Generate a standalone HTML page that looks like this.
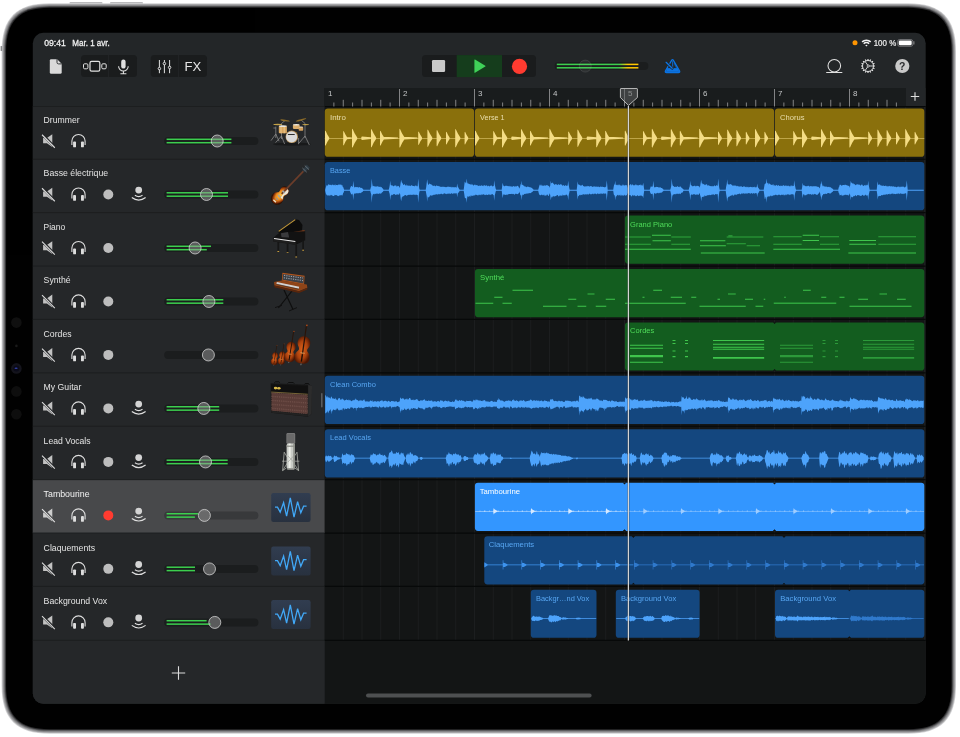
<!DOCTYPE html>
<html lang="fr"><head><meta charset="utf-8"><title>GarageBand</title>
<style>html,body{margin:0;padding:0;background:#fff}body{width:960px;height:737px;overflow:hidden}svg{display:block;will-change:transform;opacity:0.9999}</style></head>
<body>
<svg width="960" height="737" viewBox="0 0 960 737" font-family="'Liberation Sans', sans-serif">
<defs>
<linearGradient id="ring" x1="0" y1="0" x2="1" y2="1">
<stop offset="0" stop-color="#f2f2f2"/><stop offset="0.5" stop-color="#bdbdbf"/><stop offset="1" stop-color="#8a8a8c"/>
</linearGradient>
<linearGradient id="mvol" x1="0" y1="0" x2="1" y2="0">
<stop offset="0" stop-color="#3ccf4e"/><stop offset="0.76" stop-color="#3ccf4e"/><stop offset="0.87" stop-color="#ffc800"/><stop offset="1" stop-color="#ffc800"/>
</linearGradient>
<linearGradient id="wavebox" x1="0" y1="0" x2="0" y2="1">
<stop offset="0" stop-color="#313d50"/><stop offset="1" stop-color="#28313f"/>
</linearGradient>
<clipPath id="scr"><rect x="32.8" y="32.8" width="892.9" height="671" rx="10.5" ry="10.5"/></clipPath>
</defs>
<rect width="960" height="737" fill="#fff"/>
<rect x="69.5" y="2" width="33" height="3" rx="1" fill="#b9b9bb"/>
<rect x="110" y="2" width="33" height="3" rx="1" fill="#b9b9bb"/>
<path d="M49.6 3.2H908C941.31 3.2 956 17.89 956 51.2V685.7C956 719.01 941.31 733.7 908 733.7H49.6C16.29 733.7 1.6 719.01 1.6 685.7V51.2C1.6 17.89 16.29 3.2 49.6 3.2Z" fill="#d2d2d4"/>
<path d="M49.6 4H908C940.76 4 955.2 18.44 955.2 51.2V685.7C955.2 718.46 940.76 732.9 908 732.9H49.6C16.84 732.9 2.4 718.46 2.4 685.7V51.2C2.4 18.44 16.84 4 49.6 4Z" fill="#a6a6a8"/>
<path d="M49.6 4.9H908C940.13 4.9 954.3 19.07 954.3 51.2V685.7C954.3 717.83 940.13 732 908 732H49.6C17.47 732 3.3 717.83 3.3 685.7V51.2C3.3 19.07 17.47 4.9 49.6 4.9Z" fill="#868688"/>
<path d="M49.6 5.9H908C939.44 5.9 953.3 19.76 953.3 51.2V685.7C953.3 717.14 939.44 731 908 731H49.6C18.16 731 4.3 717.14 4.3 685.7V51.2C4.3 19.76 18.16 5.9 49.6 5.9Z" fill="#5c5c5e"/>
<path d="M49.6 6.8H908C938.81 6.8 952.4 20.39 952.4 51.2V685.7C952.4 716.51 938.81 730.1 908 730.1H49.6C18.79 730.1 5.2 716.51 5.2 685.7V51.2C5.2 20.39 18.79 6.8 49.6 6.8Z" fill="#2c2c2e"/>
<path d="M49.6 7.7H908C938.19 7.7 951.5 21.01 951.5 51.2V685.7C951.5 715.89 938.19 729.2 908 729.2H49.6C19.41 729.2 6.1 715.89 6.1 685.7V51.2C6.1 21.01 19.41 7.7 49.6 7.7Z" fill="#000"/>
<rect x="0.6" y="46" width="1.6" height="5" rx="0.6" fill="#8a8a8c"/>
<circle cx="16.4" cy="322.6" r="5.3" fill="#101010"/>
<circle cx="16.4" cy="391.4" r="5.3" fill="#0e0e0e"/>
<circle cx="16.4" cy="414.3" r="5.3" fill="#0e0e0e"/>
<circle cx="16.4" cy="345.9" r="1.3" fill="#1a1a1a"/>
<circle cx="16.4" cy="368.4" r="5.3" fill="#14141c"/><circle cx="16.4" cy="368.4" r="3" fill="#0a0a18"/><ellipse cx="16.1" cy="368.3" rx="1.6" ry="0.8" fill="#3240a8"/>
<g clip-path="url(#scr)">
<rect x="32" y="32" width="895" height="673" fill="#232628"/>
<rect x="324.5" y="88" width="602.5" height="617" fill="#131515"/>
<rect x="32" y="106.5" width="292.5" height="600" fill="#252729"/>
<rect x="324.5" y="88" width="581.5" height="18.5" fill="#191c1d"/>
<rect x="906" y="88" width="20" height="18.5" fill="#232628"/>
<path d="M324.5 106.5V640M343.25 106.5V640M362 106.5V640M380.75 106.5V640M399.5 106.5V640M418.25 106.5V640M437 106.5V640M455.75 106.5V640M474.5 106.5V640M493.25 106.5V640M512 106.5V640M530.75 106.5V640M549.5 106.5V640M568.25 106.5V640M587 106.5V640M605.75 106.5V640M624.5 106.5V640M643.25 106.5V640M662 106.5V640M680.75 106.5V640M699.5 106.5V640M718.25 106.5V640M737 106.5V640M755.75 106.5V640M774.5 106.5V640M793.25 106.5V640M812 106.5V640M830.75 106.5V640M849.5 106.5V640M868.25 106.5V640M887 106.5V640M905.75 106.5V640M924.5 106.5V640" stroke="#1c1e1f" stroke-width="1" fill="none"/>
<path d="M324.5 106.5H926M324.5 159.25H926M324.5 212.65H926M324.5 266.05H926M324.5 319.45H926M324.5 372.85H926M324.5 426.25H926M324.5 479.65H926M324.5 533.05H926M324.5 586.45H926M324.5 640.3H926" stroke="#070909" stroke-width="1.2" fill="none"/>
<path d="M333.88 102.5V106.5M343.25 99.8V106.5M352.62 102.5V106.5M362 99.8V106.5M371.38 102.5V106.5M380.75 99.8V106.5M390.12 102.5V106.5M399.5 89V106.5M408.88 102.5V106.5M418.25 99.8V106.5M427.62 102.5V106.5M437 99.8V106.5M446.38 102.5V106.5M455.75 99.8V106.5M465.12 102.5V106.5M474.5 89V106.5M483.88 102.5V106.5M493.25 99.8V106.5M502.62 102.5V106.5M512 99.8V106.5M521.38 102.5V106.5M530.75 99.8V106.5M540.12 102.5V106.5M549.5 89V106.5M558.88 102.5V106.5M568.25 99.8V106.5M577.62 102.5V106.5M587 99.8V106.5M596.38 102.5V106.5M605.75 99.8V106.5M615.12 102.5V106.5M624.5 89V106.5M633.88 102.5V106.5M643.25 99.8V106.5M652.62 102.5V106.5M662 99.8V106.5M671.38 102.5V106.5M680.75 99.8V106.5M690.12 102.5V106.5M699.5 89V106.5M708.88 102.5V106.5M718.25 99.8V106.5M727.62 102.5V106.5M737 99.8V106.5M746.38 102.5V106.5M755.75 99.8V106.5M765.12 102.5V106.5M774.5 89V106.5M783.88 102.5V106.5M793.25 99.8V106.5M802.62 102.5V106.5M812 99.8V106.5M821.38 102.5V106.5M830.75 99.8V106.5M840.12 102.5V106.5M849.5 89V106.5M858.88 102.5V106.5M868.25 99.8V106.5M877.62 102.5V106.5M887 99.8V106.5M896.38 102.5V106.5" stroke="#8e9091" stroke-width="0.9" fill="none"/>
<text x="328" y="96" font-size="8" fill="#c2c4c5" >1</text>
<text x="403" y="96" font-size="8" fill="#c2c4c5" >2</text>
<text x="478" y="96" font-size="8" fill="#c2c4c5" >3</text>
<text x="553" y="96" font-size="8" fill="#c2c4c5" >4</text>
<text x="628" y="96" font-size="8" fill="#c2c4c5" >5</text>
<text x="703" y="96" font-size="8" fill="#c2c4c5" >6</text>
<text x="778" y="96" font-size="8" fill="#c2c4c5" >7</text>
<text x="853" y="96" font-size="8" fill="#c2c4c5" >8</text>
<path d="M910.8 96.5H919.2M915 92.3V100.7" stroke="#e0e0e0" stroke-width="1.1" fill="none"/>
<rect x="324.8" y="108.6" width="149.3" height="48.2" rx="3.1" ry="3.1" fill="#8a700c"/>
<rect x="474.9" y="108.6" width="299.2" height="48.2" rx="3.1" ry="3.1" fill="#8a700c"/>
<rect x="774.9" y="108.6" width="149.4" height="48.2" rx="3.1" ry="3.1" fill="#8a700c"/>
<path d="M324.8 137.9H474.1V138.5H324.8ZM325 131.13L325.5 130.6L327.29 134.4L329.25 137.5V138.9L327.29 142L325.5 145.8L325 145.27ZM343.2 131.5L343.7 131L345.4 134.6L347.24 137.5V138.9L345.4 141.8L343.7 145.4L343.2 144.9ZM346.74 137.1L351.8 137.6V138.8L346.74 139.3ZM352 129.36L352.5 128.7L354.7 133.45L357.24 137.5V138.9L354.7 142.95L352.5 147.7L352 147.03ZM361.3 137.18L361.9 136.5L370.9 137.3V139.1L361.9 139.9L361.3 139.22ZM371 129.64L371.5 129L373.64 133.6L376.08 137.5V138.9L373.64 142.8L371.5 147.4L371 146.76ZM380 131.22L380.5 130.7L382.26 134.45L384.2 137.5V138.9L382.26 141.95L380.5 145.7L380 145.17ZM383.7 136.85L398 137.6V138.8L383.7 139.55ZM399.4 129.36L399.9 128.7L402.1 133.45L404.64 137.5V138.9L402.1 142.95L399.9 147.7L399.4 147.03ZM404.14 136.85L417.4 137.6V138.8L404.14 139.55ZM418.2 131.88L418.7 131.4L420.31 134.8L422.04 137.5V138.9L420.31 141.6L418.7 145L418.2 144.52ZM427.4 130.02L427.9 129.4L429.95 133.8L432.28 137.5V138.9L429.95 142.6L427.9 147L427.4 146.38ZM436.6 130.57L437.1 130L439.02 134.1L441.16 137.5V138.9L439.02 142.3L437.1 146.4L436.6 145.83ZM446 132.25L446.5 131.8L448.02 135L449.63 137.5V138.9L448.02 141.4L446.5 144.6L446 144.15ZM455.2 129.55L455.7 128.9L457.86 133.55L460.34 137.5V138.9L457.86 142.85L455.7 147.5L455.2 146.85ZM464.6 132.25L465.1 131.8L466.62 135L468.23 137.5V138.9L466.62 141.4L465.1 144.6L464.6 144.15Z" fill="#f4dc84"/>
<path d="M474.8 137.9H624.6V138.5H474.8ZM475 131.13L475.5 130.6L477.29 134.4L479.25 137.5V138.9L477.29 142L475.5 145.8L475 145.27ZM493.2 131.5L493.7 131L495.4 134.6L497.24 137.5V138.9L495.4 141.8L493.7 145.4L493.2 144.9ZM496.74 137.1L501.8 137.6V138.8L496.74 139.3ZM502 129.36L502.5 128.7L504.7 133.45L507.24 137.5V138.9L504.7 142.95L502.5 147.7L502 147.03ZM511.3 137.18L511.9 136.5L520.9 137.3V139.1L511.9 139.9L511.3 139.22ZM521 129.64L521.5 129L523.64 133.6L526.08 137.5V138.9L523.64 142.8L521.5 147.4L521 146.76ZM530 131.22L530.5 130.7L532.26 134.45L534.2 137.5V138.9L532.26 141.95L530.5 145.7L530 145.17ZM533.7 136.85L548 137.6V138.8L533.7 139.55ZM549.4 129.36L549.9 128.7L552.1 133.45L554.64 137.5V138.9L552.1 142.95L549.9 147.7L549.4 147.03ZM554.14 136.85L567.4 137.6V138.8L554.14 139.55ZM568.2 131.88L568.7 131.4L570.31 134.8L572.04 137.5V138.9L570.31 141.6L568.7 145L568.2 144.52ZM577.4 130.02L577.9 129.4L579.95 133.8L582.28 137.5V138.9L579.95 142.6L577.9 147L577.4 146.38ZM586.7 137.18L587.3 136.5L596.3 137.3V139.1L587.3 139.9L586.7 139.22ZM596.2 129.64L596.7 129L598.84 133.6L601.28 137.5V138.9L598.84 142.8L596.7 147.4L596.2 146.76ZM605.2 131.22L605.7 130.7L607.46 134.45L609.4 137.5V138.9L607.46 141.95L605.7 145.7L605.2 145.17ZM608.9 136.85L623.2 137.6V138.8L608.9 139.55Z" fill="#f4dc84"/>
<path d="M624.6 137.9H774.1V138.5H624.6ZM624.8 131.13L625.3 130.6L627.09 134.4L629.05 137.5V138.9L627.09 142L625.3 145.8L624.8 145.27ZM643 131.5L643.5 131L645.2 134.6L647.04 137.5V138.9L645.2 141.8L643.5 145.4L643 144.9ZM646.54 137.1L651.6 137.6V138.8L646.54 139.3ZM651.8 129.36L652.3 128.7L654.5 133.45L657.04 137.5V138.9L654.5 142.95L652.3 147.7L651.8 147.03ZM661.1 137.18L661.7 136.5L670.7 137.3V139.1L661.7 139.9L661.1 139.22ZM670.8 129.64L671.3 129L673.44 133.6L675.88 137.5V138.9L673.44 142.8L671.3 147.4L670.8 146.76ZM679.8 131.22L680.3 130.7L682.06 134.45L684 137.5V138.9L682.06 141.95L680.3 145.7L679.8 145.17ZM683.5 136.85L697.8 137.6V138.8L683.5 139.55ZM699.2 129.36L699.7 128.7L701.9 133.45L704.44 137.5V138.9L701.9 142.95L699.7 147.7L699.2 147.03ZM703.94 136.85L717.2 137.6V138.8L703.94 139.55ZM718 131.88L718.5 131.4L720.11 134.8L721.84 137.5V138.9L720.11 141.6L718.5 145L718 144.52ZM727.2 130.02L727.7 129.4L729.75 133.8L732.08 137.5V138.9L729.75 142.6L727.7 147L727.2 146.38ZM736.4 130.57L736.9 130L738.82 134.1L740.96 137.5V138.9L738.82 142.3L736.9 146.4L736.4 145.83ZM745.8 132.25L746.3 131.8L747.82 135L749.43 137.5V138.9L747.82 141.4L746.3 144.6L745.8 144.15ZM755 129.55L755.5 128.9L757.66 133.55L760.14 137.5V138.9L757.66 142.85L755.5 147.5L755 146.85ZM764.4 132.25L764.9 131.8L766.42 135L768.03 137.5V138.9L766.42 141.4L764.9 144.6L764.4 144.15Z" fill="#f4dc84"/>
<path d="M774.8 137.9H924.3V138.5H774.8ZM775 131.13L775.5 130.6L777.29 134.4L779.25 137.5V138.9L777.29 142L775.5 145.8L775 145.27ZM793.2 131.5L793.7 131L795.4 134.6L797.24 137.5V138.9L795.4 141.8L793.7 145.4L793.2 144.9ZM796.74 137.1L801.8 137.6V138.8L796.74 139.3ZM802 129.36L802.5 128.7L804.7 133.45L807.24 137.5V138.9L804.7 142.95L802.5 147.7L802 147.03ZM811.3 137.18L811.9 136.5L820.9 137.3V139.1L811.9 139.9L811.3 139.22ZM821 129.64L821.5 129L823.64 133.6L826.08 137.5V138.9L823.64 142.8L821.5 147.4L821 146.76ZM830 131.22L830.5 130.7L832.26 134.45L834.2 137.5V138.9L832.26 141.95L830.5 145.7L830 145.17ZM833.7 136.85L848 137.6V138.8L833.7 139.55ZM849.4 129.36L849.9 128.7L852.1 133.45L854.64 137.5V138.9L852.1 142.95L849.9 147.7L849.4 147.03ZM854.14 136.85L867.4 137.6V138.8L854.14 139.55ZM868.2 131.88L868.7 131.4L870.31 134.8L872.04 137.5V138.9L870.31 141.6L868.7 145L868.2 144.52ZM877.4 130.02L877.9 129.4L879.95 133.8L882.28 137.5V138.9L879.95 142.6L877.9 147L877.4 146.38ZM886.6 130.57L887.1 130L889.02 134.1L891.16 137.5V138.9L889.02 142.3L887.1 146.4L886.6 145.83ZM896 132.25L896.5 131.8L898.02 135L899.63 137.5V138.9L898.02 141.4L896.5 144.6L896 144.15ZM905.2 129.55L905.7 128.9L907.86 133.55L910.34 137.5V138.9L907.86 142.85L905.7 147.5L905.2 146.85ZM914.6 132.25L915.1 131.8L916.62 135L918.23 137.5V138.9L916.62 141.4L915.1 144.6L914.6 144.15Z" fill="#f4dc84"/>
<text x="330" y="119.6" font-size="7.5" fill="#eadfae" textLength="15.8" lengthAdjust="spacingAndGlyphs" >Intro</text>
<text x="480.1" y="119.6" font-size="7.5" fill="#eadfae" textLength="24.5" lengthAdjust="spacingAndGlyphs" >Verse 1</text>
<text x="780.1" y="119.6" font-size="7.5" fill="#eadfae" textLength="24.5" lengthAdjust="spacingAndGlyphs" >Chorus</text>
<rect x="324.8" y="162.05" width="599.5" height="48.2" rx="3.1" ry="3.1" fill="#14477f"/>
<path d="M325.2 189.85L325.7 187.71L326.2 186.28L326.7 184.9L327.2 185.78L327.7 185.38L328.2 184.16L328.7 184.45L329.2 184.79L329.7 184.81L330.2 185.01L330.7 184.78L331.2 184.64L331.7 185.41L332.2 184.48L332.7 184.73L333.2 184.75L333.7 185.28L334.2 185.2L334.7 184.49L335.2 185.72L335.7 184.36L336.2 184.92L336.7 185.11L337.2 185.37L337.7 184.99L338.2 184.84L338.7 184.55L339.2 184.86L339.7 184.55L340.2 184.48L340.7 184.79L341.2 184.6L341.7 185.49L342.2 184.86L342.7 186.68L343.2 187.11L343.7 188.4L344.2 189.85L344.7 189.85L345.2 189.85L345.7 189.85L346.2 189.85L346.7 189.85L347.2 189.85L347.7 189.85L348.2 189.85L348.7 189.85L349.2 189.85L349.7 189.85L350.2 188.1L350.7 186.71L351.2 186.08L351.7 186.05L352.2 186.64L352.7 186.97L353.2 180.75L353.7 184.75L354.2 186.9L354.7 187.54L355.2 187.32L355.7 186.79L356.2 187.26L356.7 187.11L357.2 187.22L357.7 186.89L358.2 187.39L358.7 187.59L359.2 186.92L359.7 187.33L360.2 187.46L360.7 187.91L361.2 187.65L361.7 187.96L362.2 188.28L362.7 188.69L363.2 189.49L363.7 189.85L364.2 189.85L364.7 189.85L365.2 189.85L365.7 189.85L366.2 189.85L366.7 189.85L367.2 189.85L367.7 189.85L368.2 189.85L368.7 189.85L369.2 189.85L369.7 189.85L370.2 189.85L370.7 187.85L371.2 186.53L371.7 178.38L372.2 183.38L372.7 186.15L373.2 186.36L373.7 185.86L374.2 186.22L374.7 186.62L375.2 186.09L375.7 186.89L376.2 186.33L376.7 186.81L377.2 186.26L377.7 186.27L378.2 186.89L378.7 186.29L379.2 187.05L379.7 186.72L380.2 186.43L380.7 187.24L381.2 186.93L381.7 187.32L382.2 188.25L382.7 188.31L383.2 189.22L383.7 189.85L384.2 189.85L384.7 189.85L385.2 189.85L385.7 189.85L386.2 189.85L386.7 189.85L387.2 189.85L387.7 189.85L388.2 189.85L388.7 189.85L389.2 188.02L389.7 185.54L390.2 180.75L390.7 184.75L391.2 185.72L391.7 185.07L392.2 185.4L392.7 185.57L393.2 186.15L393.7 186.26L394.2 185.79L394.7 185.51L395.2 185.4L395.7 185.39L396.2 185.44L396.7 186.66L397.2 186.45L397.7 185.79L398.2 186.14L398.7 185.87L399.2 186.77L399.7 187.96L400.2 185.83L400.7 182.53L401.2 179.8L401.7 182.34L402.2 182.87L402.7 183.55L403.2 184.94L403.7 184.69L404.2 184.57L404.7 184.1L405.2 185.53L405.7 185.52L406.2 184.2L406.7 185.79L407.2 185.5L407.7 185.52L408.2 185.23L408.7 185.91L409.2 186.07L409.7 185.23L410.2 186.23L410.7 185.84L411.2 185.28L411.7 185.29L412.2 185.86L412.7 185.8L413.2 185.93L413.7 185.9L414.2 185.81L414.7 186.48L415.2 186L415.7 185.31L416.2 185.38L416.7 186.27L417.2 186.47L417.7 185.74L418.2 178.38L418.7 183.38L419.2 188.21L419.7 189.85L420.2 189.85L420.7 189.85L421.2 189.85L421.7 189.85L422.2 189.85L422.7 189.85L423.2 189.85L423.7 189.85L424.2 189.85L424.7 189.85L425.2 189.85L425.7 189.85L426.2 187.1L426.7 182.91L427.2 179.33L427.7 182.72L428.2 184.75L428.7 184.73L429.2 183.83L429.7 183.5L430.2 183.99L430.7 184.22L431.2 184.48L431.7 184.58L432.2 185.85L432.7 185.16L433.2 185.79L433.7 185.88L434.2 185.23L434.7 185.9L435.2 186.01L435.7 186.47L436.2 185.32L436.7 185.71L437.2 185.87L437.7 185.96L438.2 186.27L438.7 185.81L439.2 186.87L439.7 185.91L440.2 186.54L440.7 186.9L441.2 186.92L441.7 186.82L442.2 186.43L442.7 186.92L443.2 186.82L443.7 186.66L444.2 187.09L444.7 186.83L445.2 187.19L445.7 187.05L446.2 187.27L446.7 186.93L447.2 186.96L447.7 186.61L448.2 186.99L448.7 186.61L449.2 186.76L449.7 187.05L450.2 187.3L450.7 186.86L451.2 186.69L451.7 187.38L452.2 187.4L452.7 186.73L453.2 187.35L453.7 187.29L454.2 186.89L454.7 187.53L455.2 187.34L455.7 187.06L456.2 187.64L456.7 187.22L457.2 183.6L457.7 186.4L458.2 187.34L458.7 188.17L459.2 189.05L459.7 189.85L460.2 189.85L460.7 189.85L461.2 189.85L461.7 189.85L462.2 189.85L462.7 189.85L463.2 189.85L463.7 189.85L464.2 185.67L464.7 181.87L465.2 181.97L465.7 183.34L466.2 182.7L466.7 178.38L467.2 182.42L467.7 183.52L468.2 183.77L468.7 183.46L469.2 183.91L469.7 183.88L470.2 184.9L470.7 184.11L471.2 183.71L471.7 184.91L472.2 184.52L472.7 184.52L473.2 185.19L473.7 185.67L474.2 184.58L474.7 184.68L475.2 185.52L475.7 184.59L476.2 185.24L476.7 184.88L477.2 185.61L477.7 185.33L478.2 185.66L478.7 186.07L479.2 186.12L479.7 185.13L480.2 186.05L480.7 185.73L481.2 185.17L481.7 185.53L482.2 185.84L482.7 185.67L483.2 186.16L483.7 185.35L484.2 185.34L484.7 185.15L485.2 185.73L485.7 185.63L486.2 185.57L486.7 185.34L487.2 185.72L487.7 186.57L488.2 185.66L488.7 185.86L489.2 186.33L489.7 186.56L490.2 185.72L490.7 185.84L491.2 185.4L491.7 185.54L492.2 186.57L492.7 186.33L493.2 185.91L493.7 186.21L494.2 180.28L494.7 184.48L495.2 186.5L495.7 188.8L496.2 189.85L496.7 189.85L497.2 189.85L497.7 189.85L498.2 189.85L498.7 189.85L499.2 189.85L499.7 189.85L500.2 189.85L500.7 189.85L501.2 189.85L501.7 189.85L502.2 185.85L502.7 182.65L503.2 185L503.7 186.09L504.2 186.21L504.7 186.15L505.2 185.42L505.7 185.88L506.2 186.1L506.7 185.51L507.2 186.35L507.7 185.64L508.2 186.16L508.7 185.88L509.2 186.71L509.7 185.68L510.2 186.13L510.7 186.48L511.2 186.24L511.7 186.75L512.2 186.58L512.7 186.73L513.2 186.23L513.7 185.91L514.2 186.31L514.7 186.8L515.2 186.56L515.7 186.23L516.2 186.05L516.7 186.7L517.2 185.92L517.7 185.85L518.2 185.9L518.7 187.27L519.2 187.45L519.7 188.77L520.2 186.01L520.7 183.72L521.2 185.3L521.7 180.75L522.2 184.75L522.7 184.95L523.2 185.15L523.7 185.65L524.2 185.7L524.7 186.67L525.2 186.05L525.7 186.94L526.2 187.23L526.7 187.08L527.2 186.53L527.7 186.8L528.2 186.77L528.7 186.74L529.2 187.28L529.7 186.97L530.2 187.49L530.7 187.19L531.2 187.51L531.7 188L532.2 188.21L532.7 188.78L533.2 189.29L533.7 189.85L534.2 189.85L534.7 189.85L535.2 189.85L535.7 189.85L536.2 189.85L536.7 189.85L537.2 189.85L537.7 189.85L538.2 189.85L538.7 187.89L539.2 186.2L539.7 184.84L540.2 184.61L540.7 185.52L541.2 185.93L541.7 184.52L542.2 185.14L542.7 185.92L543.2 185.66L543.7 185.81L544.2 185.11L544.7 185.68L545.2 185.7L545.7 185.38L546.2 185.08L546.7 185.19L547.2 185.77L547.7 184.73L548.2 186.01L548.7 185.73L549.2 186.37L549.7 187.75L550.2 185.43L550.7 180.75L551.2 183.19L551.7 183.22L552.2 182.59L552.7 182.87L553.2 183.66L553.7 183.46L554.2 184.38L554.7 185.04L555.2 183.9L555.7 184.18L556.2 185.08L556.7 183.76L557.2 184.85L557.7 185.29L558.2 184.13L558.7 184.29L559.2 184.79L559.7 184.97L560.2 184.33L560.7 184.37L561.2 184.7L561.7 184.37L562.2 185.54L562.7 185.74L563.2 184.9L563.7 185.24L564.2 186.02L564.7 185.66L565.2 185.57L565.7 184.95L566.2 185.97L566.7 185.5L567.2 185.91L567.7 185.06L568.2 180.75L568.7 184.75L569.2 187.75L569.7 189.85L570.2 189.85L570.7 189.85L571.2 189.85L571.7 189.85L572.2 189.85L572.7 189.85L573.2 189.85L573.7 189.85L574.2 189.85L574.7 189.85L575.2 189.85L575.7 189.85L576.2 189.85L576.7 189.85L577.2 185.46L577.7 181.23L578.2 184.98L578.7 184.06L579.2 185.24L579.7 184.51L580.2 185.75L580.7 185.21L581.2 186.08L581.7 185.07L582.2 184.86L582.7 184.97L583.2 186.21L583.7 185.93L584.2 186.53L584.7 186.53L585.2 186.38L585.7 186.21L586.2 186.75L586.7 186.04L587.2 185.73L587.7 186.62L588.2 186.02L588.7 186.37L589.2 186.36L589.7 186.86L590.2 186.32L590.7 186.04L591.2 186.35L591.7 186.21L592.2 186.7L592.7 187L593.2 186.43L593.7 186.61L594.2 186.85L594.7 186.36L595.2 186.2L595.7 186.94L596.2 186.85L596.7 186.39L597.2 186.65L597.7 186.7L598.2 186.81L598.7 186.57L599.2 187.25L599.7 186.97L600.2 186.4L600.7 186.68L601.2 186.39L601.7 186.98L602.2 187.06L602.7 186.38L603.2 187.07L603.7 187.11L604.2 187.15L604.7 187.34L605.2 187.21L605.7 186.87L606.2 186.54L606.7 180.28L607.2 184.48L607.7 189.85L608.2 189.85L608.7 189.85L609.2 189.85L609.7 189.85L610.2 189.85L610.7 189.85L611.2 189.85L611.7 189.85L612.2 189.85L612.7 189.85L613.2 189.85L613.7 186.66L614.2 184.51L614.7 184.5L615.2 180.75L615.7 184.75L616.2 185.37L616.7 184.57L617.2 185.53L617.7 184.53L618.2 185.52L618.7 184.41L619.2 184.3L619.7 185.28L620.2 185.29L620.7 185.49L621.2 185.72L621.7 185.4L622.2 185.86L622.7 184.47L623.2 184.41L623.7 185.43L624.2 185.23L624.7 185.51L625.2 185.47L625.7 184.77L626.2 185.28L626.7 185.32L627.2 185.28L627.7 187.42L628.2 187.48L628.7 184.93L629.2 185.34L629.7 185.31L630.2 184L630.7 184.21L631.2 185.71L631.7 184.4L632.2 184.6L632.7 184.48L633.2 184.88L633.7 185.56L634.2 185.27L634.7 185.19L635.2 185.23L635.7 184.19L636.2 184.4L636.7 185.37L637.2 185.4L637.7 185.02L638.2 185.29L638.7 185.39L639.2 185.11L639.7 184.98L640.2 184.22L640.7 185.13L641.2 185.76L641.7 184.46L642.2 185.77L642.7 185.23L643.2 182.65L643.7 185.85L644.2 189.85L644.7 189.85L645.2 189.85L645.7 189.85L646.2 189.85L646.7 189.85L647.2 189.85L647.7 189.85L648.2 189.85L648.7 189.85L649.2 189.85L649.7 189.85L650.2 188.37L650.7 186.6L651.2 186.6L651.7 186.63L652.2 186.47L652.7 186.66L653.2 180.75L653.7 184.75L654.2 187.45L654.7 187.3L655.2 187.09L655.7 187.14L656.2 186.9L656.7 186.85L657.2 187.11L657.7 186.95L658.2 187.35L658.7 187.54L659.2 187.06L659.7 187.75L660.2 187.52L660.7 187.2L661.2 187.94L661.7 188.04L662.2 188.31L662.7 188.82L663.2 189.22L663.7 189.85L664.2 189.85L664.7 189.85L665.2 189.85L665.7 189.85L666.2 189.85L666.7 189.85L667.2 189.85L667.7 189.85L668.2 189.85L668.7 189.85L669.2 189.85L669.7 189.85L670.2 189.85L670.7 188.28L671.2 185.88L671.7 178.38L672.2 183.38L672.7 185.42L673.2 186.32L673.7 186.1L674.2 186.68L674.7 186.9L675.2 187.03L675.7 186.49L676.2 187.05L676.7 186.64L677.2 186.6L677.7 186.12L678.2 186.67L678.7 186.95L679.2 187.15L679.7 186.62L680.2 186.47L680.7 186.52L681.2 187.51L681.7 187.64L682.2 188.21L682.7 188.64L683.2 189.01L683.7 189.85L684.2 189.85L684.7 189.85L685.2 189.85L685.7 189.85L686.2 189.85L686.7 189.85L687.2 189.85L687.7 189.85L688.2 189.85L688.7 189.85L689.2 187.65L689.7 186.48L690.2 180.75L690.7 184.75L691.2 185.12L691.7 185.84L692.2 186.22L692.7 186.14L693.2 186.07L693.7 186.27L694.2 185.82L694.7 185.66L695.2 185.72L695.7 186.42L696.2 186.13L696.7 185.86L697.2 186.08L697.7 185.63L698.2 186.03L698.7 186.34L699.2 186.25L699.7 187.71L700.2 185.84L700.7 182.65L701.2 179.8L701.7 182.76L702.2 184.4L702.7 183.09L703.2 183.96L703.7 184.35L704.2 184.28L704.7 185.13L705.2 184.28L705.7 185.22L706.2 184.35L706.7 184.3L707.2 184.8L707.7 186.06L708.2 185L708.7 185.47L709.2 185.88L709.7 185.46L710.2 186.19L710.7 185.92L711.2 186.17L711.7 186.17L712.2 185.65L712.7 186.43L713.2 186.24L713.7 186.31L714.2 185.81L714.7 185.37L715.2 186.04L715.7 186.22L716.2 185.32L716.7 185.32L717.2 186.04L717.7 185.33L718.2 178.38L718.7 183.38L719.2 187.55L719.7 189.85L720.2 189.85L720.7 189.85L721.2 189.85L721.7 189.85L722.2 189.85L722.7 189.85L723.2 189.85L723.7 189.85L724.2 189.85L724.7 189.85L725.2 189.85L725.7 189.85L726.2 186.23L726.7 184.37L727.2 179.33L727.7 183.63L728.2 184.12L728.7 184.64L729.2 184.62L729.7 184.6L730.2 184.09L730.7 184.37L731.2 184.33L731.7 184.92L732.2 185.32L732.7 185.79L733.2 185.83L733.7 185.49L734.2 185.09L734.7 185.89L735.2 185.72L735.7 185.3L736.2 186.44L736.7 185.73L737.2 185.81L737.7 186.13L738.2 186.12L738.7 186.77L739.2 185.89L739.7 187.03L740.2 186.13L740.7 186.57L741.2 186.43L741.7 186.37L742.2 186.9L742.7 187.06L743.2 186.7L743.7 186.22L744.2 186.44L744.7 186.47L745.2 186.65L745.7 187.16L746.2 186.56L746.7 187.2L747.2 187.36L747.7 186.87L748.2 186.86L748.7 187.48L749.2 187.17L749.7 186.94L750.2 186.76L750.7 186.88L751.2 187.03L751.7 187.26L752.2 186.78L752.7 187.49L753.2 187.02L753.7 187.17L754.2 186.61L754.7 187.26L755.2 187.51L755.7 187.16L756.2 186.72L756.7 187.64L757.2 183.6L757.7 186.4L758.2 187.8L758.7 188.14L759.2 188.96L759.7 189.85L760.2 189.85L760.7 189.85L761.2 189.85L761.7 189.85L762.2 189.85L762.7 189.85L763.2 189.85L763.7 189.85L764.2 186.68L764.7 183.88L765.2 183.75L765.7 183.58L766.2 182.5L766.7 178.38L767.2 183.14L767.7 183.23L768.2 182.79L768.7 184.78L769.2 183.19L769.7 183.76L770.2 184.49L770.7 184.21L771.2 184.86L771.7 185.04L772.2 185.13L772.7 184.52L773.2 184.08L773.7 185.44L774.2 185.75L774.7 184.94L775.2 185.56L775.7 185.85L776.2 185.25L776.7 184.7L777.2 185.6L777.7 186.11L778.2 185.05L778.7 185.13L779.2 185.94L779.7 186L780.2 185.37L780.7 186.2L781.2 185.67L781.7 185.66L782.2 186.13L782.7 185.5L783.2 185.13L783.7 185.19L784.2 185.47L784.7 186.31L785.2 185.24L785.7 185.69L786.2 186.13L786.7 185.28L787.2 186.36L787.7 185.41L788.2 186.14L788.7 185.3L789.2 186.58L789.7 186.17L790.2 185.27L790.7 186.5L791.2 186.29L791.7 185.34L792.2 185.4L792.7 186.23L793.2 185.91L793.7 186.11L794.2 180.28L794.7 184.48L795.2 186.61L795.7 189.01L796.2 189.85L796.7 189.85L797.2 189.85L797.7 189.85L798.2 189.85L798.7 189.85L799.2 189.85L799.7 189.85L800.2 189.85L800.7 189.85L801.2 189.85L801.7 189.85L802.2 186.68L802.7 182.65L803.2 185.31L803.7 185.6L804.2 184.97L804.7 185.96L805.2 186.15L805.7 186.04L806.2 186.38L806.7 186.01L807.2 185.7L807.7 186.29L808.2 185.88L808.7 185.51L809.2 186.48L809.7 186.58L810.2 186.02L810.7 186.32L811.2 186.13L811.7 186.21L812.2 186.16L812.7 186.59L813.2 186.19L813.7 186.15L814.2 186.34L814.7 186.36L815.2 186.14L815.7 186.21L816.2 186.24L816.7 186.62L817.2 186.71L817.7 186.64L818.2 186.72L818.7 186.96L819.2 187.43L819.7 188.45L820.2 186.4L820.7 183.39L821.2 183.97L821.7 180.75L822.2 184.63L822.7 186.18L823.2 186.4L823.7 185.62L824.2 186.05L824.7 186.78L825.2 187.12L825.7 186.21L826.2 186.59L826.7 186.77L827.2 186.77L827.7 187.36L828.2 186.63L828.7 187.07L829.2 186.86L829.7 187.21L830.2 187.61L830.7 187.12L831.2 187.86L831.7 188.23L832.2 188.38L832.7 188.75L833.2 189.39L833.7 189.85L834.2 189.85L834.7 189.85L835.2 189.85L835.7 189.85L836.2 189.85L836.7 189.85L837.2 189.85L837.7 189.85L838.2 189.85L838.7 187.45L839.2 186.63L839.7 184.76L840.2 185.1L840.7 184.52L841.2 185.7L841.7 185.49L842.2 185.47L842.7 185.01L843.2 184.99L843.7 185.06L844.2 185.21L844.7 184.72L845.2 184.79L845.7 184.69L846.2 185.27L846.7 184.91L847.2 185.63L847.7 185.15L848.2 186.05L848.7 185.73L849.2 185.84L849.7 187.7L850.2 185.13L850.7 180.75L851.2 182.85L851.7 182.43L852.2 183.79L852.7 183.37L853.2 183L853.7 184.24L854.2 183.97L854.7 184.14L855.2 185.27L855.7 185.09L856.2 183.92L856.7 185.12L857.2 184.49L857.7 184.36L858.2 184.01L858.7 185.29L859.2 184.37L859.7 184.9L860.2 185.19L860.7 185.84L861.2 184.59L861.7 184.85L862.2 184.44L862.7 185.54L863.2 185.76L863.7 185.92L864.2 185.45L864.7 184.9L865.2 184.78L865.7 185.7L866.2 185.46L866.7 184.76L867.2 184.7L867.7 185.6L868.2 180.75L868.7 184.75L869.2 187.49L869.7 189.85L870.2 189.85L870.7 189.85L871.2 189.85L871.7 189.85L872.2 189.85L872.7 189.85L873.2 189.85L873.7 189.85L874.2 189.85L874.7 189.85L875.2 189.85L875.7 189.85L876.2 189.85L876.7 189.85L877.2 184.92L877.7 181.23L878.2 185.03L878.7 184.79L879.2 184.23L879.7 184.4L880.2 185.7L880.7 184.74L881.2 184.98L881.7 185.93L882.2 186.01L882.7 185.56L883.2 185.96L883.7 185.26L884.2 186.08L884.7 186.06L885.2 186.02L885.7 185.46L886.2 185.82L886.7 186.6L887.2 185.85L887.7 186.66L888.2 186.32L888.7 186.28L889.2 186.24L889.7 185.87L890.2 186.4L890.7 186.33L891.2 186.13L891.7 186.23L892.2 186.5L892.7 186.48L893.2 186.61L893.7 186.17L894.2 186.71L894.7 186.83L895.2 187.1L895.7 186.44L896.2 187.21L896.7 187.31L897.2 186.79L897.7 186.87L898.2 186.66L898.7 186.46L899.2 186.38L899.7 187.29L900.2 187.3L900.7 186.54L901.2 186.8L901.7 186.76L902.2 186.58L902.7 186.78L903.2 187.06L903.7 186.35L904.2 187.42L904.7 187.18L905.2 187.21L905.7 186.61L906.2 186.39L906.7 180.28L907.2 184.48L907.7 189.85L908.2 189.85L908.7 189.85L909.2 189.85L909.7 189.85L910.2 189.85L910.7 189.85L911.2 189.85L911.7 189.85L912.2 189.85L912.7 189.85L913.2 189.85L913.7 189.85L914.2 189.85L914.7 189.85L915.2 189.85L915.7 189.85L916.2 189.85L916.7 189.85L917.2 189.85L917.7 189.85L918.2 189.85L918.7 189.85L919.2 189.85L919.7 189.85L920.2 189.85L920.7 189.85L921.2 189.85L921.7 189.85L922.2 189.85L922.7 189.85L923.2 189.85L923.7 189.85L923.7 190.65L923.2 190.65L922.7 190.65L922.2 190.65L921.7 190.65L921.2 190.65L920.7 190.65L920.2 190.65L919.7 190.65L919.2 190.65L918.7 190.65L918.2 190.65L917.7 190.65L917.2 190.65L916.7 190.65L916.2 190.65L915.7 190.65L915.2 190.65L914.7 190.65L914.2 190.65L913.7 190.65L913.2 190.65L912.7 190.65L912.2 190.65L911.7 190.65L911.2 190.65L910.7 190.65L910.2 190.65L909.7 190.65L909.2 190.65L908.7 190.65L908.2 190.65L907.7 190.65L907.2 195.5L906.7 200.75L906.2 193.55L905.7 193.25L905.2 193.25L904.7 193.93L904.2 193.29L903.7 194.13L903.2 193.53L902.7 193.77L902.2 193.99L901.7 193.48L901.2 194.04L900.7 193.24L900.2 193.4L899.7 194.19L899.2 193.58L898.7 193.54L898.2 193.5L897.7 194.14L897.2 193.24L896.7 193.81L896.2 194.11L895.7 194.06L895.2 194.19L894.7 193.83L894.2 194.11L893.7 194.19L893.2 193.58L892.7 193.44L892.2 193.68L891.7 194.07L891.2 193.4L890.7 194.07L890.2 194.55L889.7 193.57L889.2 194.39L888.7 194.05L888.2 194L887.7 194.48L887.2 194.44L886.7 194.59L886.2 194.05L885.7 194.91L885.2 194.17L884.7 194.72L884.2 194.68L883.7 194.9L883.2 194.46L882.7 195.31L882.2 195.3L881.7 195.25L881.2 194.95L880.7 196.01L880.2 195.88L879.7 196.12L879.2 195.76L878.7 196.57L878.2 196.04L877.7 199.75L877.2 194.24L876.7 190.65L876.2 190.65L875.7 190.65L875.2 190.65L874.7 190.65L874.2 190.65L873.7 190.65L873.2 190.65L872.7 190.65L872.2 190.65L871.7 190.65L871.2 190.65L870.7 190.65L870.2 190.65L869.7 190.65L869.2 192.68L868.7 195.25L868.2 200.25L867.7 195.14L867.2 195.44L866.7 195.52L866.2 195.42L865.7 194.96L865.2 194.46L864.7 195.49L864.2 195.81L863.7 195.62L863.2 195.73L862.7 194.67L862.2 194.92L861.7 195.51L861.2 196.06L860.7 196.08L860.2 195.76L859.7 194.88L859.2 196.06L858.7 195.14L858.2 195.01L857.7 195.22L857.2 195L856.7 196.23L856.2 196.09L855.7 195.29L855.2 195.29L854.7 195.99L854.2 196.16L853.7 195.7L853.2 196.8L852.7 196.94L852.2 197.44L851.7 196.99L851.2 196.59L850.7 200.25L850.2 195.16L849.7 193.13L849.2 194.82L848.7 195.98L848.2 194.73L847.7 195.37L847.2 194.66L846.7 194.77L846.2 195.16L845.7 194.57L845.2 194.93L844.7 194.76L844.2 195.24L843.7 195.24L843.2 195.41L842.7 195.18L842.2 195.97L841.7 195.41L841.2 194.61L840.7 195.14L840.2 195.1L839.7 195.44L839.2 193.59L838.7 193.06L838.2 190.65L837.7 190.65L837.2 190.65L836.7 190.65L836.2 190.65L835.7 190.65L835.2 190.65L834.7 190.65L834.2 190.65L833.7 190.65L833.2 191.11L832.7 191.83L832.2 192.09L831.7 192.8L831.2 192.6L830.7 193.44L830.2 193.45L829.7 193.43L829.2 193.25L828.7 192.98L828.2 193.11L827.7 193.49L827.2 193.01L826.7 193.88L826.2 193.96L825.7 193.47L825.2 193.94L824.7 194.33L824.2 193.64L823.7 194.15L823.2 194.09L822.7 195.54L822.2 195.35L821.7 200.25L821.2 196.63L820.7 196.49L820.2 193.75L819.7 191.58L819.2 193.1L818.7 193.85L818.2 193.55L817.7 194.66L817.2 194.76L816.7 194.91L816.2 194.57L815.7 194.24L815.2 194.28L814.7 193.68L814.2 194.14L813.7 194.78L813.2 194.18L812.7 194.8L812.2 193.86L811.7 194.72L811.2 194.75L810.7 194.12L810.2 194.3L809.7 194.2L809.2 194.23L808.7 194.28L808.2 193.87L807.7 194.04L807.2 194.72L806.7 194.41L806.2 195.24L805.7 194.97L805.2 195.4L804.7 195.51L804.2 194.58L803.7 194.33L803.2 194.51L802.7 198.25L802.2 194.86L801.7 190.65L801.2 190.65L800.7 190.65L800.2 190.65L799.7 190.65L799.2 190.65L798.7 190.65L798.2 190.65L797.7 190.65L797.2 190.65L796.7 190.65L796.2 190.65L795.7 191.47L795.2 193.1L794.7 195.5L794.2 200.75L793.7 194.54L793.2 194.62L792.7 194.15L792.2 194.32L791.7 194.18L791.2 194.18L790.7 195.1L790.2 194.27L789.7 194.43L789.2 195.22L788.7 194.26L788.2 194.53L787.7 194.52L787.2 194.24L786.7 194.56L786.2 195.16L785.7 195.31L785.2 194.16L784.7 195.1L784.2 195.41L783.7 195.18L783.2 194.33L782.7 195.1L782.2 194.66L781.7 194.74L781.2 194.68L780.7 195.29L780.2 195.26L779.7 195.11L779.2 194.58L778.7 194.68L778.2 194.85L777.7 195.47L777.2 195.04L776.7 195.3L776.2 194.86L775.7 194.78L775.2 194.84L774.7 195.61L774.2 195.05L773.7 195.28L773.2 195.6L772.7 196.14L772.2 195.55L771.7 195.85L771.2 196.43L770.7 195.22L770.2 196.15L769.7 196.45L769.2 196.31L768.7 196.96L768.2 195.72L767.7 196.93L767.2 196.5L766.7 202.75L766.2 197.51L765.7 196.66L765.2 198.99L764.7 198.68L764.2 194.46L763.7 190.65L763.2 190.65L762.7 190.65L762.2 190.65L761.7 190.65L761.2 190.65L760.7 190.65L760.2 190.65L759.7 190.65L759.2 191.54L758.7 192.48L758.2 193.28L757.7 193.75L757.2 197.25L756.7 193.32L756.2 193.27L755.7 193.11L755.2 193.37L754.7 193.88L754.2 193.05L753.7 193.02L753.2 193.53L752.7 193.84L752.2 193.42L751.7 192.99L751.2 193.37L750.7 193.7L750.2 193.58L749.7 193.24L749.2 193.19L748.7 193.02L748.2 193.31L747.7 193.6L747.2 193.38L746.7 193.5L746.2 193.45L745.7 193.59L745.2 193.47L744.7 193.63L744.2 193.6L743.7 193.3L743.2 193.59L742.7 193.28L742.2 194.08L741.7 193.31L741.2 193.66L740.7 194.57L740.2 193.89L739.7 193.56L739.2 193.68L738.7 194.34L738.2 193.81L737.7 194.53L737.2 193.92L736.7 194.43L736.2 195.19L735.7 194.2L735.2 195.05L734.7 194.13L734.2 195.23L733.7 195.69L733.2 195.52L732.7 195.46L732.2 194.62L731.7 195.65L731.2 195.23L730.7 195.67L730.2 195.97L729.7 196.84L729.2 196.35L728.7 196.86L728.2 197.29L727.7 197.99L727.2 201.75L726.7 197.44L726.2 194.48L725.7 190.65L725.2 190.65L724.7 190.65L724.2 190.65L723.7 190.65L723.2 190.65L722.7 190.65L722.2 190.65L721.7 190.65L721.2 190.65L720.7 190.65L720.2 190.65L719.7 190.65L719.2 192.8L718.7 196.5L718.2 202.75L717.7 194.11L717.2 194.22L716.7 194.53L716.2 194.04L715.7 194.33L715.2 194L714.7 194.64L714.2 195.23L713.7 194.1L713.2 194.69L712.7 194.68L712.2 194.17L711.7 194.64L711.2 194.65L710.7 195.18L710.2 194.97L709.7 194.77L709.2 195.3L708.7 195.17L708.2 194.9L707.7 195.5L707.2 194.96L706.7 195.95L706.2 195.57L705.7 196.3L705.2 195.85L704.7 195.17L704.2 196.67L703.7 196.24L703.2 197.18L702.7 196.64L702.2 197L701.7 197.41L701.2 201.25L700.7 197.1L700.2 195.62L699.7 192.92L699.2 193.69L698.7 195.01L698.2 194.59L697.7 194.97L697.2 193.89L696.7 194.68L696.2 194.57L695.7 194.87L695.2 194.69L694.7 194.17L694.2 194.23L693.7 194.54L693.2 194.1L692.7 194.97L692.2 194.39L691.7 194.65L691.2 194.23L690.7 195.5L690.2 200.25L689.7 193.99L689.2 192.47L688.7 190.65L688.2 190.65L687.7 190.65L687.2 190.65L686.7 190.65L686.2 190.65L685.7 190.65L685.2 190.65L684.7 190.65L684.2 190.65L683.7 190.65L683.2 191.2L682.7 192.21L682.2 192.78L681.7 192.76L681.2 192.85L680.7 193.85L680.2 194.18L679.7 193.58L679.2 193.79L678.7 194.23L678.2 193.46L677.7 194.01L677.2 193.61L676.7 194.31L676.2 193.62L675.7 194.07L675.2 194.57L674.7 194.29L674.2 194.06L673.7 194.79L673.2 194.29L672.7 194.98L672.2 196.5L671.7 202.75L671.2 194.93L670.7 192.48L670.2 190.65L669.7 190.65L669.2 190.65L668.7 190.65L668.2 190.65L667.7 190.65L667.2 190.65L666.7 190.65L666.2 190.65L665.7 190.65L665.2 190.65L664.7 190.65L664.2 190.65L663.7 190.65L663.2 191.2L662.7 191.52L662.2 192.21L661.7 192.4L661.2 192.66L660.7 192.73L660.2 192.67L659.7 192.69L659.2 193.23L658.7 192.87L658.2 193.54L657.7 193.08L657.2 192.86L656.7 193.19L656.2 193.61L655.7 193.55L655.2 193.79L654.7 192.94L654.2 193.3L653.7 195.25L653.2 200.25L652.7 193.35L652.2 194.29L651.7 193.84L651.2 194.16L650.7 193.52L650.2 192.4L649.7 190.65L649.2 190.65L648.7 190.65L648.2 190.65L647.7 190.65L647.2 190.65L646.7 190.65L646.2 190.65L645.7 190.65L645.2 190.65L644.7 190.65L644.2 190.65L643.7 194.25L643.2 198.25L642.7 196.26L642.2 196.05L641.7 195.92L641.2 195.34L640.7 195.66L640.2 195.51L639.7 196.09L639.2 195.43L638.7 196.25L638.2 195.72L637.7 195.87L637.2 194.85L636.7 196.29L636.2 196.06L635.7 196.24L635.2 195.68L634.7 195.21L634.2 195.54L633.7 195.71L633.2 195.45L632.7 194.87L632.2 195.63L631.7 196.44L631.2 196.26L630.7 194.98L630.2 195.52L629.7 194.93L629.2 195.33L628.7 195.38L628.2 192.49L627.7 193.38L627.2 194.31L626.7 195.33L626.2 195.34L625.7 195.39L625.2 195.68L624.7 194.52L624.2 195.62L623.7 196.03L623.2 194.9L622.7 196.12L622.2 194.83L621.7 196.02L621.2 194.75L620.7 194.77L620.2 196.19L619.7 194.76L619.2 195.49L618.7 194.71L618.2 196.04L617.7 194.99L617.2 194.82L616.7 195.88L616.2 196.54L615.7 196.47L615.2 200.25L614.7 195.1L614.2 195.59L613.7 194.11L613.2 190.65L612.7 190.65L612.2 190.65L611.7 190.65L611.2 190.65L610.7 190.65L610.2 190.65L609.7 190.65L609.2 190.65L608.7 190.65L608.2 190.65L607.7 190.65L607.2 195.5L606.7 200.75L606.2 193.74L605.7 193.87L605.2 193.16L604.7 193.32L604.2 194.14L603.7 193.23L603.2 193.51L602.7 194.11L602.2 193.39L601.7 194L601.2 193.31L600.7 193.33L600.2 194.17L599.7 193.69L599.2 193.87L598.7 194.15L598.2 193.46L597.7 193.77L597.2 193.2L596.7 194.22L596.2 194.15L595.7 193.79L595.2 193.39L594.7 193.75L594.2 193.77L593.7 193.73L593.2 194.42L592.7 193.51L592.2 193.92L591.7 194.05L591.2 194.46L590.7 193.94L590.2 194.49L589.7 193.46L589.2 193.81L588.7 194.52L588.2 194.52L587.7 193.74L587.2 194.64L586.7 194.52L586.2 194.25L585.7 194.08L585.2 194.87L584.7 194.27L584.2 194.66L583.7 194.44L583.2 194.04L582.7 194.15L582.2 195.35L581.7 194.96L581.2 194.66L580.7 194.7L580.2 195.4L579.7 194.66L579.2 195.17L578.7 196.3L578.2 195.85L577.7 199.75L577.2 195.06L576.7 190.65L576.2 190.65L575.7 190.65L575.2 190.65L574.7 190.65L574.2 190.65L573.7 190.65L573.2 190.65L572.7 190.65L572.2 190.65L571.7 190.65L571.2 190.65L570.7 190.65L570.2 190.65L569.7 190.65L569.2 192.88L568.7 195.25L568.2 200.25L567.7 195.87L567.2 195.54L566.7 194.48L566.2 194.84L565.7 194.83L565.2 195.56L564.7 195.09L564.2 195.6L563.7 195.45L563.2 194.92L562.7 194.62L562.2 196L561.7 196.01L561.2 195.2L560.7 195.36L560.2 196.1L559.7 195.34L559.2 196.25L558.7 196.4L558.2 196.02L557.7 195.11L557.2 195.04L556.7 195.56L556.2 195.67L555.7 196.24L555.2 196.01L554.7 196.39L554.2 196.4L553.7 195.73L553.2 196.68L552.7 196.32L552.2 197.38L551.7 196.52L551.2 197.92L550.7 200.25L550.2 195.11L549.7 193.28L549.2 194.67L548.7 195.88L548.2 196L547.7 194.63L547.2 194.58L546.7 194.75L546.2 195.71L545.7 195.7L545.2 195.35L544.7 196L544.2 194.47L543.7 195.48L543.2 194.53L542.7 195.49L542.2 194.63L541.7 194.62L541.2 195.09L540.7 195.04L540.2 195.62L539.7 195L539.2 194.59L538.7 193.12L538.2 190.65L537.7 190.65L537.2 190.65L536.7 190.65L536.2 190.65L535.7 190.65L535.2 190.65L534.7 190.65L534.2 190.65L533.7 190.65L533.2 191.04L532.7 191.86L532.2 191.87L531.7 192.26L531.2 192.73L530.7 193.2L530.2 192.92L529.7 193.25L529.2 193.04L528.7 193.21L528.2 193.45L527.7 193.69L527.2 193.18L526.7 193.79L526.2 193.57L525.7 194.19L525.2 193.44L524.7 194.2L524.2 193.65L523.7 195L523.2 194.64L522.7 194.5L522.2 195.52L521.7 200.25L521.2 195.32L520.7 195.58L520.2 194.85L519.7 191.6L519.2 192.9L518.7 193.25L518.2 193.83L517.7 194.24L517.2 193.99L516.7 193.71L516.2 194.09L515.7 193.86L515.2 193.78L514.7 194.92L514.2 194.18L513.7 193.74L513.2 194.22L512.7 193.72L512.2 194.35L511.7 193.86L511.2 193.95L510.7 193.96L510.2 194.01L509.7 193.96L509.2 194.07L508.7 194.12L508.2 194.56L507.7 194.37L507.2 195.14L506.7 194.49L506.2 194.63L505.7 194.94L505.2 194.84L504.7 194.85L504.2 194.48L503.7 194.31L503.2 195.08L502.7 198.25L502.2 194.81L501.7 190.65L501.2 190.65L500.7 190.65L500.2 190.65L499.7 190.65L499.2 190.65L498.7 190.65L498.2 190.65L497.7 190.65L497.2 190.65L496.7 190.65L496.2 190.65L495.7 191.53L495.2 193.78L494.7 195.5L494.2 200.75L493.7 195.04L493.2 195.12L492.7 193.96L492.2 194.35L491.7 194.72L491.2 194.06L490.7 195.2L490.2 194.5L489.7 194.58L489.2 194.63L488.7 194.55L488.2 194.6L487.7 195L487.2 194.96L486.7 194.63L486.2 194.38L485.7 195.35L485.2 194.81L484.7 194.54L484.2 195.29L483.7 194.07L483.2 194.41L482.7 194.89L482.2 194.36L481.7 194.32L481.2 195.23L480.7 195.25L480.2 194.46L479.7 195.29L479.2 194.4L478.7 194.67L478.2 195.6L477.7 195.53L477.2 195L476.7 194.97L476.2 194.84L475.7 194.56L475.2 195.17L474.7 195.19L474.2 195.56L473.7 195.93L473.2 195.08L472.7 195.64L472.2 195.9L471.7 196.3L471.2 195.34L470.7 195.4L470.2 196.96L469.7 196.59L469.2 195.83L468.7 196.96L468.2 196.44L467.7 196.08L467.2 197.45L466.7 202.75L466.2 198.15L465.7 198.06L465.2 198.49L464.7 197.29L464.2 193.78L463.7 190.65L463.2 190.65L462.7 190.65L462.2 190.65L461.7 190.65L461.2 190.65L460.7 190.65L460.2 190.65L459.7 190.65L459.2 191.79L458.7 192.62L458.2 192.77L457.7 193.75L457.2 197.25L456.7 193.33L456.2 193.19L455.7 193.54L455.2 193.23L454.7 193.71L454.2 192.97L453.7 193.32L453.2 193.77L452.7 193.82L452.2 193.63L451.7 193.19L451.2 193.18L450.7 193.93L450.2 193.7L449.7 193.21L449.2 193.98L448.7 193.41L448.2 193.77L447.7 193.61L447.2 193.93L446.7 193.7L446.2 194.14L445.7 193.94L445.2 193.51L444.7 193.56L444.2 193.19L443.7 193.49L443.2 194.18L442.7 194.05L442.2 194.38L441.7 193.58L441.2 194.04L440.7 193.7L440.2 194.29L439.7 194.1L439.2 194.44L438.7 193.74L438.2 194.43L437.7 194.33L437.2 194.72L436.7 194L436.2 194.41L435.7 194.61L435.2 194.59L434.7 194.65L434.2 194.74L433.7 195.18L433.2 194.62L432.7 195.76L432.2 195.08L431.7 196.23L431.2 194.97L430.7 195.82L430.2 195.12L429.7 196.29L429.2 196.98L428.7 197.22L428.2 197.45L427.7 196.28L427.2 201.75L426.7 196.01L426.2 193.57L425.7 190.65L425.2 190.65L424.7 190.65L424.2 190.65L423.7 190.65L423.2 190.65L422.7 190.65L422.2 190.65L421.7 190.65L421.2 190.65L420.7 190.65L420.2 190.65L419.7 190.65L419.2 192.65L418.7 196.5L418.2 202.75L417.7 195.07L417.2 194.98L416.7 194.51L416.2 194.97L415.7 194.41L415.2 195.13L414.7 194.51L414.2 194.91L413.7 194.3L413.2 194.96L412.7 195L412.2 194.56L411.7 194.95L411.2 194.63L410.7 195L410.2 194.42L409.7 194.77L409.2 195.09L408.7 194.8L408.2 194.92L407.7 195.44L407.2 195L406.7 195.4L406.2 196.1L405.7 194.88L405.2 195.1L404.7 195L404.2 196.02L403.7 196.31L403.2 196L402.7 197.43L402.2 195.89L401.7 197.91L401.2 201.25L400.7 198.66L400.2 194.44L399.7 192.77L399.2 194.46L398.7 194.26L398.2 195.07L397.7 194.52L397.2 194.22L396.7 194.84L396.2 194.62L395.7 195.07L395.2 194.81L394.7 193.94L394.2 194.29L393.7 194.01L393.2 194.43L392.7 194.72L392.2 195.23L391.7 194.4L391.2 195.55L390.7 195.71L390.2 200.25L389.7 193.95L389.2 192.48L388.7 190.65L388.2 190.65L387.7 190.65L387.2 190.65L386.7 190.65L386.2 190.65L385.7 190.65L385.2 190.65L384.7 190.65L384.2 190.65L383.7 190.65L383.2 191.31L382.7 191.89L382.2 192.36L381.7 192.79L381.2 193.41L380.7 193.36L380.2 194.11L379.7 193.4L379.2 193.33L378.7 193.72L378.2 193.97L377.7 193.45L377.2 193.79L376.7 193.7L376.2 193.47L375.7 193.91L375.2 193.73L374.7 193.77L374.2 194.49L373.7 193.68L373.2 194.24L372.7 194.67L372.2 196.5L371.7 202.75L371.2 194.24L370.7 192.86L370.2 190.65L369.7 190.65L369.2 190.65L368.7 190.65L368.2 190.65L367.7 190.65L367.2 190.65L366.7 190.65L366.2 190.65L365.7 190.65L365.2 190.65L364.7 190.65L364.2 190.65L363.7 190.65L363.2 191.02L362.7 191.82L362.2 192.03L361.7 192.43L361.2 192.39L360.7 193.11L360.2 193.19L359.7 192.68L359.2 193.16L358.7 192.97L358.2 193.38L357.7 193.2L357.2 193.33L356.7 193.34L356.2 193.3L355.7 193.2L355.2 193.82L354.7 193.79L354.2 193.13L353.7 195.25L353.2 200.25L352.7 193.27L352.2 194.43L351.7 194.57L351.2 193.94L350.7 193.17L350.2 191.89L349.7 190.65L349.2 190.65L348.7 190.65L348.2 190.65L347.7 190.65L347.2 190.65L346.7 190.65L346.2 190.65L345.7 190.65L345.2 190.65L344.7 190.65L344.2 190.65L343.7 192.4L343.2 193.12L342.7 194.76L342.2 195.85L341.7 194.64L341.2 195.48L340.7 194.89L340.2 195.47L339.7 196.12L339.2 194.81L338.7 196.17L338.2 196.07L337.7 196.03L337.2 195.51L336.7 195.19L336.2 195.05L335.7 195.27L335.2 194.92L334.7 194.72L334.2 196.11L333.7 195.89L333.2 196.09L332.7 196.03L332.2 195.37L331.7 194.65L331.2 195.58L330.7 194.72L330.2 195.85L329.7 196.08L329.2 194.89L328.7 195.45L328.2 195.46L327.7 195.08L327.2 196.12L326.7 194.67L326.2 194.53L325.7 193.06L325.2 190.65Z" fill="#4da3fb"/>
<text x="330" y="173.05" font-size="7.5" fill="#57a6f2" textLength="20.3" lengthAdjust="spacingAndGlyphs" >Basse</text>
<rect x="624.9" y="215.5" width="299.4" height="48.2" rx="3.1" ry="3.1" fill="#135d1f"/>
<path d="M625 236.5H650.83V237.5H625ZM671.33 236.5H690.83V237.5H671.33ZM625 243.67H650.83V244.67H625ZM671.33 243.67H690V244.67H671.33ZM726.67 236.5H763.33V237.5H726.67ZM728.33 235.17H732.5V236.17H728.33ZM726.67 243.17H745.83V244.17H726.67ZM746.67 245.33H760V246.33H746.67ZM773.33 236.17H801.67V237.17H773.33ZM820 236.17H839V237.17H820ZM773.33 243.67H801.67V244.67H773.33ZM820 243.67H839V244.67H820ZM878.33 236.17H916V237.17H878.33ZM878.33 243.67H916V244.67H878.33Z" fill="#2fa53d"/>
<path d="M652 234.83H670.83V235.83H652ZM652.5 240.17H670.83V241.17H652.5ZM625 248.83H690.83V249.83H625ZM700 240.17H725.33V241.17H700ZM700 245.33H725.83V246.33H700ZM700.83 252.5H764.67V253.5H700.83ZM802.67 234.67H819V235.67H802.67ZM802.67 240H819V241H802.67ZM773.33 248.83H840V249.83H773.33ZM849.33 240H876V241H849.33ZM849.33 243.67H876V244.67H849.33ZM848.33 252.5H916V253.5H848.33Z" fill="#3fc54c"/>
<text x="630.1" y="226.5" font-size="7.5" fill="#4fdc5a" textLength="42.2" lengthAdjust="spacingAndGlyphs" >Grand Piano</text>
<rect x="474.9" y="268.95" width="449.4" height="48.2" rx="3.1" ry="3.1" fill="#135d1f"/>
<path d="M512.5 289.75H533V290.75H512.5ZM653.25 289.75H662V290.75H653.25ZM494.25 296.75H502.5V297.75H494.25ZM642.5 296.75H644.5V297.75H642.5ZM670.75 296.75H682V297.75H670.75ZM691.25 296.75H696.25V297.75H691.25ZM568.25 298.75H576.25V299.75H568.25ZM605.75 298.75H615V299.75H605.75ZM475.5 302.75H493.25V303.75H475.5ZM502.5 302.75H511.75V303.75H502.5ZM625 302.75H685.75V303.75H625ZM543 305.75H566.5V306.75H543ZM577.5 305.75H586.25V306.75H577.5ZM595.75 305.75H606.25V306.75H595.75ZM784.25 296.75H785.75V297.75H784.25ZM821.25 296.75H826.25V297.75H821.25ZM839.5 296.75H844.5V297.75H839.5ZM717.5 298.75H720V299.75H717.5ZM745 298.75H753V299.75H745ZM763.75 298.75H765.25V299.75H763.75ZM858.25 298.75H868V299.75H858.25ZM897 298.75H905.75V299.75H897ZM803 289.75H810.75V290.75H803ZM699.5 305.75H745.75V306.75H699.5ZM755.5 305.75H763.25V306.75H755.5ZM849.5 305.75H911.5V306.75H849.5Z" fill="#3fc54c"/>
<path d="M587.5 293.2H594.5V294.8H587.5ZM728 293.2H735.75V294.8H728ZM879.5 293.2H887V294.8H879.5Z" fill="#2c9a3a"/>
<path d="M773.75 302.45H836.25V304.05H773.75Z" fill="#2fa53d"/>
<text x="480.1" y="279.95" font-size="7.5" fill="#4fdc5a" textLength="24.25" lengthAdjust="spacingAndGlyphs" >Synthé</text>
<rect x="624.9" y="322.4" width="299.4" height="48.2" rx="3.1" ry="3.1" fill="#135d1f"/>
<path d="M772.9 322.3H776.3L774.6 324.1ZM772.9 370.7H776.3L774.6 368.9Z" fill="#0f1111"/>
<path d="M630 344.67H663V345.67H630ZM630 347.83H663V348.83H630ZM630 361.67H663V362.67H630Z" fill="#3fc54c"/>
<path d="M630 354.97H663V357.37H630Z" fill="#3fc54c"/>
<path d="M672.5 339.9H675.5V341.1H672.5ZM672.5 342.9H675.5V344.1H672.5ZM672.5 350.4H675.5V351.6H672.5ZM672.5 356.07H675.5V357.27H672.5ZM685 339.9H688V341.1H685ZM685 342.9H688V344.1H685ZM685 350.4H688V351.6H685ZM685 356.07H688V357.27H685Z" fill="#3fc54c"/>
<path d="M713 340H764.17V341H713ZM713 343.83H764.17V344.83H713ZM713 346.83H764.17V347.83H713ZM713 348.83H764.17V349.83H713Z" fill="#3fc54c"/>
<path d="M713 357.03H764.17V358.63H713Z" fill="#3fc54c"/>
<path d="M780 344.67H813V345.67H780ZM780 347.83H813V348.83H780ZM780 361.67H813V362.67H780Z" fill="#2c9a3a"/>
<path d="M780 354.97H813V357.37H780Z" fill="#2c9a3a"/>
<path d="M822.5 339.9H825.5V341.1H822.5ZM822.5 342.9H825.5V344.1H822.5ZM822.5 350.4H825.5V351.6H822.5ZM822.5 356.07H825.5V357.27H822.5ZM835 339.9H838V341.1H835ZM835 342.9H838V344.1H835ZM835 350.4H838V351.6H835ZM835 356.07H838V357.27H835Z" fill="#2c9a3a"/>
<path d="M863 340H914.17V341H863ZM863 343.83H914.17V344.83H863ZM863 346.83H914.17V347.83H863ZM863 348.83H914.17V349.83H863Z" fill="#2c9a3a"/>
<path d="M863 357.03H914.17V358.63H863Z" fill="#2c9a3a"/>
<text x="630.1" y="333.4" font-size="7.5" fill="#4fdc5a" textLength="24.2" lengthAdjust="spacingAndGlyphs" >Cordes</text>
<rect x="324.8" y="375.85" width="599.5" height="48.2" rx="3.1" ry="3.1" fill="#14477f"/>
<path d="M325.2 394.94L325.7 395.51L326.2 396.03L326.7 397.76L327.2 395.81L327.7 397.54L328.2 397.49L328.7 397.32L329.2 397.87L329.7 397.58L330.2 398.94L330.7 397.8L331.2 396.78L331.7 396.39L332.2 398.17L332.7 398.48L333.2 398.88L333.7 398L334.2 399.09L334.7 399.09L335.2 397.51L335.7 399.1L336.2 399.74L336.7 399.26L337.2 400.4L337.7 399.84L338.2 399.06L338.7 398.01L339.2 398.1L339.7 398.03L340.2 399.73L340.7 399.59L341.2 399.7L341.7 398.92L342.2 398.23L342.7 399.16L343.2 399.43L343.7 399.47L344.2 400.83L344.7 400.17L345.2 400.11L345.7 400.31L346.2 399.22L346.7 399.86L347.2 400.02L347.7 399.94L348.2 400.6L348.7 399.59L349.2 399.8L349.7 400.41L350.2 399.83L350.7 400.8L351.2 401.17L351.7 400.98L352.2 401.01L352.7 399.88L353.2 400.54L353.7 399.78L354.2 400.24L354.7 400.12L355.2 398.22L355.7 399.4L356.2 399.87L356.7 399.57L357.2 400.23L357.7 400.03L358.2 400.41L358.7 401.31L359.2 400.95L359.7 400.34L360.2 399.82L360.7 400.78L361.2 400.69L361.7 400.27L362.2 400.52L362.7 400.9L363.2 400.32L363.7 399.87L364.2 399.3L364.7 400.54L365.2 401.4L365.7 401.48L366.2 401.14L366.7 401.61L367.2 401.14L367.7 401.44L368.2 401.65L368.7 401.47L369.2 401.43L369.7 401.39L370.2 400.82L370.7 400.3L371.2 401.15L371.7 400.99L372.2 399.89L372.7 401.71L373.2 401.6L373.7 401.69L374.2 401.23L374.7 401.25L375.2 401.33L375.7 401.36L376.2 401.4L376.7 401.81L377.2 401.59L377.7 400.88L378.2 401.28L378.7 401.24L379.2 401.69L379.7 401.55L380.2 400.74L380.7 401.08L381.2 400.23L381.7 400.81L382.2 400.06L382.7 401.14L383.2 401.29L383.7 401.4L384.2 400.97L384.7 400.79L385.2 401.02L385.7 400.55L386.2 400.93L386.7 401.14L387.2 401.82L387.7 401.57L388.2 401.1L388.7 400.79L389.2 401L389.7 401.83L390.2 401.9L390.7 401.73L391.2 401.12L391.7 401.12L392.2 401.34L392.7 400.9L393.2 401.14L393.7 401.22L394.2 401.61L394.7 401.68L395.2 401.08L395.7 401.69L396.2 401.1L396.7 401.62L397.2 401.95L397.7 402.28L398.2 402L398.7 401.66L399.2 401.13L399.7 401.8L400.2 397.22L400.7 397.92L401.2 398.74L401.7 399.03L402.2 397.73L402.7 398.72L403.2 398.48L403.7 398.46L404.2 399.03L404.7 399.88L405.2 399.43L405.7 398.84L406.2 399.48L406.7 398.57L407.2 398.38L407.7 399.75L408.2 399.53L408.7 399.25L409.2 398.05L409.7 398.06L410.2 398.03L410.7 399.45L411.2 400.24L411.7 399.82L412.2 399.8L412.7 399.95L413.2 399.3L413.7 400.2L414.2 400.32L414.7 399.81L415.2 400.09L415.7 399.41L416.2 399.44L416.7 399.07L417.2 399.11L417.7 399.89L418.2 400.49L418.7 400.9L419.2 401.09L419.7 401.13L420.2 400.42L420.7 400.37L421.2 400.21L421.7 400.49L422.2 400.46L422.7 400.41L423.2 399.73L423.7 400.12L424.2 399.34L424.7 399.4L425.2 400.24L425.7 400.89L426.2 400.31L426.7 400.9L427.2 401.06L427.7 400.91L428.2 400.59L428.7 400.45L429.2 400.6L429.7 400.94L430.2 400.95L430.7 400.52L431.2 400.84L431.7 400.16L432.2 400.66L432.7 401.67L433.2 401.35L433.7 401.65L434.2 401.62L434.7 401L435.2 401.22L435.7 401.55L436.2 401.61L436.7 402.09L437.2 401.32L437.7 401.12L438.2 401.21L438.7 400.64L439.2 401.67L439.7 401.78L440.2 400.28L440.7 400.26L441.2 401.01L441.7 400.36L442.2 400.61L442.7 400.96L443.2 401.44L443.7 401.73L444.2 401.23L444.7 400.68L445.2 400.96L445.7 400.34L446.2 401.34L446.7 400.99L447.2 400.64L447.7 401.66L448.2 401.3L448.7 400.42L449.2 401.31L449.7 401.72L450.2 401.79L450.7 401.9L451.2 402.01L451.7 401.88L452.2 401.4L452.7 401.22L453.2 401.76L453.7 401.92L454.2 401.79L454.7 401.27L455.2 399.82L455.7 399.55L456.2 399.13L456.7 400.47L457.2 400.19L457.7 400.87L458.2 401.17L458.7 400.76L459.2 399.93L459.7 400.21L460.2 400.56L460.7 400.91L461.2 400.11L461.7 400.36L462.2 400.75L462.7 400.67L463.2 400.46L463.7 400.88L464.2 401.21L464.7 401.41L465.2 401.41L465.7 401.73L466.2 401.35L466.7 400.49L467.2 401.08L467.7 401.04L468.2 400.97L468.7 401.05L469.2 400.78L469.7 400.89L470.2 401.01L470.7 400.84L471.2 401.05L471.7 401.83L472.2 401.75L472.7 401.41L473.2 400.44L473.7 399.59L474.2 400.3L474.7 400.36L475.2 400.66L475.7 399.55L476.2 399.28L476.7 400.24L477.2 399.56L477.7 400.19L478.2 400.28L478.7 400.47L479.2 400.25L479.7 400.67L480.2 400.3L480.7 400.67L481.2 400.89L481.7 401.12L482.2 401.18L482.7 400.74L483.2 399.77L483.7 401.06L484.2 400.3L484.7 400.08L485.2 400.41L485.7 401.57L486.2 401.46L486.7 401.27L487.2 401.65L487.7 401.21L488.2 401.67L488.7 401.57L489.2 401.81L489.7 402.07L490.2 401.21L490.7 401.55L491.2 400.67L491.7 400.97L492.2 401.17L492.7 401.34L493.2 401.71L493.7 401.88L494.2 401.4L494.7 401.85L495.2 401.44L495.7 402.04L496.2 402.07L496.7 401.99L497.2 399.92L497.7 400.24L498.2 397.77L498.7 400.1L499.2 399.07L499.7 399.85L500.2 400.58L500.7 400.61L501.2 400.17L501.7 400.82L502.2 400.16L502.7 400.89L503.2 400.99L503.7 401.62L504.2 401.87L504.7 401.65L505.2 401.31L505.7 400.99L506.2 400.46L506.7 401L507.2 400.96L507.7 400.81L508.2 399.9L508.7 400.81L509.2 400.64L509.7 400.53L510.2 401.58L510.7 400.2L511.2 401.58L511.7 401.22L512.2 400.25L512.7 399.84L513.2 400.42L513.7 398.97L514.2 400.32L514.7 400.85L515.2 401.01L515.7 400.86L516.2 400.67L516.7 400.12L517.2 400.66L517.7 400.89L518.2 401.26L518.7 401.74L519.2 401.34L519.7 400.43L520.2 400.46L520.7 400.48L521.2 400.51L521.7 400.62L522.2 401.03L522.7 400.84L523.2 400.04L523.7 400.23L524.2 400.55L524.7 401.23L525.2 401.42L525.7 401.6L526.2 401.49L526.7 401.12L527.2 400.9L527.7 401.02L528.2 400.68L528.7 400.79L529.2 400.82L529.7 400.4L530.2 399.67L530.7 399.46L531.2 399.64L531.7 400.29L532.2 400.42L532.7 401.23L533.2 400.4L533.7 400.22L534.2 400L534.7 400.55L535.2 400.93L535.7 400.55L536.2 400.43L536.7 400.24L537.2 400.85L537.7 400.65L538.2 400.2L538.7 401L539.2 400.5L539.7 401.39L540.2 401.11L540.7 400.86L541.2 400.48L541.7 400.47L542.2 401.3L542.7 401.33L543.2 401.23L543.7 401.26L544.2 400.92L544.7 400.01L545.2 400.61L545.7 400.89L546.2 401.02L546.7 401.09L547.2 401.21L547.7 401.76L548.2 401.5L548.7 401.17L549.2 401.74L549.7 401.81L550.2 399.16L550.7 399.39L551.2 399.48L551.7 399.55L552.2 398.81L552.7 399.4L553.2 399.8L553.7 401.03L554.2 401.15L554.7 401.05L555.2 401.02L555.7 400.73L556.2 401.12L556.7 401.29L557.2 401.19L557.7 401.46L558.2 401.17L558.7 400.54L559.2 401.17L559.7 400.6L560.2 401.4L560.7 401.34L561.2 400.84L561.7 401.26L562.2 401.21L562.7 401.21L563.2 401.75L563.7 401.89L564.2 401.88L564.7 401.63L565.2 400.64L565.7 400.58L566.2 400.5L566.7 400.9L567.2 400.32L567.7 401.11L568.2 400.67L568.7 400.66L569.2 401.33L569.7 400.79L570.2 401.09L570.7 401.35L571.2 401.55L571.7 401.85L572.2 401.44L572.7 401.19L573.2 401.28L573.7 401.31L574.2 400.65L574.7 401.26L575.2 401.18L575.7 401.39L576.2 401.1L576.7 400.59L577.2 400.45L577.7 400.65L578.2 401.6L578.7 401.88L579.2 395.35L579.7 396.04L580.2 395.89L580.7 397.55L581.2 397.14L581.7 396.51L582.2 397.95L582.7 396.51L583.2 396.29L583.7 397.07L584.2 397.46L584.7 398.06L585.2 398.86L585.7 398.37L586.2 398.84L586.7 398.44L587.2 399.18L587.7 398.8L588.2 397.77L588.7 399.28L589.2 398.69L589.7 398.62L590.2 397.66L590.7 398.93L591.2 397.45L591.7 398.52L592.2 399.2L592.7 399.68L593.2 399.14L593.7 399.83L594.2 398.67L594.7 400L595.2 399.29L595.7 399.7L596.2 397.94L596.7 399.27L597.2 398.99L597.7 398.6L598.2 399.3L598.7 399.72L599.2 399.68L599.7 400.76L600.2 400.29L600.7 400.85L601.2 400.85L601.7 400.26L602.2 401.16L602.7 401.08L603.2 399.76L603.7 399.87L604.2 400.09L604.7 399.65L605.2 399.68L605.7 400.12L606.2 400.33L606.7 400.06L607.2 400.39L607.7 400.93L608.2 401.16L608.7 400.91L609.2 400.82L609.7 400.72L610.2 401.51L610.7 401.63L611.2 400.82L611.7 400.42L612.2 400.03L612.7 401.08L613.2 401.12L613.7 401.12L614.2 401.73L614.7 401.22L615.2 401.43L615.7 401.35L616.2 401.1L616.7 401.43L617.2 402.1L617.7 401.99L618.2 402.21L618.7 401.71L619.2 401.93L619.7 401.38L620.2 401.62L620.7 401.81L621.2 401.64L621.7 401.84L622.2 401.74L622.7 401.64L623.2 401.42L623.7 401.7L624.2 401.82L624.7 402.24L625.2 397.33L625.7 397.83L626.2 398.84L626.7 398.55L627.2 397.92L627.7 397.9L628.2 398.7L628.7 399.01L629.2 398.14L629.7 398.18L630.2 399.21L630.7 399.43L631.2 399.15L631.7 400.37L632.2 400.77L632.7 399.59L633.2 399.9L633.7 399.56L634.2 399.57L634.7 399.07L635.2 399.57L635.7 399.38L636.2 399.69L636.7 400.06L637.2 399.3L637.7 399.68L638.2 400.46L638.7 401.27L639.2 401.32L639.7 400.87L640.2 400.98L640.7 400.28L641.2 400.27L641.7 400.39L642.2 400.91L642.7 400.39L643.2 400.44L643.7 400.01L644.2 399.55L644.7 399.96L645.2 400.4L645.7 400.79L646.2 400.67L646.7 400.89L647.2 400.55L647.7 400.97L648.2 400.29L648.7 400.93L649.2 400.42L649.7 400.53L650.2 400.83L650.7 399.7L651.2 399.88L651.7 400.26L652.2 400.24L652.7 401.15L653.2 401.32L653.7 401.51L654.2 401.11L654.7 400.57L655.2 401.35L655.7 401.08L656.2 401.87L656.7 401.06L657.2 401.15L657.7 400.96L658.2 400.96L658.7 400.84L659.2 401.36L659.7 401.51L660.2 401.25L660.7 401.45L661.2 401.73L661.7 401.78L662.2 401.37L662.7 401.67L663.2 402.06L663.7 402.04L664.2 401.82L664.7 401.56L665.2 401.44L665.7 401.39L666.2 401.33L666.7 401.52L667.2 401.91L667.7 401.95L668.2 401.55L668.7 401.74L669.2 401.77L669.7 402.03L670.2 402.17L670.7 402.72L671.2 402.46L671.7 401.39L672.2 402.33L672.7 401.95L673.2 401.94L673.7 401.86L674.2 402.19L674.7 402.51L675.2 402.39L675.7 401.95L676.2 401.72L676.7 402.3L677.2 402.43L677.7 402.34L678.2 402.1L678.7 401.9L679.2 401.46L679.7 401.61L680.2 401.7L680.7 401.12L681.2 401.44L681.7 395.79L682.2 397.86L682.7 397.08L683.2 397.51L683.7 397.16L684.2 398.89L684.7 398.87L685.2 398.7L685.7 398.08L686.2 397.78L686.7 395.41L687.2 398.79L687.7 398.9L688.2 398.68L688.7 397.35L689.2 397.02L689.7 398L690.2 397.84L690.7 399.07L691.2 399.71L691.7 399.7L692.2 399.84L692.7 399.88L693.2 399.21L693.7 398.73L694.2 399.84L694.7 399.01L695.2 399.87L695.7 399.22L696.2 399.28L696.7 397.68L697.2 399.85L697.7 398.97L698.2 399.63L698.7 400.24L699.2 400.26L699.7 400.29L700.2 400.69L700.7 399.71L701.2 400.48L701.7 399.6L702.2 399.26L702.7 400.67L703.2 400.22L703.7 400.2L704.2 399.26L704.7 399.57L705.2 399.95L705.7 400.84L706.2 401.4L706.7 400.65L707.2 401.01L707.7 400.85L708.2 400.22L708.7 400.64L709.2 400.9L709.7 400.34L710.2 400.62L710.7 400.3L711.2 400.75L711.7 399.77L712.2 400.88L712.7 400.34L713.2 401L713.7 401.53L714.2 400.83L714.7 400.72L715.2 400.89L715.7 400.88L716.2 400.6L716.7 400.86L717.2 401.42L717.7 400.65L718.2 399.98L718.7 400.25L719.2 400.05L719.7 400.94L720.2 401.31L720.7 401.26L721.2 401.67L721.7 401.06L722.2 401.72L722.7 401.74L723.2 401.87L723.7 401.36L724.2 401.9L724.7 402.11L725.2 401.97L725.7 401.77L726.2 401.45L726.7 401.77L727.2 401.96L727.7 401.41L728.2 397.11L728.7 397.74L729.2 397.99L729.7 397.75L730.2 399.55L730.7 399.42L731.2 399.17L731.7 400.11L732.2 399.59L732.7 398.15L733.2 398.38L733.7 399.18L734.2 399.78L734.7 399.84L735.2 399.05L735.7 399.9L736.2 398.66L736.7 399.83L737.2 399.96L737.7 400.42L738.2 400.6L738.7 400.79L739.2 399.8L739.7 400.12L740.2 399.3L740.7 400.48L741.2 399.7L741.7 399.94L742.2 400.45L742.7 399.73L743.2 399.37L743.7 399.56L744.2 399.81L744.7 400.22L745.2 401.13L745.7 400.63L746.2 400.84L746.7 400.38L747.2 400.27L747.7 399.97L748.2 399.23L748.7 400.29L749.2 400.33L749.7 399.72L750.2 399.26L750.7 399.04L751.2 399.83L751.7 399.92L752.2 400.68L752.7 401.09L753.2 401.21L753.7 400.79L754.2 400.1L754.7 400.85L755.2 400.04L755.7 400.87L756.2 401.12L756.7 400.99L757.2 400.4L757.7 399.72L758.2 400.41L758.7 400.2L759.2 401.38L759.7 401.54L760.2 401.48L760.7 400.85L761.2 400.83L761.7 400.96L762.2 401.17L762.7 400.58L763.2 400.92L763.7 400.43L764.2 400.49L764.7 400.04L765.2 400.13L765.7 400.26L766.2 399.81L766.7 401.37L767.2 401.42L767.7 401.69L768.2 401.05L768.7 401.02L769.2 401.2L769.7 400.45L770.2 401.57L770.7 401.69L771.2 400.97L771.7 400.8L772.2 401.7L772.7 401.55L773.2 397.33L773.7 398.83L774.2 398.06L774.7 399.25L775.2 398.78L775.7 399.14L776.2 398.92L776.7 400.26L777.2 399.23L777.7 399.6L778.2 399.37L778.7 399.67L779.2 399.16L779.7 398.4L780.2 399.84L780.7 400.47L781.2 399.85L781.7 400.65L782.2 398.84L782.7 400L783.2 400.03L783.7 400.57L784.2 401.14L784.7 401.06L785.2 400.41L785.7 400.75L786.2 399.62L786.7 400.7L787.2 400.72L787.7 400.87L788.2 399.75L788.7 400.02L789.2 400.61L789.7 400.21L790.2 401.01L790.7 401.06L791.2 401.31L791.7 401.32L792.2 401.4L792.7 400.58L793.2 400.4L793.7 400.92L794.2 401.18L794.7 401.33L795.2 401.17L795.7 400.57L796.2 401.28L796.7 401.18L797.2 400.8L797.7 401.5L798.2 401.85L798.7 401.59L799.2 401.19L799.7 400.89L800.2 400.91L800.7 400.31L801.2 401.25L801.7 395.57L802.2 397.73L802.7 395.91L803.2 395.76L803.7 396.41L804.2 396.79L804.7 396.58L805.2 397.57L805.7 399.5L806.2 398.02L806.7 398.27L807.2 398.48L807.7 396.96L808.2 398.35L808.7 398.6L809.2 398.84L809.7 398.6L810.2 395.8L810.7 397.52L811.2 398.52L811.7 397.51L812.2 398.79L812.7 399.74L813.2 399.42L813.7 400.07L814.2 398.91L814.7 398.46L815.2 399.45L815.7 399.4L816.2 399.74L816.7 399.5L817.2 398.79L817.7 398.29L818.2 398.53L818.7 398.67L819.2 399.01L819.7 399.66L820.2 399.65L820.7 400.33L821.2 399.71L821.7 399.56L822.2 399.78L822.7 400.01L823.2 400.84L823.7 400.01L824.2 400.19L824.7 400.57L825.2 398.25L825.7 398.83L826.2 399.31L826.7 400.07L827.2 400.12L827.7 400.23L828.2 400.16L828.7 399.83L829.2 400.41L829.7 400.64L830.2 400.85L830.7 400.67L831.2 400.3L831.7 400.52L832.2 399.32L832.7 399.8L833.2 400.72L833.7 400L834.2 400.4L834.7 400.92L835.2 401.14L835.7 400.7L836.2 400.9L836.7 401.09L837.2 401.03L837.7 401.21L838.2 401.8L838.7 400.98L839.2 400.55L839.7 400.83L840.2 399.24L840.7 400.51L841.2 400.57L841.7 400.37L842.2 400.49L842.7 400.63L843.2 401.31L843.7 400.88L844.2 401.34L844.7 401.37L845.2 401.73L845.7 401.05L846.2 401.25L846.7 400.35L847.2 400.73L847.7 401.34L848.2 401.26L848.7 401.58L849.2 401.12L849.7 400.97L850.2 397.11L850.7 398.04L851.2 398.79L851.7 399.37L852.2 399.3L852.7 399.32L853.2 398.33L853.7 398.6L854.2 398.04L854.7 399.17L855.2 398.63L855.7 399.03L856.2 400.01L856.7 398.76L857.2 399.92L857.7 399.96L858.2 400.73L858.7 400.71L859.2 400.38L859.7 400.47L860.2 399.68L860.7 399.77L861.2 399.93L861.7 399.38L862.2 400.18L862.7 400.11L863.2 400.26L863.7 399.57L864.2 399.86L864.7 400.32L865.2 400.44L865.7 400.27L866.2 400.34L866.7 399.88L867.2 400.15L867.7 399.76L868.2 400.43L868.7 400.29L869.2 400.6L869.7 399.98L870.2 400.36L870.7 400.69L871.2 400.29L871.7 399.85L872.2 401.02L872.7 400.73L873.2 401.73L873.7 401.71L874.2 401.61L874.7 401.02L875.2 401.33L875.7 401.55L876.2 401.3L876.7 401.51L877.2 401.62L877.7 400.5L878.2 396.89L878.7 397.22L879.2 397.57L879.7 397.8L880.2 398.64L880.7 397.73L881.2 398.93L881.7 398.02L882.2 398.3L882.7 398.78L883.2 398.68L883.7 398.83L884.2 399.66L884.7 399.15L885.2 398.11L885.7 398.42L886.2 398.65L886.7 399.83L887.2 400.23L887.7 399.81L888.2 399.66L888.7 399.38L889.2 399.41L889.7 399.78L890.2 399.91L890.7 400.39L891.2 400.14L891.7 400.11L892.2 400.06L892.7 399.73L893.2 400.33L893.7 400.93L894.2 400.67L894.7 400.76L895.2 401.06L895.7 401.27L896.2 399.27L896.7 399.05L897.2 400.45L897.7 400.63L898.2 400.79L898.7 400.63L899.2 400.54L899.7 400.42L900.2 400.03L900.7 400.5L901.2 401.02L901.7 400.47L902.2 401.11L902.7 401.07L903.2 400.59L903.7 401.07L904.2 401.5L904.7 401.96L905.2 399.81L905.7 399.31L906.2 399.84L906.7 398.26L907.2 399.59L907.7 399.12L908.2 399.38L908.7 400.5L909.2 398.58L909.7 399.93L910.2 399.88L910.7 399.86L911.2 400.87L911.7 400.51L912.2 401.2L912.7 401.05L913.2 400.68L913.7 400.02L914.2 400.49L914.7 400.24L915.2 400.98L915.7 400.1L916.2 401.1L916.7 400.86L917.2 400.21L917.7 400.23L918.2 400.2L918.7 401.24L919.2 401.43L919.7 400.87L920.2 400.84L920.7 400.68L921.2 400.91L921.7 400.46L922.2 400.9L922.7 400.76L923.2 400.83L923.7 400.29L923.7 407.94L923.2 407.49L922.7 407.88L922.2 407.72L921.7 407.1L921.2 407.75L920.7 407.62L920.2 407.74L919.7 407.3L919.2 407.1L918.7 407.31L918.2 407.61L917.7 408.49L917.2 407.76L916.7 409.02L916.2 407.62L915.7 407.28L915.2 407.94L914.7 407.66L914.2 408.19L913.7 408.26L913.2 408.46L912.7 407.37L912.2 407.63L911.7 407.08L911.2 407.55L910.7 407.58L910.2 407.98L909.7 407.75L909.2 407.87L908.7 408.25L908.2 408.46L907.7 408.9L907.2 410.12L906.7 408.54L906.2 408.32L905.7 408.82L905.2 407.86L904.7 406.91L904.2 407.12L903.7 408.73L903.2 407.39L902.7 406.89L902.2 406.89L901.7 407.76L901.2 407.16L900.7 407.67L900.2 408.82L899.7 408.41L899.2 408.19L898.7 407.54L898.2 407.27L897.7 407.62L897.2 408.62L896.7 408.82L896.2 407.98L895.7 407.83L895.2 407.65L894.7 407.31L894.2 407.84L893.7 408.07L893.2 408.84L892.7 408.83L892.2 408.92L891.7 408.12L891.2 408.15L890.7 407.36L890.2 407.29L889.7 407.54L889.2 408.96L888.7 408.66L888.2 409.26L887.7 408.54L887.2 408.99L886.7 409.55L886.2 410.2L885.7 409.96L885.2 410.29L884.7 408.98L884.2 409.16L883.7 409.25L883.2 411.23L882.7 409.36L882.2 410.57L881.7 409.7L881.2 409.03L880.7 409.11L880.2 409.93L879.7 409.44L879.2 410.97L878.7 411.85L878.2 413.72L877.7 407.42L877.2 407.58L876.7 407.97L876.2 406.82L875.7 406.97L875.2 407.45L874.7 407.5L874.2 407.52L873.7 406.88L873.2 407.31L872.7 407.31L872.2 407.32L871.7 407.68L871.2 409.19L870.7 407.74L870.2 408.21L869.7 407.3L869.2 407.57L868.7 407.78L868.2 408.38L867.7 408.31L867.2 407.33L866.7 407.39L866.2 407.43L865.7 407.88L865.2 408.33L864.7 408.3L864.2 408.43L863.7 408.03L863.2 408.74L862.7 408.29L862.2 408.42L861.7 407.93L861.2 408.38L860.7 408.89L860.2 408.05L859.7 408.29L859.2 407.17L858.7 408.22L858.2 408.24L857.7 408.91L857.2 408.8L856.7 409.63L856.2 408.62L855.7 410.26L855.2 408.41L854.7 408.5L854.2 409.56L853.7 409.71L853.2 410.12L852.7 408.96L852.2 409.34L851.7 408.68L851.2 408.83L850.7 410.05L850.2 413.14L849.7 407.12L849.2 407.06L848.7 406.59L848.2 407.35L847.7 407.52L847.2 406.91L846.7 408.61L846.2 408.05L845.7 406.71L845.2 406.6L844.7 406.76L844.2 406.83L843.7 406.96L843.2 407.49L842.7 407.48L842.2 408.15L841.7 407.64L841.2 408.21L840.7 408.29L840.2 408.07L839.7 407.65L839.2 407.41L838.7 407.04L838.2 406.89L837.7 406.88L837.2 406.82L836.7 407.4L836.2 407.61L835.7 407.05L835.2 407.47L834.7 406.98L834.2 407.69L833.7 407.98L833.2 407.59L832.7 410.99L832.2 409.86L831.7 410.96L831.2 408.03L830.7 407.59L830.2 408.17L829.7 408.25L829.2 408.9L828.7 408.3L828.2 408.13L827.7 407.81L827.2 410.43L826.7 409.15L826.2 409.14L825.7 410.28L825.2 409.75L824.7 409.09L824.2 408.77L823.7 407.45L823.2 407.87L822.7 407.96L822.2 408.41L821.7 408.59L821.2 408.49L820.7 408.94L820.2 408.07L819.7 408.67L819.2 408.57L818.7 410.38L818.2 410.22L817.7 409.78L817.2 408.89L816.7 408.65L816.2 409.55L815.7 409.37L815.2 409.38L814.7 409.67L814.2 409.36L813.7 408.73L813.2 409.26L812.7 408.64L812.2 410.13L811.7 410.69L811.2 411.06L810.7 410.02L810.2 409.92L809.7 410.91L809.2 410.64L808.7 410.34L808.2 410.71L807.7 412.14L807.2 411.48L806.7 409.77L806.2 409.73L805.7 409.03L805.2 410.3L804.7 411.1L804.2 410.78L803.7 410.84L803.2 412.06L802.7 411.5L802.2 411.34L801.7 415.46L801.2 407.72L800.7 408.1L800.2 407.89L799.7 407.14L799.2 406.6L798.7 407.09L798.2 407.19L797.7 406.94L797.2 407.58L796.7 407.7L796.2 407.8L795.7 408.13L795.2 407.76L794.7 407.83L794.2 407.79L793.7 407.7L793.2 408.22L792.7 406.88L792.2 407.46L791.7 406.53L791.2 407.17L790.7 406.93L790.2 408.89L789.7 407.46L789.2 408.76L788.7 408.52L788.2 407.5L787.7 408.1L787.2 408.29L786.7 407.41L786.2 407.86L785.7 407.37L785.2 408.21L784.7 408.2L784.2 407.82L783.7 407.55L783.2 408.29L782.7 408.88L782.2 407.64L781.7 408.76L781.2 409.86L780.7 407.82L780.2 409.35L779.7 410.14L779.2 409.69L778.7 409.64L778.2 408.56L777.7 408.7L777.2 408.84L776.7 408.11L776.2 409.26L775.7 409.04L775.2 409.07L774.7 410.09L774.2 409.4L773.7 410.18L773.2 413.14L772.7 406.64L772.2 406.88L771.7 407.03L771.2 407.01L770.7 406.3L770.2 406.77L769.7 407.19L769.2 407.07L768.7 406.68L768.2 407.01L767.7 407.42L767.2 407.15L766.7 406.78L766.2 407.38L765.7 407.68L765.2 407.45L764.7 408.28L764.2 408.34L763.7 407L763.2 406.86L762.7 407.68L762.2 407.13L761.7 407.69L761.2 407.21L760.7 407.23L760.2 406.65L759.7 406.75L759.2 407.45L758.7 408.66L758.2 408.13L757.7 408.54L757.2 408.12L756.7 407.56L756.2 407.53L755.7 407.15L755.2 409.29L754.7 408.22L754.2 408.44L753.7 409.83L753.2 407.75L752.7 407.84L752.2 409.55L751.7 407.39L751.2 408.56L750.7 409.07L750.2 408.71L749.7 408.32L749.2 409.67L748.7 407.41L748.2 407.92L747.7 408.18L747.2 407.63L746.7 408.1L746.2 407.32L745.7 406.9L745.2 407.3L744.7 407.7L744.2 408.33L743.7 407.81L743.2 407.9L742.7 408.78L742.2 408L741.7 408.36L741.2 407.66L740.7 408.88L740.2 408.38L739.7 408.09L739.2 410.15L738.7 407.11L738.2 408.44L737.7 408.19L737.2 408.38L736.7 409.1L736.2 409L735.7 408.43L735.2 409.41L734.7 409.53L734.2 410.19L733.7 409.18L733.2 409.52L732.7 409.71L732.2 409.01L731.7 409.02L731.2 408.49L730.7 408.93L730.2 408.9L729.7 410.71L729.2 410.75L728.7 409.55L728.2 413.43L727.7 406.6L727.2 406.31L726.7 407.14L726.2 407.39L725.7 406.86L725.2 406.69L724.7 406.14L724.2 406.54L723.7 406.19L723.2 406.53L722.7 407L722.2 407.03L721.7 406.71L721.2 406.68L720.7 407.22L720.2 406.99L719.7 407.4L719.2 408.42L718.7 408.1L718.2 407.94L717.7 407.36L717.2 406.93L716.7 407.51L716.2 407.75L715.7 407.77L715.2 407.89L714.7 408.87L714.2 407.2L713.7 407.18L713.2 407.18L712.7 407.89L712.2 407.29L711.7 407.81L711.2 407.83L710.7 407.89L710.2 407.3L709.7 407.62L709.2 407.6L708.7 407.09L708.2 407.04L707.7 407.36L707.2 407.62L706.7 407.5L706.2 406.94L705.7 407.86L705.2 409.75L704.7 409.22L704.2 408.62L703.7 407.78L703.2 407.56L702.7 407.35L702.2 407.56L701.7 408.56L701.2 409.31L700.7 408.41L700.2 407.41L699.7 408.28L699.2 407.74L698.7 407.92L698.2 409.06L697.7 408.4L697.2 408.95L696.7 410.64L696.2 408.27L695.7 409.35L695.2 408.86L694.7 408.19L694.2 408.85L693.7 409.41L693.2 409.08L692.7 408.63L692.2 408.41L691.7 408.97L691.2 408.58L690.7 409.83L690.2 409.02L689.7 409.83L689.2 408.91L688.7 409.19L688.2 409.35L687.7 410.24L687.2 409.82L686.7 410.46L686.2 409.65L685.7 410.67L685.2 409.6L684.7 410.14L684.2 413.71L683.7 410.41L683.2 411.54L682.7 410.74L682.2 410.31L681.7 415.17L681.2 406.66L680.7 407.09L680.2 406.69L679.7 406.71L679.2 406.41L678.7 406.27L678.2 406.2L677.7 405.91L677.2 405.94L676.7 406.53L676.2 406.55L675.7 406.02L675.2 406.37L674.7 405.9L674.2 405.99L673.7 406.32L673.2 406.36L672.7 406.64L672.2 406.12L671.7 405.73L671.2 405.73L670.7 405.66L670.2 406.22L669.7 406.1L669.2 406.55L668.7 406.46L668.2 405.99L667.7 406.37L667.2 406.37L666.7 406.84L666.2 406.79L665.7 406.74L665.2 406.61L664.7 406.74L664.2 406.6L663.7 406.33L663.2 407.09L662.7 407.19L662.2 406.98L661.7 407.1L661.2 406.68L660.7 406.45L660.2 406.89L659.7 406.88L659.2 407.34L658.7 407.52L658.2 407.18L657.7 407L657.2 407.23L656.7 406.72L656.2 406.38L655.7 407.32L655.2 407.24L654.7 406.98L654.2 407.21L653.7 407.17L653.2 407.44L652.7 406.86L652.2 407.85L651.7 408.01L651.2 408.78L650.7 407.55L650.2 408.01L649.7 407.86L649.2 407.94L648.7 408.22L648.2 407.53L647.7 407.8L647.2 408.31L646.7 407.67L646.2 407.92L645.7 407.83L645.2 408.6L644.7 408.38L644.2 408.46L643.7 408.39L643.2 408.58L642.7 407.8L642.2 407.59L641.7 408.06L641.2 407.55L640.7 407.42L640.2 408.11L639.7 407.71L639.2 407.28L638.7 407.22L638.2 408.46L637.7 408.3L637.2 408.42L636.7 408.83L636.2 408.12L635.7 408.04L635.2 408.48L634.7 408.04L634.2 408.73L633.7 409.02L633.2 408.51L632.7 408.04L632.2 408.61L631.7 407.84L631.2 408.74L630.7 409.88L630.2 409.92L629.7 409.84L629.2 409.17L628.7 411.26L628.2 410.32L627.7 410.3L627.2 409.4L626.7 410.79L626.2 411.21L625.7 410.02L625.2 413.14L624.7 407.48L624.2 406.06L623.7 406.71L623.2 406.89L622.7 406.53L622.2 406.56L621.7 406.41L621.2 406.67L620.7 406.2L620.2 406.83L619.7 406.79L619.2 406.78L618.7 406.95L618.2 406.52L617.7 406.02L617.2 406.1L616.7 406.31L616.2 406.62L615.7 407.07L615.2 406.9L614.7 406.86L614.2 407.89L613.7 407.35L613.2 406.94L612.7 407.31L612.2 407.16L611.7 407.5L611.2 407.71L610.7 406.81L610.2 407.22L609.7 406.74L609.2 407.52L608.7 407.24L608.2 407.23L607.7 407.08L607.2 407.79L606.7 407.38L606.2 408.77L605.7 409.18L605.2 408.12L604.7 411.21L604.2 408.08L603.7 408.48L603.2 408.72L602.7 407.85L602.2 407.91L601.7 408.02L601.2 407.49L600.7 407.76L600.2 407.51L599.7 407.48L599.2 408.35L598.7 409.09L598.2 410.96L597.7 410.09L597.2 411.58L596.7 408.88L596.2 411.11L595.7 411.34L595.2 409.05L594.7 409.03L594.2 409.68L593.7 409.04L593.2 408.63L592.7 408.01L592.2 408.61L591.7 409.15L591.2 410.8L590.7 410.43L590.2 409.12L589.7 408.88L589.2 408.61L588.7 410.3L588.2 409.8L587.7 409.91L587.2 410.8L586.7 410.4L586.2 409.39L585.7 408.74L585.2 409.44L584.7 410.13L584.2 410.23L583.7 412.68L583.2 411.26L582.7 411.44L582.2 411.1L581.7 410.2L581.2 410.68L580.7 412.42L580.2 410.79L579.7 411.27L579.2 415.75L578.7 407.08L578.2 407.13L577.7 407.03L577.2 407.35L576.7 407.65L576.2 407.35L575.7 407.57L575.2 407.33L574.7 406.99L574.2 407.6L573.7 407.19L573.2 407.69L572.7 407.02L572.2 406.31L571.7 406.45L571.2 406.5L570.7 407.25L570.2 406.64L569.7 406.86L569.2 407.58L568.7 407.52L568.2 407.13L567.7 407.62L567.2 407.59L566.7 407.41L566.2 408.04L565.7 407.63L565.2 408.12L564.7 406.37L564.2 406.23L563.7 406.3L563.2 406.96L562.7 408.3L562.2 407.15L561.7 406.94L561.2 407.14L560.7 407.12L560.2 407.07L559.7 409.49L559.2 407.19L558.7 407.77L558.2 406.71L557.7 407.04L557.2 406.51L556.7 406.93L556.2 406.8L555.7 407.33L555.2 407.79L554.7 408.04L554.2 407.5L553.7 408.29L553.2 408.61L552.7 409.12L552.2 408.43L551.7 409L551.2 409.25L550.7 409.42L550.2 408.34L549.7 406.46L549.2 406.48L548.7 408.45L548.2 407.13L547.7 407.26L547.2 407.15L546.7 406.66L546.2 406.87L545.7 408L545.2 407.22L544.7 407.68L544.2 408.04L543.7 407.4L543.2 407.52L542.7 407.37L542.2 407.1L541.7 407.56L541.2 407.51L540.7 407.23L540.2 407.3L539.7 406.88L539.2 407.44L538.7 407.78L538.2 408.51L537.7 407.7L537.2 407.82L536.7 407.32L536.2 407.82L535.7 407.46L535.2 407.79L534.7 407.86L534.2 408.16L533.7 407.78L533.2 407.73L532.7 408.01L532.2 408.22L531.7 408.73L531.2 408.69L530.7 408.09L530.2 408.38L529.7 407.65L529.2 407.56L528.7 407.84L528.2 407.36L527.7 407.47L527.2 407.87L526.7 407.37L526.2 407.69L525.7 407.33L525.2 406.8L524.7 408.36L524.2 407.2L523.7 407.45L523.2 407.59L522.7 407.79L522.2 407.25L521.7 406.78L521.2 407.25L520.7 407.81L520.2 407.82L519.7 406.87L519.2 408.36L518.7 406.5L518.2 407.52L517.7 407.59L517.2 407.63L516.7 407.71L516.2 408.49L515.7 407.53L515.2 407.26L514.7 407.75L514.2 407.46L513.7 407.64L513.2 407.76L512.7 408.3L512.2 408.26L511.7 407.15L511.2 406.68L510.7 406.45L510.2 406.62L509.7 409.38L509.2 407.39L508.7 407.9L508.2 406.98L507.7 407.51L507.2 407.2L506.7 407.78L506.2 407.33L505.7 407.59L505.2 407.73L504.7 406.96L504.2 406.41L503.7 406.54L503.2 407.13L502.7 407.5L502.2 408.04L501.7 407.96L501.2 407.44L500.7 407.8L500.2 407.53L499.7 409.35L499.2 408.07L498.7 408.74L498.2 408.38L497.7 408.07L497.2 408.23L496.7 406.57L496.2 406.54L495.7 406.51L495.2 406.77L494.7 406.74L494.2 406.32L493.7 406.78L493.2 406.44L492.7 407.03L492.2 407.3L491.7 407.29L491.2 407.01L490.7 407.19L490.2 406.55L489.7 406.7L489.2 406.52L488.7 406.72L488.2 406.66L487.7 406.7L487.2 406.75L486.7 406.43L486.2 406.43L485.7 407.51L485.2 406.94L484.7 407.57L484.2 407.49L483.7 407.31L483.2 407.2L482.7 406.91L482.2 407.26L481.7 407.2L481.2 407.55L480.7 408.18L480.2 407.73L479.7 406.99L479.2 409.1L478.7 408.45L478.2 408.03L477.7 409.58L477.2 408.58L476.7 408.32L476.2 407.88L475.7 407.55L475.2 408.08L474.7 408.68L474.2 409.07L473.7 408.6L473.2 409.63L472.7 406.88L472.2 407.01L471.7 406.88L471.2 407.58L470.7 406.95L470.2 407.57L469.7 407.79L469.2 406.91L468.7 407.12L468.2 407.1L467.7 407.37L467.2 407.82L466.7 406.84L466.2 407.22L465.7 406.73L465.2 406.62L464.7 406.98L464.2 407.47L463.7 407.49L463.2 408.22L462.7 407.68L462.2 407.64L461.7 408.28L461.2 408.21L460.7 407.42L460.2 408.3L459.7 407.69L459.2 407.53L458.7 407.23L458.2 407.32L457.7 407.94L457.2 408.07L456.7 407.89L456.2 408.59L455.7 409.29L455.2 409.07L454.7 407.12L454.2 406.58L453.7 406.92L453.2 406.81L452.7 406.69L452.2 407.08L451.7 406.8L451.2 406.55L450.7 406.45L450.2 406.53L449.7 406.54L449.2 406.53L448.7 406.81L448.2 406.63L447.7 406.87L447.2 407.05L446.7 406.98L446.2 407.09L445.7 407.25L445.2 408.04L444.7 407.43L444.2 406.79L443.7 407.26L443.2 406.95L442.7 407.49L442.2 407.22L441.7 408.13L441.2 407.95L440.7 407.68L440.2 407.82L439.7 406.74L439.2 406.9L438.7 407.52L438.2 406.68L437.7 407.26L437.2 406.6L436.7 406.17L436.2 406.54L435.7 406.8L435.2 406.45L434.7 406.99L434.2 406.62L433.7 406.68L433.2 406.67L432.7 407.57L432.2 407.15L431.7 409.51L431.2 407.8L430.7 408.1L430.2 407.34L429.7 407.36L429.2 406.87L428.7 407.27L428.2 407.71L427.7 407.59L427.2 408.22L426.7 407.7L426.2 407.63L425.7 407.38L425.2 408.65L424.7 409.94L424.2 408.96L423.7 409.57L423.2 409.21L422.7 408.74L422.2 408.15L421.7 407.91L421.2 408.78L420.7 407.99L420.2 408.42L419.7 407.76L419.2 407.96L418.7 407.16L418.2 407.46L417.7 408.7L417.2 409.34L416.7 409.05L416.2 408.89L415.7 408.55L415.2 408.56L414.7 407.96L414.2 408.76L413.7 408.05L413.2 407.94L412.7 408.4L412.2 409.21L411.7 408.17L411.2 408.58L410.7 408.84L410.2 410.3L409.7 409.37L409.2 410.39L408.7 408.61L408.2 408.52L407.7 408.89L407.2 408.71L406.7 409.61L406.2 410.19L405.7 409.81L405.2 409.43L404.7 408.18L404.2 409.04L403.7 410.07L403.2 410.03L402.7 410.78L402.2 409.52L401.7 409.24L401.2 411L400.7 410.51L400.2 413.28L399.7 407.19L399.2 407.19L398.7 406.52L398.2 406.47L397.7 405.9L397.2 406.01L396.7 406.5L396.2 406.58L395.7 407.39L395.2 406.57L394.7 407.17L394.2 406.42L393.7 407.02L393.2 407.24L392.7 406.83L392.2 407.28L391.7 408.64L391.2 406.91L390.7 406.55L390.2 406.18L389.7 406.58L389.2 406.46L388.7 407.21L388.2 407.14L387.7 407.4L387.2 406.77L386.7 406.57L386.2 407.48L385.7 407.34L385.2 408.02L384.7 407.43L384.2 407.52L383.7 406.44L383.2 406.74L382.7 407.33L382.2 407.22L381.7 407.85L381.2 407.14L380.7 407.22L380.2 407.54L379.7 406.04L379.2 406.84L378.7 407.31L378.2 408.58L377.7 407.05L377.2 407.16L376.7 407.16L376.2 406.45L375.7 406.45L375.2 406.9L374.7 406.7L374.2 406.99L373.7 406.96L373.2 406.94L372.7 406.6L372.2 406.69L371.7 407.15L371.2 407.48L370.7 408.03L370.2 406.84L369.7 407.3L369.2 406.37L368.7 406.51L368.2 407.24L367.7 406.92L367.2 407.07L366.7 406.96L366.2 406.8L365.7 407.02L365.2 407.34L364.7 406.97L364.2 408.18L363.7 407.82L363.2 408.33L362.7 408.22L362.2 407.93L361.7 407.53L361.2 407.85L360.7 407.91L360.2 407.47L359.7 408.17L359.2 407.42L358.7 407.48L358.2 407.33L357.7 408.34L357.2 407.89L356.7 408.05L356.2 411.19L355.7 407.75L355.2 408.07L354.7 408.03L354.2 407.83L353.7 408.9L353.2 408.23L352.7 407.83L352.2 407.54L351.7 407.82L351.2 407.07L350.7 407.18L350.2 408.23L349.7 408.7L349.2 409.11L348.7 408.27L348.2 408.44L347.7 408.06L347.2 408.83L346.7 408.94L346.2 409.08L345.7 408.66L345.2 408.55L344.7 410.25L344.2 408.56L343.7 408.46L343.2 408.2L342.7 408.48L342.2 410.77L341.7 409.92L341.2 409.49L340.7 409.64L340.2 410.14L339.7 409.84L339.2 410.66L338.7 410.21L338.2 409.77L337.7 408.59L337.2 408.58L336.7 408.41L336.2 410.04L335.7 409.51L335.2 410.57L334.7 409.76L334.2 410.21L333.7 409.18L333.2 409.63L332.7 410.3L332.2 411.38L331.7 410.99L331.2 414.29L330.7 409.84L330.2 409.19L329.7 410.83L329.2 410.8L328.7 411.95L328.2 413.59L327.7 410.34L327.2 412.59L326.7 412.27L326.2 412.77L325.7 413.06L325.2 413.72Z" fill="#4da3fb"/>
<text x="330" y="386.85" font-size="7.5" fill="#57a6f2" textLength="45.8" lengthAdjust="spacingAndGlyphs" >Clean Combo</text>
<rect x="324.8" y="429.3" width="599.5" height="48.2" rx="3.1" ry="3.1" fill="#14477f"/>
<path d="M325.2 457.04L325.7 455.9L326.2 455.33L326.7 456.14L327.2 456.14L327.7 456.32L328.2 455.96L328.7 455.36L329.2 455.95L329.7 456.21L330.2 455.98L330.7 455.87L331.2 456.36L331.7 457.29L332.2 457.68L332.7 457.8L333.2 457.8L333.7 456.76L334.2 455.85L334.7 455.46L335.2 456.15L335.7 456.16L336.2 455.87L336.7 456.16L337.2 456.74L337.7 457.21L338.2 457.43L338.7 457.21L339.2 457.16L339.7 457.71L340.2 457.8L340.7 457.8L341.2 457.8L341.7 457.09L342.2 453.41L342.7 453.7L343.2 455.53L343.7 454.93L344.2 454.74L344.7 454.66L345.2 455.24L345.7 454.26L346.2 453.78L346.7 452.79L347.2 454.01L347.7 453.91L348.2 454.84L348.7 454.36L349.2 453.98L349.7 455.37L350.2 455.63L350.7 455.08L351.2 454.56L351.7 453.96L352.2 455.31L352.7 454.57L353.2 454.93L353.7 455.2L354.2 456.43L354.7 457.48L355.2 457.8L355.7 457.8L356.2 457.8L356.7 457.8L357.2 457.8L357.7 457.8L358.2 457.8L358.7 457.8L359.2 457.8L359.7 457.8L360.2 457.8L360.7 457.8L361.2 457.8L361.7 457.8L362.2 457.8L362.7 457.8L363.2 457.8L363.7 457.8L364.2 457.8L364.7 457.8L365.2 457.8L365.7 457.8L366.2 457.8L366.7 457.8L367.2 457.8L367.7 457.8L368.2 457.8L368.7 457.8L369.2 457.8L369.7 457.8L370.2 456.81L370.7 454.43L371.2 454.57L371.7 455.26L372.2 455.29L372.7 454.2L373.2 453.61L373.7 453.28L374.2 453.94L374.7 454.18L375.2 453.84L375.7 454.57L376.2 455.63L376.7 455.3L377.2 454.81L377.7 454.74L378.2 454.2L378.7 454.99L379.2 453.9L379.7 453.17L380.2 453.81L380.7 454.91L381.2 455.01L381.7 455.12L382.2 454.42L382.7 455.59L383.2 455.92L383.7 455.56L384.2 454.69L384.7 455.04L385.2 455.49L385.7 456.47L386.2 456.64L386.7 457.8L387.2 457.8L387.7 457.8L388.2 457.8L388.7 455.21L389.2 452.73L389.7 452.69L390.2 451.91L390.7 452.59L391.2 451.34L391.7 450.2L392.2 451.27L392.7 453.09L393.2 453.63L393.7 453.84L394.2 452.88L394.7 454.1L395.2 454.12L395.7 453.28L396.2 452.56L396.7 451.79L397.2 452.99L397.7 452.94L398.2 451.98L398.7 452.44L399.2 453.93L399.7 454.8L400.2 454.86L400.7 453.32L401.2 452.37L401.7 453.27L402.2 453.78L402.7 452.89L403.2 452.69L403.7 454.46L404.2 455.79L404.7 456.74L405.2 457.8L405.7 457.8L406.2 455.43L406.7 454.19L407.2 455L407.7 453.6L408.2 453.31L408.7 454.4L409.2 454.94L409.7 453.06L410.2 451.84L410.7 452.68L411.2 453.26L411.7 454.53L412.2 453.43L412.7 454.34L413.2 455.37L413.7 455.9L414.2 455.37L414.7 455.28L415.2 454.97L415.7 455.2L416.2 456.06L416.7 455.49L417.2 456.01L417.7 456.8L418.2 457.73L418.7 457.8L419.2 457.8L419.7 457.8L420.2 457.28L420.7 456.99L421.2 457.02L421.7 457.06L422.2 457.34L422.7 457.72L423.2 457.8L423.7 457.8L424.2 457.8L424.7 457.8L425.2 457.8L425.7 457.8L426.2 457.8L426.7 457.8L427.2 457.8L427.7 457.8L428.2 457.8L428.7 457.8L429.2 457.8L429.7 457.8L430.2 457.8L430.7 457.8L431.2 457.8L431.7 457.8L432.2 457.8L432.7 457.8L433.2 457.8L433.7 457.8L434.2 457.8L434.7 457.8L435.2 457.8L435.7 457.8L436.2 457.8L436.7 457.8L437.2 457.8L437.7 457.8L438.2 457.8L438.7 457.8L439.2 457.8L439.7 457.8L440.2 457.8L440.7 457.8L441.2 457.8L441.7 457.8L442.2 457.8L442.7 457.8L443.2 457.8L443.7 457.8L444.2 457.8L444.7 457.8L445.2 457.8L445.7 457.8L446.2 456.63L446.7 454.43L447.2 453.92L447.7 455.24L448.2 453.92L448.7 452.32L449.2 452.79L449.7 453.97L450.2 453.91L450.7 454.18L451.2 454.34L451.7 454.35L452.2 455.64L452.7 454.66L453.2 453.91L453.7 453.42L454.2 454.41L454.7 453.78L455.2 453.9L455.7 452.45L456.2 454.32L456.7 454.36L457.2 455.02L457.7 454.16L458.2 454.08L458.7 454.85L459.2 455.79L459.7 455.62L460.2 455.06L460.7 455.45L461.2 456.88L461.7 457.8L462.2 457.8L462.7 457.8L463.2 457.8L463.7 456.68L464.2 456.13L464.7 455.88L465.2 455.98L465.7 456.18L466.2 456.62L466.7 457.18L467.2 457.01L467.7 457L468.2 457.68L468.7 457.8L469.2 457.8L469.7 457.8L470.2 457.8L470.7 457.8L471.2 457.8L471.7 457.8L472.2 457.8L472.7 457.8L473.2 457.8L473.7 456.07L474.2 455.36L474.7 454.36L475.2 454.3L475.7 454.18L476.2 454.66L476.7 454.67L477.2 453.6L477.7 452.59L478.2 453.14L478.7 454.48L479.2 454.52L479.7 454.26L480.2 453.86L480.7 455.68L481.2 454.83L481.7 453.75L482.2 453.41L482.7 454.39L483.2 454.17L483.7 453.8L484.2 452.38L484.7 452.97L485.2 454.48L485.7 455.48L486.2 455.19L486.7 455.87L487.2 456.47L487.7 456.82L488.2 457.45L488.7 457.8L489.2 457.8L489.7 457.8L490.2 456.29L490.7 453.77L491.2 452.93L491.7 454.1L492.2 454.4L492.7 452.89L493.2 452.59L493.7 452.65L494.2 453.54L494.7 454.52L495.2 453.75L495.7 453.06L496.2 454.3L496.7 455.75L497.2 455.58L497.7 454.15L498.2 454.38L498.7 454.78L499.2 454.93L499.7 454.52L500.2 454.13L500.7 454.6L501.2 456.26L501.7 456.55L502.2 456.66L502.7 456.86L503.2 457.82L503.7 457.8L504.2 457.8L504.7 457.8L505.2 457.8L505.7 457.8L506.2 457.8L506.7 457.8L507.2 457.8L507.7 457.8L508.2 457.8L508.7 457.8L509.2 457.8L509.7 457.8L510.2 457.74L510.7 457.53L511.2 457.67L511.7 457.8L512.2 457.8L512.7 457.8L513.2 457.8L513.7 457.8L514.2 457.8L514.7 457.8L515.2 457.8L515.7 457.8L516.2 457.8L516.7 457.8L517.2 457.8L517.7 457.8L518.2 457.8L518.7 457.8L519.2 457.8L519.7 457.8L520.2 457.8L520.7 457.8L521.2 457.8L521.7 457.8L522.2 457.8L522.7 457.8L523.2 457.8L523.7 457.8L524.2 457.8L524.7 457.8L525.2 457.8L525.7 457.8L526.2 457.8L526.7 457.8L527.2 457.8L527.7 457.8L528.2 457.8L528.7 457.8L529.2 457.8L529.7 457.8L530.2 455.46L530.7 454.32L531.2 452.09L531.7 450.41L532.2 451.43L532.7 452.25L533.2 453.81L533.7 453.71L534.2 453.52L534.7 453.57L535.2 454.33L535.7 454.86L536.2 453.58L536.7 450.98L537.2 451.96L537.7 454.53L538.2 454.27L538.7 454.49L539.2 455.07L539.7 456.94L540.2 455.08L540.7 453.62L541.2 453.13L541.7 451.84L542.2 453.18L542.7 453.04L543.2 452.78L543.7 453.18L544.2 452.46L544.7 453.39L545.2 453.17L545.7 453.16L546.2 452.69L546.7 452.54L547.2 452.84L547.7 453.42L548.2 453.16L548.7 453.13L549.2 453.9L549.7 453.8L550.2 454.33L550.7 454.11L551.2 454.15L551.7 453.57L552.2 454.64L552.7 454.57L553.2 453.69L553.7 454.08L554.2 454.39L554.7 454.58L555.2 454.35L555.7 454.26L556.2 454.57L556.7 454.44L557.2 454.27L557.7 455.24L558.2 454.46L558.7 455.04L559.2 454.78L559.7 455.09L560.2 455.11L560.7 454.98L561.2 455.76L561.7 455.84L562.2 455.52L562.7 455.66L563.2 455.83L563.7 455.68L564.2 455.61L564.7 455.98L565.2 455.6L565.7 455.78L566.2 456.17L566.7 455.96L567.2 456.54L567.7 456.56L568.2 456.17L568.7 456.31L569.2 456.45L569.7 456.56L570.2 456.84L570.7 456.96L571.2 457.25L571.7 457.38L572.2 457.56L572.7 457.72L573.2 457.8L573.7 457.8L574.2 457.8L574.7 457.8L575.2 457.8L575.7 457.8L576.2 457.73L576.7 457.47L577.2 457.37L577.7 457.74L578.2 457.8L578.7 457.8L579.2 457.8L579.7 457.8L580.2 457.8L580.7 457.8L581.2 457.8L581.7 457.8L582.2 457.8L582.7 457.8L583.2 457.8L583.7 457.8L584.2 457.8L584.7 457.8L585.2 457.8L585.7 457.8L586.2 457.8L586.7 457.8L587.2 457.8L587.7 457.8L588.2 457.8L588.7 457.8L589.2 457.8L589.7 457.8L590.2 457.8L590.7 457.8L591.2 457.8L591.7 457.8L592.2 457.8L592.7 457.8L593.2 457.8L593.7 457.8L594.2 457.8L594.7 457.8L595.2 457.8L595.7 457.8L596.2 457.8L596.7 457.8L597.2 457.8L597.7 457.8L598.2 457.8L598.7 457.8L599.2 457.8L599.7 457.8L600.2 457.8L600.7 457.8L601.2 457.8L601.7 457.8L602.2 457.8L602.7 457.8L603.2 457.8L603.7 457.8L604.2 457.8L604.7 457.8L605.2 457.8L605.7 457.8L606.2 457.8L606.7 457.8L607.2 457.8L607.7 457.8L608.2 457.8L608.7 457.8L609.2 457.8L609.7 457.8L610.2 457.8L610.7 457.8L611.2 457.8L611.7 457.8L612.2 457.8L612.7 457.8L613.2 457.8L613.7 457.8L614.2 457.8L614.7 457.8L615.2 457.8L615.7 457.8L616.2 457.8L616.7 457.8L617.2 457.8L617.7 457.8L618.2 457.8L618.7 457.8L619.2 457.8L619.7 457.8L620.2 457.8L620.7 457.8L621.2 457.8L621.7 457.35L622.2 454.94L622.7 453.91L623.2 454.11L623.7 453.87L624.2 453.35L624.7 452.87L625.2 453.7L625.7 453.58L626.2 453.29L626.7 453.39L627.2 454.06L627.7 454.62L628.2 454.57L628.7 454.17L629.2 453.07L629.7 453.54L630.2 454.24L630.7 453.39L631.2 452.65L631.7 453.3L632.2 455.09L632.7 454.78L633.2 454.1L633.7 454.25L634.2 455.75L634.7 455.82L635.2 455.83L635.7 455.32L636.2 456.7L636.7 457.8L637.2 457.8L637.7 457.8L638.2 457.8L638.7 457.8L639.2 457.8L639.7 457.8L640.2 456.04L640.7 453.6L641.2 452.76L641.7 452.54L642.2 454.77L642.7 454.54L643.2 455.03L643.7 454.06L644.2 455.09L644.7 455.13L645.2 454.31L645.7 454.04L646.2 452.63L646.7 454.21L647.2 454.27L647.7 454.42L648.2 453.35L648.7 455.08L649.2 455.92L649.7 455.89L650.2 455.3L650.7 454.51L651.2 455.16L651.7 455.62L652.2 455.85L652.7 456.48L653.2 457.49L653.7 457.8L654.2 457.8L654.7 457.8L655.2 457.8L655.7 457.8L656.2 457.8L656.7 457.8L657.2 457.8L657.7 457.8L658.2 457.8L658.7 457.8L659.2 457.8L659.7 457.8L660.2 457.8L660.7 457.8L661.2 457.8L661.7 457.19L662.2 454.34L662.7 455.13L663.2 454.52L663.7 453.79L664.2 452.51L664.7 452.77L665.2 452.73L665.7 452.55L666.2 452.64L666.7 452.95L667.2 454.39L667.7 455.7L668.2 455.46L668.7 455.22L669.2 456.37L669.7 457.05L670.2 456.76L670.7 455.37L671.2 455.9L671.7 456.41L672.2 455.37L672.7 455.1L673.2 455.32L673.7 455.09L674.2 455.29L674.7 455.59L675.2 455.02L675.7 455.6L676.2 456.54L676.7 456.54L677.2 456.47L677.7 455.91L678.2 456.59L678.7 456.9L679.2 456.7L679.7 456.38L680.2 456.87L680.7 457.53L681.2 457.73L681.7 457.8L682.2 457.8L682.7 457.8L683.2 457.8L683.7 457.8L684.2 457.8L684.7 457.8L685.2 457.8L685.7 457.8L686.2 457.8L686.7 457.8L687.2 457.8L687.7 457.8L688.2 457.8L688.7 457.8L689.2 457.8L689.7 457.8L690.2 457.8L690.7 457.8L691.2 457.8L691.7 457.8L692.2 457.8L692.7 457.8L693.2 457.8L693.7 457.8L694.2 457.8L694.7 457.8L695.2 457.8L695.7 457.8L696.2 457.8L696.7 457.8L697.2 457.8L697.7 457.8L698.2 457.8L698.7 457.8L699.2 457.8L699.7 457.8L700.2 457.8L700.7 457.8L701.2 457.8L701.7 457.8L702.2 457.8L702.7 457.8L703.2 457.8L703.7 457.8L704.2 457.8L704.7 457.8L705.2 457.8L705.7 457.8L706.2 457.8L706.7 457.8L707.2 457.8L707.7 457.8L708.2 457.8L708.7 457.8L709.2 457.8L709.7 457.8L710.2 455.67L710.7 454.59L711.2 453.32L711.7 453.46L712.2 453.04L712.7 453.49L713.2 455.18L713.7 454.82L714.2 453.87L714.7 454.67L715.2 455.35L715.7 454.2L716.2 453.91L716.7 452.19L717.2 453.22L717.7 454.59L718.2 453.64L718.7 454.17L719.2 454.39L719.7 455.31L720.2 456L720.7 454.73L721.2 455.22L721.7 455.14L722.2 456.14L722.7 456.42L723.2 457.32L723.7 457.8L724.2 457.8L724.7 457.8L725.2 457.8L725.7 457.8L726.2 456.87L726.7 455.53L727.2 455.74L727.7 455.94L728.2 455.22L728.7 455.49L729.2 456.7L729.7 457.14L730.2 457.02L730.7 457.1L731.2 457.42L731.7 457.8L732.2 457.8L732.7 457.8L733.2 457.8L733.7 457.8L734.2 457.8L734.7 457.8L735.2 457.8L735.7 457.8L736.2 456.53L736.7 453.86L737.2 452.41L737.7 454.07L738.2 453.64L738.7 453.33L739.2 451.99L739.7 451.38L740.2 453.34L740.7 454.53L741.2 453.65L741.7 453.94L742.2 454.97L742.7 455.53L743.2 454.57L743.7 454.2L744.2 453.13L744.7 453.62L745.2 454.69L745.7 454.67L746.2 453.94L746.7 454.99L747.2 456.7L747.7 456.99L748.2 457.68L748.7 456.39L749.2 455.59L749.7 455.42L750.2 455.3L750.7 456.01L751.2 456.26L751.7 456.38L752.2 455.72L752.7 455.23L753.2 455.22L753.7 455.95L754.2 454.75L754.7 454.6L755.2 455.62L755.7 456.02L756.2 455.97L756.7 456.02L757.2 455.84L757.7 456.25L758.2 456.22L758.7 455.53L759.2 454.65L759.7 455.33L760.2 455.55L760.7 456L761.2 456.25L761.7 456.29L762.2 456.81L762.7 457.45L763.2 457.74L763.7 457.8L764.2 457.8L764.7 457.8L765.2 455.37L765.7 454.36L766.2 453.26L766.7 450.17L767.2 450.07L767.7 450.53L768.2 452.09L768.7 453L769.2 450.94L769.7 453.32L770.2 454.24L770.7 454.05L771.2 453.09L771.7 452.67L772.2 451.84L772.7 452.22L773.2 452.54L773.7 449.96L774.2 450.38L774.7 453.59L775.2 454.33L775.7 453.34L776.2 453.47L776.7 452.7L777.2 454.28L777.7 453.29L778.2 451.98L778.7 450.28L779.2 452.33L779.7 452.98L780.2 452.83L780.7 452.12L781.2 453.12L781.7 453.92L782.2 454.45L782.7 454.19L783.2 452.01L783.7 453.22L784.2 453.53L784.7 453.31L785.2 452.61L785.7 452.29L786.2 454.83L786.7 455.33L787.2 456.04L787.7 456.38L788.2 457.48L788.7 457.8L789.2 457.8L789.7 457.8L790.2 457.8L790.7 457.8L791.2 457.8L791.7 457.8L792.2 457.8L792.7 457.8L793.2 457.8L793.7 457.8L794.2 457.8L794.7 457.8L795.2 457.8L795.7 457.8L796.2 457.8L796.7 457.8L797.2 457.8L797.7 457.8L798.2 457.8L798.7 457.8L799.2 457.8L799.7 457.8L800.2 457.8L800.7 457.8L801.2 457.8L801.7 457.21L802.2 455.74L802.7 454.9L803.2 453.68L803.7 453.72L804.2 454.19L804.7 453.94L805.2 452.26L805.7 450.76L806.2 452.91L806.7 453.68L807.2 454.94L807.7 454.36L808.2 455.29L808.7 456.46L809.2 457.49L809.7 457.8L810.2 457.8L810.7 457.8L811.2 457.8L811.7 457.8L812.2 457.8L812.7 457.8L813.2 457.8L813.7 457.8L814.2 457.8L814.7 457.8L815.2 457.8L815.7 457.8L816.2 457.8L816.7 457.8L817.2 457.8L817.7 457.8L818.2 457.8L818.7 457.8L819.2 457.8L819.7 452.96L820.2 451.65L820.7 452.92L821.2 453.86L821.7 452.94L822.2 451.61L822.7 452.47L823.2 452.72L823.7 451.94L824.2 450.86L824.7 451.43L825.2 451.23L825.7 454.11L826.2 453.81L826.7 453.93L827.2 455.38L827.7 456.41L828.2 457.36L828.7 457.8L829.2 457.8L829.7 457.8L830.2 457.8L830.7 457.8L831.2 457.8L831.7 457.8L832.2 457.8L832.7 457.8L833.2 457.8L833.7 457.8L834.2 457.8L834.7 457.8L835.2 457.8L835.7 457.8L836.2 457.8L836.7 457.8L837.2 457.8L837.7 457.8L838.2 457.8L838.7 454.99L839.2 452.14L839.7 451.83L840.2 453.12L840.7 455.03L841.2 454.23L841.7 454.12L842.2 452.32L842.7 453.38L843.2 453.18L843.7 452.58L844.2 450.81L844.7 451.52L845.2 453.03L845.7 453.42L846.2 454.09L846.7 452.22L847.2 454.51L847.7 455.2L848.2 454.61L848.7 453.42L849.2 452.39L849.7 452.95L850.2 452.47L850.7 452.16L851.2 452.2L851.7 453.11L852.2 454.51L852.7 454.47L853.2 453.41L853.7 452.51L854.2 453.25L854.7 453.77L855.2 452.33L855.7 451.83L856.2 452.24L856.7 452.9L857.2 454.26L857.7 452.78L858.2 453.73L858.7 454.2L859.2 455.17L859.7 454.82L860.2 453.6L860.7 452.3L861.2 452.49L861.7 452.72L862.2 453.24L862.7 452.9L863.2 452.46L863.7 454L864.2 454.24L864.7 453.79L865.2 453.76L865.7 454.18L866.2 455.38L866.7 455.34L867.2 455.01L867.7 455.52L868.2 457.16L868.7 457.8L869.2 457.8L869.7 457.8L870.2 457.46L870.7 456.39L871.2 456.16L871.7 456.67L872.2 457.01L872.7 456.85L873.2 456.44L873.7 456.47L874.2 456.87L874.7 457.12L875.2 456.99L875.7 457.15L876.2 457.37L876.7 457.8L877.2 457.8L877.7 457.8L878.2 457.8L878.7 454.88L879.2 452.22L879.7 453.89L880.2 452.59L880.7 452.11L881.2 451.16L881.7 452.02L882.2 453.65L882.7 452.93L883.2 451.48L883.7 453.28L884.2 454.09L884.7 454.67L885.2 453.15L885.7 452.62L886.2 453.06L886.7 453.77L887.2 452.64L887.7 452.54L888.2 451.88L888.7 454.65L889.2 454.8L889.7 455.57L890.2 455.49L890.7 456.45L891.2 457.15L891.7 457.8L892.2 457.8L892.7 457.8L893.2 457.8L893.7 455.2L894.2 451.66L894.7 451.21L895.2 452.9L895.7 453.53L896.2 453.66L896.7 452.68L897.2 452.35L897.7 454.63L898.2 454.37L898.7 453.43L899.2 452.84L899.7 453.57L900.2 452.95L900.7 453.43L901.2 452.05L901.7 452.08L902.2 454.09L902.7 454.19L903.2 454.03L903.7 453.43L904.2 453.51L904.7 454.91L905.2 454.8L905.7 453.72L906.2 452.63L906.7 453.61L907.2 452.89L907.7 453.76L908.2 453.58L908.7 453.82L909.2 454.92L909.7 455.61L910.2 453.68L910.7 452.8L911.2 453.29L911.7 454.71L912.2 454.68L912.7 453.28L913.2 454.73L913.7 455.11L914.2 456.33L914.7 456.9L915.2 457.8L915.7 457.8L916.2 457.8L916.7 457.46L917.2 454.89L917.7 454.38L918.2 455.44L918.7 455.56L919.2 454.36L919.7 454.4L920.2 455.34L920.7 455.94L921.2 455.28L921.7 454.53L922.2 455.49L922.7 455.91L923.2 456.8L923.7 457.13L923.7 459.63L923.2 460.3L922.7 460.94L922.2 461.68L921.7 462.44L921.2 462.4L920.7 461.18L920.2 461.74L919.7 463.2L919.2 462.7L918.7 461.92L918.2 461.87L917.7 463.71L917.2 462.29L916.7 459.27L916.2 458.6L915.7 458.6L915.2 458.6L914.7 459.78L914.2 460.73L913.7 462.37L913.2 463.41L912.7 464.39L912.2 463.15L911.7 463.07L911.2 463.8L910.7 465.31L910.2 463.88L909.7 461.76L909.2 462.53L908.7 465.78L908.2 464.65L907.7 464.68L907.2 464.97L906.7 464.8L906.2 466.38L905.7 465.28L905.2 464.07L904.7 463.05L904.2 463.65L903.7 465.46L903.2 463.98L902.7 462.93L902.2 465.38L901.7 466.01L901.2 466.98L900.7 465.45L900.2 464.24L899.7 464.98L899.2 465.01L898.7 464.6L898.2 462.14L897.7 463.76L897.2 466.1L896.7 466.68L896.2 466.07L895.7 465.15L895.2 466.11L894.7 468.31L894.2 467L893.7 462.03L893.2 458.6L892.7 458.6L892.2 458.6L891.7 458.6L891.2 459.7L890.7 460.94L890.2 462.33L889.7 462.47L889.2 461.7L888.7 464.13L888.2 464.97L887.7 466.57L887.2 465.67L886.7 464.3L886.2 466.13L885.7 465L885.2 464.57L884.7 463.28L884.2 463.31L883.7 465.2L883.2 466.44L882.7 465.26L882.2 464.73L881.7 467.67L881.2 468.86L880.7 468.74L880.2 465.27L879.7 463.75L879.2 464.34L878.7 463.1L878.2 458.6L877.7 458.6L877.2 458.6L876.7 458.6L876.2 459.12L875.7 459.72L875.2 459.86L874.7 459.98L874.2 460.09L873.7 460.31L873.2 460.55L872.7 459.69L872.2 459.94L871.7 459.97L871.2 460.49L870.7 460.31L870.2 459.38L869.7 458.6L869.2 458.6L868.7 458.6L868.2 459.47L867.7 461.26L867.2 463.18L866.7 462.73L866.2 462.68L865.7 462.7L865.2 464.23L864.7 463.47L864.2 463.08L863.7 463.28L863.2 465.31L862.7 466.8L862.2 464.55L861.7 463.84L861.2 464.77L860.7 467.19L860.2 464.18L859.7 463.22L859.2 461.9L858.7 463.21L858.2 465.37L857.7 464.52L857.2 464.17L856.7 465.55L856.2 466.03L855.7 466.09L855.2 465.74L854.7 464.18L854.2 464.15L853.7 465.98L853.2 464.83L852.7 463.49L852.2 463.69L851.7 464.21L851.2 466.43L850.7 465.19L850.2 465.81L849.7 464.76L849.2 467.19L848.7 465.69L848.2 463.28L847.7 462.66L847.2 463.69L846.7 464.51L846.2 465.57L845.7 464.22L845.2 465.4L844.7 467.81L844.2 468.1L843.7 464.58L843.2 464.33L842.7 464.67L842.2 464.59L841.7 463.62L841.2 462.49L840.7 462.8L840.2 465.6L839.7 467.23L839.2 465.5L838.7 462.35L838.2 458.6L837.7 458.6L837.2 458.6L836.7 458.6L836.2 458.6L835.7 458.6L835.2 458.6L834.7 458.6L834.2 458.6L833.7 458.6L833.2 458.6L832.7 458.6L832.2 458.6L831.7 458.6L831.2 458.6L830.7 458.6L830.2 458.6L829.7 458.6L829.2 458.6L828.7 458.6L828.2 459.25L827.7 460.56L827.2 461.66L826.7 463.24L826.2 463.64L825.7 464.85L825.2 467.29L824.7 467.62L824.2 467.93L823.7 464.71L823.2 465.56L822.7 464.71L822.2 465.44L821.7 465.09L821.2 463.66L820.7 464.6L820.2 468.25L819.7 464.89L819.2 458.6L818.7 458.6L818.2 458.6L817.7 458.6L817.2 458.6L816.7 458.6L816.2 458.6L815.7 458.6L815.2 458.6L814.7 458.6L814.2 458.6L813.7 458.6L813.2 458.6L812.7 458.6L812.2 458.6L811.7 458.6L811.2 458.6L810.7 458.6L810.2 458.6L809.7 458.6L809.2 458.99L808.7 460.04L808.2 462.25L807.7 462.16L807.2 462.59L806.7 463L806.2 465.47L805.7 468.38L805.2 465.85L804.7 464.45L804.2 464.87L803.7 465.76L803.2 464.53L802.7 463.42L802.2 462.16L801.7 459.63L801.2 458.6L800.7 458.6L800.2 458.6L799.7 458.6L799.2 458.6L798.7 458.6L798.2 458.6L797.7 458.6L797.2 458.6L796.7 458.6L796.2 458.6L795.7 458.6L795.2 458.6L794.7 458.6L794.2 458.6L793.7 458.6L793.2 458.6L792.7 458.6L792.2 458.6L791.7 458.6L791.2 458.6L790.7 458.6L790.2 458.6L789.7 458.6L789.2 458.6L788.7 458.6L788.2 459.3L787.7 460.68L787.2 462.07L786.7 462.12L786.2 462.86L785.7 465.81L785.2 466.31L784.7 465.85L784.2 464.36L783.7 465.96L783.2 465.45L782.7 463.44L782.2 462.85L781.7 463.01L781.2 465.64L780.7 467.46L780.2 464.93L779.7 466.18L779.2 465.7L778.7 467.58L778.2 465.4L777.7 463.55L777.2 462.88L776.7 465.65L776.2 465.53L775.7 464.2L775.2 463.06L774.7 465.13L774.2 467.59L773.7 468.85L773.2 465.53L772.7 464.41L772.2 466L771.7 465.58L771.2 464.92L770.7 463.02L770.2 463.99L769.7 467.06L769.2 467.26L768.7 466.58L768.2 465.39L767.7 466.13L767.2 469.22L766.7 467.12L766.2 465.1L765.7 463.05L765.2 462.08L764.7 458.6L764.2 458.6L763.7 458.6L763.2 458.66L762.7 459.14L762.2 459.9L761.7 460.82L761.2 460.94L760.7 461.49L760.2 461.51L759.7 462.56L759.2 462.29L758.7 462.03L758.2 460.63L757.7 460.73L757.2 462.13L756.7 461.2L756.2 460.84L755.7 460.93L755.2 461.33L754.7 462.35L754.2 461.89L753.7 461.88L753.2 462.02L752.7 462.46L752.2 461.52L751.7 461.22L751.2 460.2L750.7 460.8L750.2 461.99L749.7 461.4L749.2 460.89L748.7 460.41L748.2 458.91L747.7 459.74L747.2 460.16L746.7 461.65L746.2 463.23L745.7 462.99L745.2 463.31L744.7 464.01L744.2 464.07L743.7 464.54L743.2 462.14L742.7 461.56L742.2 462.61L741.7 464.45L741.2 464.48L740.7 463.53L740.2 465.33L739.7 465.78L739.2 466.21L738.7 465.38L738.2 462.88L737.7 463.51L737.2 466.1L736.7 464.45L736.2 460.58L735.7 458.6L735.2 458.6L734.7 458.6L734.2 458.6L733.7 458.6L733.2 458.6L732.7 458.6L732.2 458.6L731.7 458.6L731.2 459.34L730.7 459.76L730.2 459.62L729.7 459.81L729.2 460.55L728.7 462.07L728.2 462.34L727.7 462.14L727.2 461.76L726.7 461.16L726.2 460.17L725.7 458.6L725.2 458.6L724.7 458.6L724.2 458.6L723.7 458.6L723.2 459.53L722.7 460.89L722.2 461.08L721.7 461.99L721.2 462.25L720.7 462.53L720.2 461.56L719.7 462.63L719.2 464.21L718.7 464.12L718.2 462.79L717.7 464.24L717.2 463.95L716.7 466.63L716.2 463.62L715.7 463.58L715.2 462.49L714.7 463.45L714.2 463.08L713.7 462.49L713.2 462.08L712.7 463.19L712.2 466.43L711.7 466.07L711.2 465.05L710.7 464.08L710.2 461.71L709.7 458.6L709.2 458.6L708.7 458.6L708.2 458.6L707.7 458.6L707.2 458.6L706.7 458.6L706.2 458.6L705.7 458.6L705.2 458.6L704.7 458.6L704.2 458.6L703.7 458.6L703.2 458.6L702.7 458.6L702.2 458.6L701.7 458.6L701.2 458.6L700.7 458.6L700.2 458.6L699.7 458.6L699.2 458.6L698.7 458.6L698.2 458.6L697.7 458.6L697.2 458.6L696.7 458.6L696.2 458.6L695.7 458.6L695.2 458.6L694.7 458.6L694.2 458.6L693.7 458.6L693.2 458.6L692.7 458.6L692.2 458.6L691.7 458.6L691.2 458.6L690.7 458.6L690.2 458.6L689.7 458.6L689.2 458.6L688.7 458.6L688.2 458.6L687.7 458.6L687.2 458.6L686.7 458.6L686.2 458.6L685.7 458.6L685.2 458.6L684.7 458.6L684.2 458.6L683.7 458.6L683.2 458.6L682.7 458.6L682.2 458.6L681.7 458.6L681.2 458.93L680.7 459.37L680.2 459.67L679.7 460.48L679.2 460.33L678.7 460.18L678.2 460.06L677.7 461.06L677.2 460.7L676.7 460.46L676.2 461.03L675.7 461.2L675.2 462.39L674.7 462.04L674.2 461.66L673.7 461.41L673.2 462.47L672.7 463.15L672.2 461.55L671.7 460.95L671.2 461.54L670.7 462.59L670.2 460.41L669.7 459.6L669.2 460.71L668.7 461.97L668.2 462.13L667.7 461.48L667.2 463.62L666.7 465.01L666.2 465.24L665.7 465.74L665.2 463.77L664.7 466.62L664.2 466.67L663.7 465.19L663.2 462.9L662.7 462.83L662.2 463.51L661.7 459.6L661.2 458.6L660.7 458.6L660.2 458.6L659.7 458.6L659.2 458.6L658.7 458.6L658.2 458.6L657.7 458.6L657.2 458.6L656.7 458.6L656.2 458.6L655.7 458.6L655.2 458.6L654.7 458.6L654.2 458.6L653.7 458.6L653.2 459.22L652.7 460.53L652.2 461.7L651.7 461.71L651.2 462.2L650.7 463.3L650.2 463.05L649.7 461.84L649.2 461.21L648.7 462.56L648.2 464.06L647.7 464.15L647.2 463.96L646.7 464.55L646.2 465.99L645.7 464.69L645.2 463.51L644.7 462.41L644.2 462.41L643.7 463.86L643.2 462.62L642.7 462.06L642.2 463.35L641.7 464.54L641.2 465.8L640.7 463.83L640.2 461.16L639.7 458.6L639.2 458.6L638.7 458.6L638.2 458.6L637.7 458.6L637.2 458.6L636.7 458.6L636.2 460.6L635.7 461.46L635.2 461.94L634.7 461.68L634.2 461.46L633.7 462.51L633.2 463.17L632.7 462.63L632.2 462.01L631.7 464.25L631.2 466.25L630.7 464.24L630.2 462.86L629.7 463.74L629.2 463.83L628.7 464.23L628.2 462.91L627.7 463.25L627.2 463.7L626.7 464.53L626.2 463.55L625.7 463.29L625.2 463.53L624.7 465.79L624.2 465.4L623.7 463.63L623.2 463.47L622.7 464.43L622.2 462.96L621.7 459.34L621.2 458.6L620.7 458.6L620.2 458.6L619.7 458.6L619.2 458.6L618.7 458.6L618.2 458.6L617.7 458.6L617.2 458.6L616.7 458.6L616.2 458.6L615.7 458.6L615.2 458.6L614.7 458.6L614.2 458.6L613.7 458.6L613.2 458.6L612.7 458.6L612.2 458.6L611.7 458.6L611.2 458.6L610.7 458.6L610.2 458.6L609.7 458.6L609.2 458.6L608.7 458.6L608.2 458.6L607.7 458.6L607.2 458.6L606.7 458.6L606.2 458.6L605.7 458.6L605.2 458.6L604.7 458.6L604.2 458.6L603.7 458.6L603.2 458.6L602.7 458.6L602.2 458.6L601.7 458.6L601.2 458.6L600.7 458.6L600.2 458.6L599.7 458.6L599.2 458.6L598.7 458.6L598.2 458.6L597.7 458.6L597.2 458.6L596.7 458.6L596.2 458.6L595.7 458.6L595.2 458.6L594.7 458.6L594.2 458.6L593.7 458.6L593.2 458.6L592.7 458.6L592.2 458.6L591.7 458.6L591.2 458.6L590.7 458.6L590.2 458.6L589.7 458.6L589.2 458.6L588.7 458.6L588.2 458.6L587.7 458.6L587.2 458.6L586.7 458.6L586.2 458.6L585.7 458.6L585.2 458.6L584.7 458.6L584.2 458.6L583.7 458.6L583.2 458.6L582.7 458.6L582.2 458.6L581.7 458.6L581.2 458.6L580.7 458.6L580.2 458.6L579.7 458.6L579.2 458.6L578.7 458.6L578.2 458.6L577.7 458.66L577.2 459.35L576.7 459.38L576.2 458.67L575.7 458.6L575.2 458.6L574.7 458.6L574.2 458.6L573.7 458.6L573.2 458.6L572.7 458.89L572.2 459.09L571.7 459.2L571.2 459.57L570.7 459.92L570.2 459.82L569.7 460.53L569.2 460.69L568.7 460.4L568.2 460.4L567.7 460.91L567.2 460.56L566.7 460.93L566.2 460.71L565.7 461.25L565.2 461.57L564.7 461.09L564.2 461.17L563.7 461.39L563.2 461.31L562.7 461.42L562.2 462.29L561.7 462.04L561.2 462.64L560.7 462.05L560.2 461.74L559.7 462.97L559.2 463.05L558.7 462.47L558.2 462.6L557.7 462.49L557.2 463.3L556.7 462.88L556.2 462.55L555.7 462.52L555.2 463.79L554.7 462.56L554.2 463.23L553.7 463.1L553.2 464.45L552.7 463.51L552.2 463.05L551.7 464.07L551.2 463.25L550.7 464.51L550.2 463.63L549.7 463.64L549.2 465.1L548.7 464.98L548.2 465.62L547.7 465.44L547.2 465.04L546.7 465.31L546.2 465.2L545.7 464.77L545.2 464.37L544.7 464.89L544.2 464.43L543.7 464.55L543.2 465.87L542.7 464.78L542.2 464.86L541.7 465.52L541.2 466.78L540.7 464.82L540.2 461.68L539.7 459.98L539.2 462.67L538.7 463.63L538.2 463.65L537.7 464.14L537.2 465.07L536.7 467.06L536.2 465.43L535.7 463.09L535.2 463.64L534.7 465.19L534.2 466.74L533.7 463.74L533.2 464.43L532.7 465.34L532.2 466.72L531.7 466.11L531.2 465.49L530.7 463.4L530.2 461.7L529.7 458.6L529.2 458.6L528.7 458.6L528.2 458.6L527.7 458.6L527.2 458.6L526.7 458.6L526.2 458.6L525.7 458.6L525.2 458.6L524.7 458.6L524.2 458.6L523.7 458.6L523.2 458.6L522.7 458.6L522.2 458.6L521.7 458.6L521.2 458.6L520.7 458.6L520.2 458.6L519.7 458.6L519.2 458.6L518.7 458.6L518.2 458.6L517.7 458.6L517.2 458.6L516.7 458.6L516.2 458.6L515.7 458.6L515.2 458.6L514.7 458.6L514.2 458.6L513.7 458.6L513.2 458.6L512.7 458.6L512.2 458.6L511.7 458.6L511.2 459.02L510.7 458.99L510.2 458.66L509.7 458.6L509.2 458.6L508.7 458.6L508.2 458.6L507.7 458.6L507.2 458.6L506.7 458.6L506.2 458.6L505.7 458.6L505.2 458.6L504.7 458.6L504.2 458.6L503.7 458.6L503.2 458.85L502.7 459.52L502.2 460.14L501.7 460.61L501.2 460.89L500.7 463.03L500.2 463.36L499.7 463.08L499.2 463.45L498.7 462.57L498.2 463.04L497.7 462.74L497.2 462.21L496.7 462.17L496.2 464.27L495.7 465.1L495.2 465.35L494.7 464.84L494.2 465.03L493.7 466.02L493.2 465.83L492.7 463.88L492.2 463.35L491.7 463.74L491.2 464.48L490.7 463.83L490.2 461.14L489.7 458.6L489.2 458.6L488.7 458.6L488.2 458.99L487.7 459.85L487.2 460.4L486.7 461.27L486.2 461.85L485.7 461.85L485.2 462.74L484.7 464.5L484.2 465.65L483.7 463.65L483.2 463.19L482.7 463.52L482.2 464.13L481.7 463.03L481.2 462.37L480.7 461.48L480.2 463.61L479.7 463.71L479.2 464.48L478.7 464.02L478.2 464.26L477.7 464.94L477.2 464.49L476.7 464L476.2 462.89L475.7 462.73L475.2 463.72L474.7 462.75L474.2 462.7L473.7 461.37L473.2 458.6L472.7 458.6L472.2 458.6L471.7 458.6L471.2 458.6L470.7 458.6L470.2 458.6L469.7 458.6L469.2 458.6L468.7 458.6L468.2 458.91L467.7 460.03L467.2 460.08L466.7 459.91L466.2 460L465.7 460.84L465.2 461.08L464.7 460.67L464.2 461.14L463.7 460.24L463.2 458.6L462.7 458.6L462.2 458.6L461.7 458.6L461.2 460.16L460.7 461.25L460.2 462.09L459.7 462.26L459.2 462.15L458.7 461.94L458.2 464.29L457.7 462.68L457.2 461.66L456.7 463.41L456.2 464.82L455.7 465.68L455.2 465.21L454.7 462.88L454.2 464.12L453.7 464.31L453.2 464.12L452.7 461.94L452.2 462.24L451.7 462.99L451.2 464.9L450.7 464.61L450.2 462.9L449.7 463.92L449.2 466.52L448.7 465.96L448.2 464.26L447.7 463.36L447.2 463.42L446.7 464.05L446.2 460.49L445.7 458.6L445.2 458.6L444.7 458.6L444.2 458.6L443.7 458.6L443.2 458.6L442.7 458.6L442.2 458.6L441.7 458.6L441.2 458.6L440.7 458.6L440.2 458.6L439.7 458.6L439.2 458.6L438.7 458.6L438.2 458.6L437.7 458.6L437.2 458.6L436.7 458.6L436.2 458.6L435.7 458.6L435.2 458.6L434.7 458.6L434.2 458.6L433.7 458.6L433.2 458.6L432.7 458.6L432.2 458.6L431.7 458.6L431.2 458.6L430.7 458.6L430.2 458.6L429.7 458.6L429.2 458.6L428.7 458.6L428.2 458.6L427.7 458.6L427.2 458.6L426.7 458.6L426.2 458.6L425.7 458.6L425.2 458.6L424.7 458.6L424.2 458.6L423.7 458.6L423.2 458.6L422.7 458.68L422.2 459.3L421.7 459.69L421.2 459.92L420.7 459.73L420.2 459.27L419.7 458.6L419.2 458.6L418.7 458.6L418.2 458.71L417.7 460.06L417.2 461.04L416.7 461.16L416.2 460.98L415.7 461.62L415.2 463.55L414.7 462.91L414.2 462.07L413.7 461.16L413.2 462.71L412.7 463.75L412.2 463.76L411.7 463L411.2 463.97L410.7 464.88L410.2 466.67L409.7 463.99L409.2 462.7L408.7 463.42L408.2 465.33L407.7 463.5L407.2 463.25L406.7 462.24L406.2 461.64L405.7 458.6L405.2 458.6L404.7 460.18L404.2 461.42L403.7 462.86L403.2 465.27L402.7 464.54L402.2 464.87L401.7 464.42L401.2 464.81L400.7 464.05L400.2 463.88L399.7 463L399.2 464.86L398.7 467.79L398.2 466.54L397.7 465.11L397.2 464.85L396.7 466.46L396.2 466.04L395.7 464.32L395.2 462.71L394.7 464.65L394.2 465.87L393.7 464.37L393.2 464.52L392.7 465.42L392.2 466.85L391.7 468.37L391.2 465.91L390.7 465.84L390.2 465.59L389.7 467.42L389.2 465.62L388.7 462.22L388.2 458.6L387.7 458.6L387.2 458.6L386.7 458.6L386.2 460.2L385.7 460.92L385.2 461.95L384.7 462.88L384.2 463.16L383.7 462.18L383.2 461.73L382.7 462.44L382.2 463.2L381.7 463.28L381.2 462.41L380.7 462.95L380.2 464.8L379.7 465.19L379.2 463.87L378.7 463.15L378.2 463.73L377.7 463.19L377.2 462.55L376.7 461.75L376.2 462.38L375.7 462.69L375.2 463.73L374.7 464.05L374.2 463.12L373.7 464.57L373.2 464.73L372.7 464.96L372.2 462.6L371.7 462.36L371.2 463.42L370.7 462.25L370.2 460.39L369.7 458.6L369.2 458.6L368.7 458.6L368.2 458.6L367.7 458.6L367.2 458.6L366.7 458.6L366.2 458.6L365.7 458.6L365.2 458.6L364.7 458.6L364.2 458.6L363.7 458.6L363.2 458.6L362.7 458.6L362.2 458.6L361.7 458.6L361.2 458.6L360.7 458.6L360.2 458.6L359.7 458.6L359.2 458.6L358.7 458.6L358.2 458.6L357.7 458.6L357.2 458.6L356.7 458.6L356.2 458.6L355.7 458.6L355.2 458.6L354.7 459.49L354.2 460.57L353.7 462.54L353.2 462.37L352.7 462.49L352.2 461.94L351.7 464.46L351.2 463.24L350.7 462.21L350.2 461.41L349.7 462.77L349.2 464.44L348.7 463.86L348.2 464.28L347.7 464.1L347.2 465.18L346.7 466.08L346.2 464.18L345.7 463.54L345.2 462.98L344.7 464.3L344.2 462.94L343.7 462.92L343.2 462.85L342.7 464.45L342.2 462.95L341.7 459.41L341.2 458.6L340.7 458.6L340.2 458.6L339.7 458.9L339.2 459.47L338.7 459.53L338.2 459.5L337.7 459.67L337.2 460.11L336.7 460.78L336.2 460.81L335.7 461.19L335.2 461.68L334.7 462.06L334.2 462.11L333.7 460.09L333.2 458.6L332.7 458.6L332.2 458.9L331.7 459.84L331.2 460.31L330.7 460.74L330.2 460.66L329.7 461.47L329.2 461.48L328.7 462.08L328.2 461L327.7 460.17L327.2 460.75L326.7 461.44L326.2 462.28L325.7 461.44L325.2 459.83Z" fill="#4da3fb"/>
<text x="330" y="440.3" font-size="7.5" fill="#57a6f2" textLength="41" lengthAdjust="spacingAndGlyphs" >Lead Vocals</text>
<rect x="474.9" y="482.75" width="449.4" height="48.2" rx="3.1" ry="3.1" fill="#3396ff"/>
<path d="M622.8 482.65H626.2L624.5 484.45ZM622.8 531.05H626.2L624.5 529.25Z" fill="#0f1111"/>
<path d="M772.8 482.65H776.2L774.5 484.45ZM772.8 531.05H776.2L774.5 529.25Z" fill="#0f1111"/>
<path d="M475.2 510.97H624.3V511.53H475.2ZM479.69 510.55L480.69 510.97V511.53L479.69 511.85ZM484.38 510.25L485.68 510.97V511.53L484.38 512.05ZM489.06 510.55L490.06 510.97V511.53L489.06 511.85ZM493.25 510.25L493.75 507.95L494.45 509.25L497.15 510.75L498.75 510.95V511.55L497.15 511.75L494.45 513.25L493.75 514.55L493.25 512.25ZM498.44 510.55L499.44 510.97V511.53L498.44 511.85ZM503.12 510.25L504.43 510.97V511.53L503.12 512.05ZM507.81 510.55L508.81 510.97V511.53L507.81 511.85ZM512.5 510.25L513.8 510.97V511.53L512.5 512.05ZM517.19 510.55L518.19 510.97V511.53L517.19 511.85ZM521.88 510.25L523.17 510.97V511.53L521.88 512.05ZM526.56 510.55L527.56 510.97V511.53L526.56 511.85ZM530.75 510.25L531.25 507.95L531.95 509.25L534.65 510.75L536.25 510.95V511.55L534.65 511.75L531.95 513.25L531.25 514.55L530.75 512.25ZM535.94 510.55L536.94 510.97V511.53L535.94 511.85ZM540.62 510.25L541.92 510.97V511.53L540.62 512.05ZM545.31 510.55L546.31 510.97V511.53L545.31 511.85ZM550 510.25L551.3 510.97V511.53L550 512.05ZM554.69 510.55L555.69 510.97V511.53L554.69 511.85ZM559.38 510.25L560.67 510.97V511.53L559.38 512.05ZM564.06 510.55L565.06 510.97V511.53L564.06 511.85ZM568.25 510.25L568.75 507.95L569.45 509.25L572.15 510.75L573.75 510.95V511.55L572.15 511.75L569.45 513.25L568.75 514.55L568.25 512.25ZM573.44 510.55L574.44 510.97V511.53L573.44 511.85ZM578.12 510.25L579.42 510.97V511.53L578.12 512.05ZM582.81 510.55L583.81 510.97V511.53L582.81 511.85ZM587.5 510.25L588.8 510.97V511.53L587.5 512.05ZM592.19 510.55L593.19 510.97V511.53L592.19 511.85ZM596.88 510.25L598.17 510.97V511.53L596.88 512.05ZM601.56 510.55L602.56 510.97V511.53L601.56 511.85ZM605.75 510.25L606.25 507.95L606.95 509.25L609.65 510.75L611.25 510.95V511.55L609.65 511.75L606.95 513.25L606.25 514.55L605.75 512.25ZM610.94 510.55L611.94 510.97V511.53L610.94 511.85ZM615.62 510.25L616.92 510.97V511.53L615.62 512.05ZM620.31 510.55L621.31 510.97V511.53L620.31 511.85Z" fill="#d6e9ff"/>
<path d="M624.7 510.97H924V511.53H624.7ZM625 510.25L626.3 510.97V511.53L625 512.05ZM629.69 510.55L630.69 510.97V511.53L629.69 511.85ZM634.38 510.25L635.67 510.97V511.53L634.38 512.05ZM639.06 510.55L640.06 510.97V511.53L639.06 511.85ZM643.25 510.25L643.75 507.95L644.45 509.25L647.15 510.75L648.75 510.95V511.55L647.15 511.75L644.45 513.25L643.75 514.55L643.25 512.25ZM648.44 510.55L649.44 510.97V511.53L648.44 511.85ZM653.12 510.25L654.42 510.97V511.53L653.12 512.05ZM657.81 510.55L658.81 510.97V511.53L657.81 511.85ZM662.5 510.25L663.8 510.97V511.53L662.5 512.05ZM667.19 510.55L668.19 510.97V511.53L667.19 511.85ZM671.88 510.25L673.17 510.97V511.53L671.88 512.05ZM676.56 510.55L677.56 510.97V511.53L676.56 511.85ZM680.75 510.25L681.25 507.95L681.95 509.25L684.65 510.75L686.25 510.95V511.55L684.65 511.75L681.95 513.25L681.25 514.55L680.75 512.25ZM685.94 510.55L686.94 510.97V511.53L685.94 511.85ZM690.62 510.25L691.92 510.97V511.53L690.62 512.05ZM695.31 510.55L696.31 510.97V511.53L695.31 511.85ZM700 510.25L701.3 510.97V511.53L700 512.05ZM704.69 510.55L705.69 510.97V511.53L704.69 511.85ZM709.38 510.25L710.67 510.97V511.53L709.38 512.05ZM714.06 510.55L715.06 510.97V511.53L714.06 511.85ZM718.25 510.25L718.75 507.95L719.45 509.25L722.15 510.75L723.75 510.95V511.55L722.15 511.75L719.45 513.25L718.75 514.55L718.25 512.25ZM723.44 510.55L724.44 510.97V511.53L723.44 511.85ZM728.12 510.25L729.42 510.97V511.53L728.12 512.05ZM732.81 510.55L733.81 510.97V511.53L732.81 511.85ZM737.5 510.25L738.8 510.97V511.53L737.5 512.05ZM742.19 510.55L743.19 510.97V511.53L742.19 511.85ZM746.88 510.25L748.17 510.97V511.53L746.88 512.05ZM751.56 510.55L752.56 510.97V511.53L751.56 511.85ZM755.75 510.25L756.25 507.95L756.95 509.25L759.65 510.75L761.25 510.95V511.55L759.65 511.75L756.95 513.25L756.25 514.55L755.75 512.25ZM760.94 510.55L761.94 510.97V511.53L760.94 511.85ZM765.62 510.25L766.92 510.97V511.53L765.62 512.05ZM770.31 510.55L771.31 510.97V511.53L770.31 511.85ZM775 510.25L776.3 510.97V511.53L775 512.05ZM779.69 510.55L780.69 510.97V511.53L779.69 511.85ZM784.38 510.25L785.67 510.97V511.53L784.38 512.05ZM789.06 510.55L790.06 510.97V511.53L789.06 511.85ZM793.25 510.25L793.75 507.95L794.45 509.25L797.15 510.75L798.75 510.95V511.55L797.15 511.75L794.45 513.25L793.75 514.55L793.25 512.25ZM798.44 510.55L799.44 510.97V511.53L798.44 511.85ZM803.12 510.25L804.42 510.97V511.53L803.12 512.05ZM807.81 510.55L808.81 510.97V511.53L807.81 511.85ZM812.5 510.25L813.8 510.97V511.53L812.5 512.05ZM817.19 510.55L818.19 510.97V511.53L817.19 511.85ZM821.88 510.25L823.17 510.97V511.53L821.88 512.05ZM826.56 510.55L827.56 510.97V511.53L826.56 511.85ZM830.75 510.25L831.25 507.95L831.95 509.25L834.65 510.75L836.25 510.95V511.55L834.65 511.75L831.95 513.25L831.25 514.55L830.75 512.25ZM835.94 510.55L836.94 510.97V511.53L835.94 511.85ZM840.62 510.25L841.92 510.97V511.53L840.62 512.05ZM845.31 510.55L846.31 510.97V511.53L845.31 511.85ZM850 510.25L851.3 510.97V511.53L850 512.05ZM854.69 510.55L855.69 510.97V511.53L854.69 511.85ZM859.38 510.25L860.67 510.97V511.53L859.38 512.05ZM864.06 510.55L865.06 510.97V511.53L864.06 511.85ZM868.25 510.25L868.75 507.95L869.45 509.25L872.15 510.75L873.75 510.95V511.55L872.15 511.75L869.45 513.25L868.75 514.55L868.25 512.25ZM873.44 510.55L874.44 510.97V511.53L873.44 511.85ZM878.12 510.25L879.42 510.97V511.53L878.12 512.05ZM882.81 510.55L883.81 510.97V511.53L882.81 511.85ZM887.5 510.25L888.8 510.97V511.53L887.5 512.05ZM892.19 510.55L893.19 510.97V511.53L892.19 511.85ZM896.88 510.25L898.17 510.97V511.53L896.88 512.05ZM901.56 510.55L902.56 510.97V511.53L901.56 511.85ZM905.75 510.25L906.25 507.95L906.95 509.25L909.65 510.75L911.25 510.95V511.55L909.65 511.75L906.95 513.25L906.25 514.55L905.75 512.25ZM910.94 510.55L911.94 510.97V511.53L910.94 511.85ZM915.62 510.25L916.92 510.97V511.53L915.62 512.05ZM920.31 510.55L921.31 510.97V511.53L920.31 511.85Z" fill="#9fcdff"/>
<text x="479.7" y="493.75" font-size="7.5" fill="#ffffff" textLength="40.3" lengthAdjust="spacingAndGlyphs" >Tambourine</text>
<rect x="484.3" y="536.2" width="440" height="48.2" rx="3.1" ry="3.1" fill="#14477f"/>
<path d="M631.7 536.1H635.1L633.4 537.9ZM631.7 584.5H635.1L633.4 582.7Z" fill="#0f1111"/>
<path d="M782.3 536.1H785.7L784 537.9ZM782.3 584.5H785.7L784 582.7Z" fill="#0f1111"/>
<path d="M484.5 564.6H633.2V565.2H484.5ZM484.3 562.3L487.9 564.5V565.3L484.3 567.5ZM502.75 560.3H503.35V562.8L504.85 562.9L507.85 564.5V565.3L504.85 566.9L503.35 567V569.5H502.75ZM521.5 560.3H522.1V562.8L523.6 562.9L526.6 564.5V565.3L523.6 566.9L522.1 567V569.5H521.5ZM540.25 560.3H540.85V562.8L542.35 562.9L545.35 564.5V565.3L542.35 566.9L540.85 567V569.5H540.25ZM559 560.3H559.6V562.8L561.1 562.9L564.1 564.5V565.3L561.1 566.9L559.6 567V569.5H559ZM577.75 560.3H578.35V562.8L579.85 562.9L582.85 564.5V565.3L579.85 566.9L578.35 567V569.5H577.75ZM596.5 560.3H597.1V562.8L598.6 562.9L601.6 564.5V565.3L598.6 566.9L597.1 567V569.5H596.5ZM615.25 560.3H615.85V562.8L617.35 562.9L620.35 564.5V565.3L617.35 566.9L615.85 567V569.5H615.25Z" fill="#3d93ee"/>
<path d="M633.6 564.6H924V565.2H633.6ZM634 560.3H634.6V562.8L636.1 562.9L639.1 564.5V565.3L636.1 566.9L634.6 567V569.5H634ZM652.75 560.3H653.35V562.8L654.85 562.9L657.85 564.5V565.3L654.85 566.9L653.35 567V569.5H652.75ZM671.5 560.3H672.1V562.8L673.6 562.9L676.6 564.5V565.3L673.6 566.9L672.1 567V569.5H671.5ZM690.25 560.3H690.85V562.8L692.35 562.9L695.35 564.5V565.3L692.35 566.9L690.85 567V569.5H690.25ZM709 560.3H709.6V562.8L711.1 562.9L714.1 564.5V565.3L711.1 566.9L709.6 567V569.5H709ZM727.75 560.3H728.35V562.8L729.85 562.9L732.85 564.5V565.3L729.85 566.9L728.35 567V569.5H727.75ZM746.5 560.3H747.1V562.8L748.6 562.9L751.6 564.5V565.3L748.6 566.9L747.1 567V569.5H746.5ZM765.25 560.3H765.85V562.8L767.35 562.9L770.35 564.5V565.3L767.35 566.9L765.85 567V569.5H765.25ZM784 560.3H784.6V562.8L786.1 562.9L789.1 564.5V565.3L786.1 566.9L784.6 567V569.5H784ZM802.75 560.3H803.35V562.8L804.85 562.9L807.85 564.5V565.3L804.85 566.9L803.35 567V569.5H802.75ZM821.5 560.3H822.1V562.8L823.6 562.9L826.6 564.5V565.3L823.6 566.9L822.1 567V569.5H821.5ZM840.25 560.3H840.85V562.8L842.35 562.9L845.35 564.5V565.3L842.35 566.9L840.85 567V569.5H840.25ZM859 560.3H859.6V562.8L861.1 562.9L864.1 564.5V565.3L861.1 566.9L859.6 567V569.5H859ZM877.75 560.3H878.35V562.8L879.85 562.9L882.85 564.5V565.3L879.85 566.9L878.35 567V569.5H877.75ZM896.5 560.3H897.1V562.8L898.6 562.9L901.6 564.5V565.3L898.6 566.9L897.1 567V569.5H896.5ZM915.25 560.3H915.85V562.8L917.35 562.9L920.35 564.5V565.3L917.35 566.9L915.85 567V569.5H915.25Z" fill="#2f79cc"/>
<text x="488.8" y="547.2" font-size="7.5" fill="#57a6f2" textLength="45.4" lengthAdjust="spacingAndGlyphs" >Claquements</text>
<rect x="530.8" y="589.65" width="65.7" height="48.2" rx="3.1" ry="3.1" fill="#14477f"/>
<rect x="615.8" y="589.65" width="83.8" height="48.2" rx="3.1" ry="3.1" fill="#14477f"/>
<rect x="775" y="589.65" width="149.3" height="48.2" rx="3.1" ry="3.1" fill="#14477f"/>
<path d="M847.7 589.55H851.1L849.4 591.35ZM847.7 637.95H851.1L849.4 636.15Z" fill="#0f1111"/>
<path d="M531.2 618.15L531.7 617.42L532.2 616.69L532.7 616.47L533.2 615.61L533.7 616L534.2 616.23L534.7 616.51L535.2 616.64L535.7 616.74L536.2 616.43L536.7 616.5L537.2 616.64L537.7 616.84L538.2 616.62L538.7 616.69L539.2 616.6L539.7 616.44L540.2 617.14L540.7 616.81L541.2 617.41L541.7 617.4L542.2 617.51L542.7 617.93L543.2 618.15L543.7 618.15L544.2 618.15L544.7 618.15L545.2 618.15L545.7 618.15L546.2 618.15L546.7 618.15L547.2 618.15L547.7 618.15L548.2 617.96L548.7 616.95L549.2 615.76L549.7 615.03L550.2 615.52L550.7 615.1L551.2 615.76L551.7 615.2L552.2 615.62L552.7 615.92L553.2 615.63L553.7 615.52L554.2 614.91L554.7 615.56L555.2 615.27L555.7 615.87L556.2 615.79L556.7 615.27L557.2 616.01L557.7 615.98L558.2 615.95L558.7 616.04L559.2 616.72L559.7 616.93L560.2 617L560.7 617.23L561.2 617.48L561.7 618.15L562.2 617.87L562.7 617.49L563.2 617.37L563.7 617.33L564.2 617.43L564.7 617.46L565.2 617.47L565.7 617.51L566.2 617.86L566.7 617.88L567.2 617.96L567.7 618.09L568.2 618.15L568.7 618.15L569.2 618.15L569.7 618.15L570.2 618.15L570.7 618.15L571.2 618.15L571.7 618.15L572.2 618.15L572.7 618.15L573.2 618.15L573.7 618.15L574.2 618.15L574.7 618.15L575.2 618.15L575.7 618.15L576.2 618.02L576.7 617.85L577.2 617.69L577.7 617.71L578.2 617.62L578.7 617.74L579.2 617.81L579.7 617.75L580.2 617.85L580.7 618.15L581.2 618.15L581.7 618.15L582.2 618.15L582.7 618.15L583.2 618.15L583.7 618.15L584.2 618.15L584.7 618.15L585.2 618.15L585.7 618.15L586.2 618.15L586.7 618.15L587.2 618.15L587.7 618.15L588.2 618.15L588.7 618.15L589.2 618.15L589.7 618.15L590.2 618.15L590.7 618.15L591.2 618.15L591.7 618.15L592.2 618.15L592.7 618.15L593.2 618.15L593.7 618.15L594.2 618.15L594.7 618.15L595.2 618.15L595.7 618.15L596.2 618.15L596.2 618.95L595.7 618.95L595.2 618.95L594.7 618.95L594.2 618.95L593.7 618.95L593.2 618.95L592.7 618.95L592.2 618.95L591.7 618.95L591.2 618.95L590.7 618.95L590.2 618.95L589.7 618.95L589.2 618.95L588.7 618.95L588.2 618.95L587.7 618.95L587.2 618.95L586.7 618.95L586.2 618.95L585.7 618.95L585.2 618.95L584.7 618.95L584.2 618.95L583.7 618.95L583.2 618.95L582.7 618.95L582.2 618.95L581.7 618.95L581.2 618.95L580.7 618.95L580.2 619.25L579.7 619.24L579.2 619.28L578.7 619.35L578.2 619.39L577.7 619.49L577.2 619.29L576.7 619.4L576.2 619.02L575.7 618.95L575.2 618.95L574.7 618.95L574.2 618.95L573.7 618.95L573.2 618.95L572.7 618.95L572.2 618.95L571.7 618.95L571.2 618.95L570.7 618.95L570.2 618.95L569.7 618.95L569.2 618.95L568.7 618.95L568.2 618.95L567.7 619.01L567.2 619.12L566.7 619.12L566.2 619.49L565.7 619.45L565.2 619.55L564.7 619.32L564.2 619.43L563.7 619.38L563.2 619.56L562.7 619.7L562.2 619.27L561.7 618.95L561.2 619.29L560.7 619.97L560.2 620.39L559.7 620.49L559.2 620.37L558.7 620.77L558.2 621.12L557.7 621.33L557.2 621.4L556.7 621.33L556.2 620.97L555.7 621.91L555.2 622.21L554.7 621.25L554.2 621.29L553.7 622.16L553.2 621.68L552.7 621.61L552.2 621.51L551.7 622.15L551.2 622.47L550.7 621.97L550.2 621.51L549.7 621.65L549.2 621.6L548.7 620.6L548.2 619.32L547.7 618.95L547.2 618.95L546.7 618.95L546.2 618.95L545.7 618.95L545.2 618.95L544.7 618.95L544.2 618.95L543.7 618.95L543.2 618.95L542.7 619.31L542.2 619.38L541.7 619.76L541.2 620.08L540.7 620.02L540.2 619.91L539.7 620.43L539.2 620.61L538.7 620.69L538.2 620.71L537.7 620.72L537.2 621.08L536.7 620.38L536.2 621.1L535.7 620.58L535.2 620.59L534.7 621.18L534.2 620.91L533.7 620.92L533.2 620.72L532.7 620.79L532.2 620.91L531.7 620.05L531.2 618.95Z" fill="#4da3fb"/>
<path d="M616.2 618.15L616.7 618.15L617.2 618.15L617.7 618.15L618.2 618.15L618.7 618.15L619.2 618.15L619.7 618.15L620.2 618.15L620.7 618.15L621.2 618.15L621.7 618.15L622.2 618.15L622.7 618.15L623.2 618.15L623.7 618.15L624.2 618.15L624.7 618.15L625.2 618.15L625.7 617.24L626.2 616.95L626.7 616.72L627.2 615.51L627.7 615.89L628.2 616.44L628.7 615.77L629.2 615.77L629.7 616.28L630.2 616.03L630.7 615.97L631.2 616.19L631.7 616.49L632.2 615.94L632.7 616.21L633.2 616.37L633.7 616.38L634.2 616.67L634.7 616.52L635.2 617.31L635.7 618.07L636.2 618.15L636.7 618.15L637.2 618.15L637.7 618.15L638.2 618.15L638.7 618.15L639.2 618.15L639.7 618.15L640.2 618.15L640.7 618.15L641.2 618.15L641.7 618.15L642.2 618.15L642.7 618.15L643.2 617.42L643.7 616.88L644.2 616.44L644.7 616.44L645.2 616.45L645.7 616.53L646.2 616.07L646.7 616.16L647.2 615.96L647.7 616.04L648.2 616.03L648.7 616.58L649.2 616.06L649.7 616.4L650.2 615.73L650.7 616.03L651.2 616.48L651.7 616.67L652.2 616.11L652.7 616.11L653.2 616.8L653.7 617.02L654.2 617.62L654.7 618.15L655.2 618.15L655.7 618.15L656.2 618.15L656.7 618.15L657.2 618.15L657.7 618.15L658.2 618.15L658.7 618.15L659.2 618.15L659.7 618.15L660.2 618.15L660.7 618.15L661.2 618.15L661.7 617L662.2 616.12L662.7 615.97L663.2 615.57L663.7 615.99L664.2 616L664.7 616.12L665.2 615.21L665.7 615.36L666.2 615.36L666.7 615.97L667.2 615.8L667.7 615.31L668.2 615.56L668.7 615.4L669.2 616.3L669.7 616.19L670.2 615.34L670.7 616.52L671.2 616.47L671.7 616.27L672.2 616.67L672.7 616.7L673.2 617.22L673.7 617.08L674.2 617.47L674.7 617.69L675.2 618.15L675.7 617.77L676.2 617.54L676.7 617.51L677.2 617.82L677.7 617.7L678.2 617.7L678.7 617.72L679.2 618.03L679.7 618.01L680.2 618.11L680.7 618.15L681.2 618.15L681.7 618.15L682.2 618.15L682.7 618.15L683.2 618.15L683.7 618.15L684.2 618.15L684.7 618.15L685.2 618.15L685.7 618.15L686.2 618.15L686.7 618.15L687.2 618.15L687.7 618.15L688.2 618.15L688.7 618.03L689.2 617.73L689.7 617.66L690.2 617.85L690.7 617.56L691.2 617.7L691.7 617.58L692.2 617.68L692.7 617.95L693.2 618.15L693.7 618.15L694.2 618.15L694.7 618.15L695.2 618.15L695.7 618.15L696.2 618.15L696.7 618.15L697.2 618.15L697.7 618.15L698.2 618.15L698.7 618.15L699.2 618.15L699.2 618.95L698.7 618.95L698.2 618.95L697.7 618.95L697.2 618.95L696.7 618.95L696.2 618.95L695.7 618.95L695.2 618.95L694.7 618.95L694.2 618.95L693.7 618.95L693.2 618.95L692.7 619.25L692.2 619.39L691.7 619.24L691.2 619.41L690.7 619.42L690.2 619.58L689.7 619.58L689.2 619.52L688.7 619.02L688.2 618.95L687.7 618.95L687.2 618.95L686.7 618.95L686.2 618.95L685.7 618.95L685.2 618.95L684.7 618.95L684.2 618.95L683.7 618.95L683.2 618.95L682.7 618.95L682.2 618.95L681.7 618.95L681.2 618.95L680.7 618.95L680.2 618.99L679.7 619.11L679.2 619.11L678.7 619.21L678.2 619.22L677.7 619.28L677.2 619.26L676.7 619.45L676.2 619.58L675.7 619.14L675.2 618.95L674.7 619.29L674.2 619.74L673.7 619.68L673.2 620.18L672.7 620.09L672.2 620.26L671.7 621.14L671.2 620.8L670.7 620.63L670.2 621.35L669.7 621.75L669.2 621.82L668.7 621.06L668.2 620.98L667.7 621.23L667.2 621.26L666.7 621.97L666.2 621.38L665.7 621.2L665.2 621.52L664.7 621.89L664.2 621.93L663.7 621.77L663.2 621.39L662.7 620.9L662.2 620.57L661.7 619.77L661.2 618.95L660.7 618.95L660.2 618.95L659.7 618.95L659.2 618.95L658.7 618.95L658.2 618.95L657.7 618.95L657.2 618.95L656.7 618.95L656.2 618.95L655.7 618.95L655.2 618.95L654.7 618.95L654.2 619.71L653.7 620L653.2 620.69L652.7 620.38L652.2 620.91L651.7 620.73L651.2 620.97L650.7 621.3L650.2 620.54L649.7 621.39L649.2 620.6L648.7 621L648.2 621.41L647.7 620.67L647.2 620.6L646.7 620.92L646.2 621.46L645.7 620.64L645.2 621.11L644.7 620.48L644.2 620.92L643.7 619.92L643.2 619.37L642.7 618.95L642.2 618.95L641.7 618.95L641.2 618.95L640.7 618.95L640.2 618.95L639.7 618.95L639.2 618.95L638.7 618.95L638.2 618.95L637.7 618.95L637.2 618.95L636.7 618.95L636.2 618.95L635.7 619.13L635.2 619.85L634.7 620L634.2 621.01L633.7 621.23L633.2 620.67L632.7 620.57L632.2 621.21L631.7 620.8L631.2 621.27L630.7 621.32L630.2 621.49L629.7 620.69L629.2 620.75L628.7 621.07L628.2 621.01L627.7 621.28L627.2 620.73L626.7 620.84L626.2 620.7L625.7 619.81L625.2 618.95L624.7 618.95L624.2 618.95L623.7 618.95L623.2 618.95L622.7 618.95L622.2 618.95L621.7 618.95L621.2 618.95L620.7 618.95L620.2 618.95L619.7 618.95L619.2 618.95L618.7 618.95L618.2 618.95L617.7 618.95L617.2 618.95L616.7 618.95L616.2 618.95Z" fill="#4da3fb"/>
<path d="M775.3 618.15L775.8 618.15L776.3 615.97L776.8 615.9L777.3 615.63L777.8 615.87L778.3 616.06L778.8 616.42L779.3 615.54L779.8 615.74L780.3 616.33L780.8 616.02L781.3 616.03L781.8 616.69L782.3 615.76L782.8 616.2L783.3 616.9L783.8 615.91L784.3 616.55L784.8 616.63L785.3 616.76L785.8 616.98L786.3 617.65L786.8 618.15L787.3 617.31L787.8 616.64L788.3 616.41L788.8 616.23L789.3 616.52L789.8 616.49L790.3 616.33L790.8 616.93L791.3 616.17L791.8 616.7L792.3 616.84L792.8 616.94L793.3 616.68L793.8 616.5L794.3 616.39L794.8 616.8L795.3 617.13L795.8 616.83L796.3 617.07L796.8 616.39L797.3 615.23L797.8 616.17L798.3 616.29L798.8 616.62L799.3 616.73L799.8 616.81L800.3 616.65L800.8 616.75L801.3 616.8L801.8 616.83L802.3 617.2L802.8 617.16L803.3 617.12L803.8 616.34L804.3 616.82L804.8 616.79L805.3 616.6L805.8 616.63L806.3 616.68L806.8 617.12L807.3 616.72L807.8 616.71L808.3 616.55L808.8 616.58L809.3 616.91L809.8 616.67L810.3 617.25L810.8 616.65L811.3 616.47L811.8 616.74L812.3 616.81L812.8 617.15L813.3 617.25L813.8 617.15L814.3 616.51L814.8 616.95L815.3 616.77L815.8 617L816.3 616.9L816.8 617.06L817.3 616.86L817.8 616.88L818.3 616.68L818.8 617.32L819.3 617.31L819.8 617.18L820.3 616.8L820.8 617.17L821.3 617.01L821.8 617.2L822.3 617.15L822.8 617.04L823.3 617.06L823.8 616.9L824.3 616.83L824.8 616.84L825.3 616.7L825.8 617.39L826.3 616.83L826.8 617.21L827.3 616.92L827.8 617.26L828.3 617.34L828.8 616.9L829.3 617.32L829.8 616.86L830.3 617.34L830.8 617.4L831.3 618.09L831.8 618.12L832.3 617.49L832.8 617.45L833.3 617.37L833.8 617.64L834.3 617.51L834.8 617.62L835.3 617.74L835.8 617.88L836.3 617.8L836.8 617.8L837.3 618.06L837.8 618.15L838.3 618.15L838.8 618.15L839.3 618.15L839.8 618.15L840.3 618.15L840.8 618.15L841.3 618.15L841.8 618.15L842.3 618.15L842.8 618.15L843.3 618.15L843.8 618.15L844.3 618.15L844.8 618.15L845.3 618.15L845.8 618.15L846.3 618.15L846.8 618.15L847.3 618.15L847.8 618.15L848.3 618.15L848.8 618.15L848.8 618.95L848.3 618.95L847.8 618.95L847.3 618.95L846.8 618.95L846.3 618.95L845.8 618.95L845.3 618.95L844.8 618.95L844.3 618.95L843.8 618.95L843.3 618.95L842.8 618.95L842.3 618.95L841.8 618.95L841.3 618.95L840.8 618.95L840.3 618.95L839.8 618.95L839.3 618.95L838.8 618.95L838.3 618.95L837.8 618.95L837.3 619.04L836.8 619.01L836.3 619.39L835.8 619.22L835.3 619.44L834.8 619.61L834.3 619.28L833.8 619.32L833.3 619.83L832.8 619.81L832.3 619.49L831.8 618.98L831.3 619.06L830.8 619.65L830.3 619.69L829.8 619.71L829.3 620.16L828.8 620.3L828.3 619.7L827.8 619.77L827.3 620.09L826.8 619.88L826.3 619.67L825.8 620.29L825.3 620.2L824.8 620.39L824.3 619.98L823.8 620.22L823.3 620.05L822.8 620.03L822.3 620.25L821.8 620.04L821.3 620.09L820.8 620.25L820.3 620.2L819.8 620.08L819.3 619.77L818.8 620.06L818.3 620.25L817.8 620.43L817.3 619.91L816.8 620.25L816.3 619.97L815.8 620.29L815.3 620.19L814.8 620.37L814.3 620.5L813.8 619.86L813.3 619.94L812.8 620.08L812.3 620.56L811.8 619.92L811.3 620.04L810.8 620.62L810.3 620.58L809.8 620.57L809.3 620.55L808.8 620.65L808.3 620.24L807.8 620.35L807.3 620.44L806.8 620.06L806.3 620.65L805.8 620.23L805.3 620.65L804.8 620.26L804.3 620.26L803.8 620.31L803.3 620.29L802.8 619.97L802.3 620.38L801.8 619.93L801.3 620.78L800.8 620.06L800.3 620.41L799.8 620.3L799.3 620.35L798.8 619.99L798.3 620.45L797.8 621.31L797.3 621.59L796.8 620.51L796.3 620.38L795.8 620.26L795.3 620.64L794.8 620.38L794.3 620.43L793.8 620.76L793.3 620.14L792.8 620.11L792.3 620.59L791.8 620.24L791.3 620.43L790.8 620.8L790.3 620.11L789.8 620.13L789.3 620.39L788.8 620.18L788.3 620.56L787.8 620.77L787.3 619.55L786.8 618.95L786.3 619.49L785.8 620.32L785.3 620L784.8 620.71L784.3 621.12L783.8 620.5L783.3 620.34L782.8 620.27L782.3 621.33L781.8 621.13L781.3 621.04L780.8 620.83L780.3 620.65L779.8 621.06L779.3 620.41L778.8 621.54L778.3 620.8L777.8 620.62L777.3 621.48L776.8 620.72L776.3 620.95L775.8 618.95L775.3 618.95Z" fill="#4da3fb"/>
<path d="M849.6 618.15L850.1 618.15L850.6 617L851.1 615.89L851.6 615.62L852.1 615.85L852.6 616.04L853.1 616.4L853.6 615.52L854.1 615.72L854.6 616.32L855.1 616L855.6 616.02L856.1 616.68L856.6 615.74L857.1 616.19L857.6 616.89L858.1 615.89L858.6 616.54L859.1 616.62L859.6 616.58L860.1 616.76L860.6 617.43L861.1 617.71L861.6 617.84L862.1 616.85L862.6 616.21L863.1 616.51L863.6 616.48L864.1 616.31L864.6 616.92L865.1 616.16L865.6 616.69L866.1 616.83L866.6 616.93L867.1 616.67L867.6 616.49L868.1 616.37L868.6 616.79L869.1 617.12L869.6 616.82L870.1 617.06L870.6 616.59L871.1 616.33L871.6 616.44L872.1 615.18L872.6 616L873.1 616.72L873.6 616.8L874.1 616.64L874.6 616.74L875.1 616.79L875.6 616.82L876.1 617.19L876.6 617.16L877.1 617.11L877.6 616.33L878.1 616.81L878.6 616.78L879.1 616.59L879.6 616.62L880.1 616.67L880.6 617.11L881.1 616.71L881.6 616.7L882.1 616.54L882.6 616.57L883.1 616.89L883.6 616.66L884.1 617.24L884.6 616.63L885.1 616.46L885.6 616.73L886.1 616.8L886.6 617.14L887.1 617.24L887.6 617.14L888.1 616.5L888.6 616.94L889.1 616.76L889.6 616.99L890.1 616.89L890.6 617.05L891.1 616.84L891.6 616.87L892.1 616.67L892.6 617.31L893.1 617.3L893.6 617.17L894.1 616.78L894.6 617.16L895.1 617L895.6 617.19L896.1 617.14L896.6 617.03L897.1 617.04L897.6 616.89L898.1 616.81L898.6 616.83L899.1 616.69L899.6 617.38L900.1 616.82L900.6 617.2L901.1 616.9L901.6 617.25L902.1 617.34L902.6 616.89L903.1 617.31L903.6 616.79L904.1 617.07L904.6 616.94L905.1 617.73L905.6 617.6L906.1 618.15L906.6 617.87L907.1 617.39L907.6 617.57L908.1 617.43L908.6 617.54L909.1 617.67L909.6 617.81L910.1 617.67L910.6 617.58L911.1 617.74L911.6 618.04L912.1 618.1L912.6 618.15L913.1 618.15L913.6 618.15L914.1 618.15L914.6 618.15L915.1 618.15L915.6 618.15L916.1 618.15L916.6 618.15L917.1 618.15L917.6 618.15L918.1 618.15L918.6 618.15L919.1 618.15L919.6 618.15L920.1 618.15L920.6 618.15L921.1 618.15L921.6 618.15L922.1 618.15L922.6 618.15L923.1 618.15L923.6 618.15L923.6 618.95L923.1 618.95L922.6 618.95L922.1 618.95L921.6 618.95L921.1 618.95L920.6 618.95L920.1 618.95L919.6 618.95L919.1 618.95L918.6 618.95L918.1 618.95L917.6 618.95L917.1 618.95L916.6 618.95L916.1 618.95L915.6 618.95L915.1 618.95L914.6 618.95L914.1 618.95L913.6 618.95L913.1 618.95L912.6 618.95L912.1 619L911.6 619.08L911.1 619.22L910.6 619.15L910.1 619.53L909.6 619.28L909.1 619.52L908.6 619.7L908.1 619.34L907.6 619.38L907.1 619.8L906.6 619.33L906.1 618.95L905.6 619.39L905.1 619.47L904.6 620.09L904.1 619.94L903.6 619.76L903.1 620.17L902.6 620.31L902.1 619.71L901.6 619.78L901.1 620.1L900.6 619.89L900.1 619.67L899.6 620.3L899.1 620.21L898.6 620.4L898.1 619.99L897.6 620.23L897.1 620.06L896.6 620.04L896.1 620.26L895.6 620.05L895.1 620.11L894.6 620.26L894.1 620.21L893.6 620.09L893.1 619.78L892.6 620.07L892.1 620.26L891.6 620.45L891.1 619.92L890.6 620.26L890.1 619.98L889.6 620.31L889.1 620.2L888.6 620.39L888.1 620.51L887.6 619.87L887.1 619.95L886.6 620.09L886.1 620.57L885.6 619.93L885.1 620.05L884.6 620.63L884.1 620.6L883.6 620.58L883.1 620.57L882.6 620.66L882.1 620.26L881.6 620.36L881.1 620.45L880.6 620.06L880.1 620.66L879.6 620.24L879.1 620.66L878.6 620.27L878.1 620.27L877.6 620.32L877.1 620.3L876.6 619.98L876.1 620.39L875.6 619.94L875.1 620.79L874.6 620.07L874.1 620.42L873.6 620.31L873.1 620.36L872.6 620.44L872.1 621.38L871.6 621.01L871.1 620.58L870.6 620.33L870.1 620.39L869.6 620.27L869.1 620.65L868.6 620.39L868.1 620.44L867.6 620.78L867.1 620.15L866.6 620.11L866.1 620.6L865.6 620.25L865.1 620.44L864.6 620.81L864.1 620.12L863.6 620.14L863.1 620.4L862.6 620.19L862.1 620.15L861.6 619.37L861.1 619.22L860.6 619.72L860.1 620.57L859.6 620.14L859.1 620.73L858.6 621.14L858.1 620.52L857.6 620.36L857.1 620.28L856.6 621.35L856.1 621.15L855.6 621.06L855.1 620.85L854.6 620.67L854.1 621.07L853.6 620.43L853.1 621.56L852.6 620.82L852.1 620.63L851.6 621.5L851.1 620.74L850.6 619.99L850.1 618.95L849.6 618.95Z" fill="#2f79cc"/>
<text x="536" y="600.65" font-size="7.5" fill="#57a6f2" textLength="53.2" lengthAdjust="spacingAndGlyphs" >Backgr…nd Vox</text>
<text x="621" y="600.65" font-size="7.5" fill="#57a6f2" textLength="55.2" lengthAdjust="spacingAndGlyphs" >Background Vox</text>
<text x="780.2" y="600.65" font-size="7.5" fill="#57a6f2" textLength="55.8" lengthAdjust="spacingAndGlyphs" >Background Vox</text>
<rect x="32" y="479.65" width="292.5" height="53.4" fill="#48494b"/>
<path d="M32 106.5H324.5M32 159.25H324.5M32 212.65H324.5M32 266.05H324.5M32 319.45H324.5M32 372.85H324.5M32 426.25H324.5M32 479.65H324.5M32 533.05H324.5M32 586.45H324.5M32 640.3H324.5" stroke="#1c1e1f" stroke-width="1" fill="none"/>
<rect x="321" y="393" width="1.6" height="14.5" rx="0.8" fill="#5a5c5e"/>
<text x="43.6" y="122.95" font-size="9" fill="#e4e4e4" textLength="36" lengthAdjust="spacingAndGlyphs" >Drummer</text>
<g transform="translate(42.6 134.15)"><path d="M0.5 3.8H4.3L9.7 0V12.8L4.3 9H0.5Z" fill="#c2c2c2"/><path d="M-0.3 0.3L12.4 13.2" stroke="#242628" stroke-width="2.6" fill="none"/><path d="M-0.6 0.6L12.2 13.6" stroke="#dcdcdc" stroke-width="1.1" fill="none"/></g>
<g transform="translate(71 133.85)"><path d="M0.9 11.2V7.2A6.6 6.6 0 0 1 14.1 7.2V11.2" stroke="#dedede" stroke-width="1.1" fill="none"/><rect x="2.1" y="7.7" width="2.9" height="5.8" rx="0.9" fill="#dedede"/><rect x="10" y="7.7" width="2.9" height="5.8" rx="0.9" fill="#dedede"/></g>
<rect x="164.2" y="137" width="94.2" height="8" rx="4" fill="#1b1d1e"/>
<rect x="166.6" y="138.55" width="64.8" height="1.5" fill="#3ccf4e"/>
<rect x="166.6" y="141.95" width="64.8" height="1.5" fill="#3ccf4e"/>
<circle cx="217.2" cy="141" r="6" fill="#9a9a9a" fill-opacity="0.5" stroke="#d8d8d8" stroke-opacity="0.85" stroke-width="0.9"/>
<text x="43.6" y="176.44" font-size="9" fill="#e4e4e4" textLength="64.6" lengthAdjust="spacingAndGlyphs" >Basse électrique</text>
<g transform="translate(42.6 187.64)"><path d="M0.5 3.8H4.3L9.7 0V12.8L4.3 9H0.5Z" fill="#c2c2c2"/><path d="M-0.3 0.3L12.4 13.2" stroke="#242628" stroke-width="2.6" fill="none"/><path d="M-0.6 0.6L12.2 13.6" stroke="#dcdcdc" stroke-width="1.1" fill="none"/></g>
<g transform="translate(71 187.34)"><path d="M0.9 11.2V7.2A6.6 6.6 0 0 1 14.1 7.2V11.2" stroke="#dedede" stroke-width="1.1" fill="none"/><rect x="2.1" y="7.7" width="2.9" height="5.8" rx="0.9" fill="#dedede"/><rect x="10" y="7.7" width="2.9" height="5.8" rx="0.9" fill="#dedede"/></g>
<circle cx="108.3" cy="194.44" r="5" fill="#bdbdbd"/>
<g transform="translate(138.7 194.09)"><circle cx="0" cy="-4" r="3.4" fill="#d4d4d4"/><path d="M-3.8 1.2Q0 3.9 3.8 1.2" stroke="#dedede" stroke-width="1.15" fill="none"/><path d="M-6.9 3.4Q0 8.6 6.9 3.4" stroke="#dedede" stroke-width="1.15" fill="none"/></g>
<rect x="164.2" y="190.49" width="94.2" height="8" rx="4" fill="#1b1d1e"/>
<rect x="166.6" y="192.04" width="61.4" height="1.5" fill="#3ccf4e"/>
<rect x="166.6" y="195.44" width="61.4" height="1.5" fill="#3ccf4e"/>
<circle cx="206.5" cy="194.49" r="6" fill="#9a9a9a" fill-opacity="0.5" stroke="#d8d8d8" stroke-opacity="0.85" stroke-width="0.9"/>
<text x="43.6" y="229.93" font-size="9" fill="#e4e4e4" textLength="21.6" lengthAdjust="spacingAndGlyphs" >Piano</text>
<g transform="translate(42.6 241.13)"><path d="M0.5 3.8H4.3L9.7 0V12.8L4.3 9H0.5Z" fill="#c2c2c2"/><path d="M-0.3 0.3L12.4 13.2" stroke="#242628" stroke-width="2.6" fill="none"/><path d="M-0.6 0.6L12.2 13.6" stroke="#dcdcdc" stroke-width="1.1" fill="none"/></g>
<g transform="translate(71 240.83)"><path d="M0.9 11.2V7.2A6.6 6.6 0 0 1 14.1 7.2V11.2" stroke="#dedede" stroke-width="1.1" fill="none"/><rect x="2.1" y="7.7" width="2.9" height="5.8" rx="0.9" fill="#dedede"/><rect x="10" y="7.7" width="2.9" height="5.8" rx="0.9" fill="#dedede"/></g>
<circle cx="108.3" cy="247.93" r="5" fill="#bdbdbd"/>
<rect x="164.2" y="243.98" width="94.2" height="8" rx="4" fill="#1b1d1e"/>
<rect x="166.6" y="245.53" width="44.4" height="1.5" fill="#3ccf4e"/>
<rect x="166.6" y="248.93" width="40.2" height="1.5" fill="#3ccf4e"/>
<circle cx="195.1" cy="247.98" r="6" fill="#9a9a9a" fill-opacity="0.5" stroke="#d8d8d8" stroke-opacity="0.85" stroke-width="0.9"/>
<text x="43.6" y="283.42" font-size="9" fill="#e4e4e4" textLength="27" lengthAdjust="spacingAndGlyphs" >Synthé</text>
<g transform="translate(42.6 294.62)"><path d="M0.5 3.8H4.3L9.7 0V12.8L4.3 9H0.5Z" fill="#c2c2c2"/><path d="M-0.3 0.3L12.4 13.2" stroke="#242628" stroke-width="2.6" fill="none"/><path d="M-0.6 0.6L12.2 13.6" stroke="#dcdcdc" stroke-width="1.1" fill="none"/></g>
<g transform="translate(71 294.32)"><path d="M0.9 11.2V7.2A6.6 6.6 0 0 1 14.1 7.2V11.2" stroke="#dedede" stroke-width="1.1" fill="none"/><rect x="2.1" y="7.7" width="2.9" height="5.8" rx="0.9" fill="#dedede"/><rect x="10" y="7.7" width="2.9" height="5.8" rx="0.9" fill="#dedede"/></g>
<circle cx="108.3" cy="301.42" r="5" fill="#bdbdbd"/>
<rect x="164.2" y="297.47" width="94.2" height="8" rx="4" fill="#1b1d1e"/>
<rect x="166.6" y="299.02" width="56.7" height="1.5" fill="#3ccf4e"/>
<rect x="166.6" y="302.42" width="56.7" height="1.5" fill="#3ccf4e"/>
<circle cx="208.9" cy="301.47" r="6" fill="#9a9a9a" fill-opacity="0.5" stroke="#d8d8d8" stroke-opacity="0.85" stroke-width="0.9"/>
<text x="43.6" y="336.91" font-size="9" fill="#e4e4e4" textLength="28" lengthAdjust="spacingAndGlyphs" >Cordes</text>
<g transform="translate(42.6 348.11)"><path d="M0.5 3.8H4.3L9.7 0V12.8L4.3 9H0.5Z" fill="#c2c2c2"/><path d="M-0.3 0.3L12.4 13.2" stroke="#242628" stroke-width="2.6" fill="none"/><path d="M-0.6 0.6L12.2 13.6" stroke="#dcdcdc" stroke-width="1.1" fill="none"/></g>
<g transform="translate(71 347.81)"><path d="M0.9 11.2V7.2A6.6 6.6 0 0 1 14.1 7.2V11.2" stroke="#dedede" stroke-width="1.1" fill="none"/><rect x="2.1" y="7.7" width="2.9" height="5.8" rx="0.9" fill="#dedede"/><rect x="10" y="7.7" width="2.9" height="5.8" rx="0.9" fill="#dedede"/></g>
<circle cx="108.3" cy="354.91" r="5" fill="#bdbdbd"/>
<rect x="164.2" y="350.96" width="94.2" height="8" rx="4" fill="#1b1d1e"/>
<circle cx="208.4" cy="354.96" r="6" fill="#9a9a9a" fill-opacity="0.5" stroke="#d8d8d8" stroke-opacity="0.85" stroke-width="0.9"/>
<text x="43.6" y="390.4" font-size="9" fill="#e4e4e4" textLength="37.7" lengthAdjust="spacingAndGlyphs" >My Guitar</text>
<g transform="translate(42.6 401.6)"><path d="M0.5 3.8H4.3L9.7 0V12.8L4.3 9H0.5Z" fill="#c2c2c2"/><path d="M-0.3 0.3L12.4 13.2" stroke="#242628" stroke-width="2.6" fill="none"/><path d="M-0.6 0.6L12.2 13.6" stroke="#dcdcdc" stroke-width="1.1" fill="none"/></g>
<g transform="translate(71 401.3)"><path d="M0.9 11.2V7.2A6.6 6.6 0 0 1 14.1 7.2V11.2" stroke="#dedede" stroke-width="1.1" fill="none"/><rect x="2.1" y="7.7" width="2.9" height="5.8" rx="0.9" fill="#dedede"/><rect x="10" y="7.7" width="2.9" height="5.8" rx="0.9" fill="#dedede"/></g>
<circle cx="108.3" cy="408.4" r="5" fill="#bdbdbd"/>
<g transform="translate(138.7 408.05)"><circle cx="0" cy="-4" r="3.4" fill="#d4d4d4"/><path d="M-3.8 1.2Q0 3.9 3.8 1.2" stroke="#dedede" stroke-width="1.15" fill="none"/><path d="M-6.9 3.4Q0 8.6 6.9 3.4" stroke="#dedede" stroke-width="1.15" fill="none"/></g>
<rect x="164.2" y="404.45" width="94.2" height="8" rx="4" fill="#1b1d1e"/>
<rect x="166.6" y="406" width="52.6" height="1.5" fill="#3ccf4e"/>
<rect x="166.6" y="409.4" width="52.6" height="1.5" fill="#3ccf4e"/>
<circle cx="203.8" cy="408.45" r="6" fill="#9a9a9a" fill-opacity="0.5" stroke="#d8d8d8" stroke-opacity="0.85" stroke-width="0.9"/>
<text x="43.6" y="443.89" font-size="9" fill="#e4e4e4" textLength="47" lengthAdjust="spacingAndGlyphs" >Lead Vocals</text>
<g transform="translate(42.6 455.09)"><path d="M0.5 3.8H4.3L9.7 0V12.8L4.3 9H0.5Z" fill="#c2c2c2"/><path d="M-0.3 0.3L12.4 13.2" stroke="#242628" stroke-width="2.6" fill="none"/><path d="M-0.6 0.6L12.2 13.6" stroke="#dcdcdc" stroke-width="1.1" fill="none"/></g>
<g transform="translate(71 454.79)"><path d="M0.9 11.2V7.2A6.6 6.6 0 0 1 14.1 7.2V11.2" stroke="#dedede" stroke-width="1.1" fill="none"/><rect x="2.1" y="7.7" width="2.9" height="5.8" rx="0.9" fill="#dedede"/><rect x="10" y="7.7" width="2.9" height="5.8" rx="0.9" fill="#dedede"/></g>
<circle cx="108.3" cy="461.89" r="5" fill="#bdbdbd"/>
<g transform="translate(138.7 461.54)"><circle cx="0" cy="-4" r="3.4" fill="#d4d4d4"/><path d="M-3.8 1.2Q0 3.9 3.8 1.2" stroke="#dedede" stroke-width="1.15" fill="none"/><path d="M-6.9 3.4Q0 8.6 6.9 3.4" stroke="#dedede" stroke-width="1.15" fill="none"/></g>
<rect x="164.2" y="457.94" width="94.2" height="8" rx="4" fill="#1b1d1e"/>
<rect x="166.6" y="459.49" width="61.1" height="1.5" fill="#3ccf4e"/>
<rect x="166.6" y="462.89" width="61.1" height="1.5" fill="#3ccf4e"/>
<circle cx="205.5" cy="461.94" r="6" fill="#9a9a9a" fill-opacity="0.5" stroke="#d8d8d8" stroke-opacity="0.85" stroke-width="0.9"/>
<text x="43.6" y="497.38" font-size="9" fill="#f2f2f2" textLength="46" lengthAdjust="spacingAndGlyphs" >Tambourine</text>
<g transform="translate(42.6 508.58)"><path d="M0.5 3.8H4.3L9.7 0V12.8L4.3 9H0.5Z" fill="#cdcdcd"/><path d="M-0.3 0.3L12.4 13.2" stroke="#48494b" stroke-width="2.6" fill="none"/><path d="M-0.6 0.6L12.2 13.6" stroke="#e6e6e6" stroke-width="1.1" fill="none"/></g>
<g transform="translate(71 508.28)"><path d="M0.9 11.2V7.2A6.6 6.6 0 0 1 14.1 7.2V11.2" stroke="#dedede" stroke-width="1.1" fill="none"/><rect x="2.1" y="7.7" width="2.9" height="5.8" rx="0.9" fill="#dedede"/><rect x="10" y="7.7" width="2.9" height="5.8" rx="0.9" fill="#dedede"/></g>
<circle cx="108.3" cy="515.38" r="5" fill="#ff3b30"/>
<g transform="translate(138.7 515.03)"><circle cx="0" cy="-4" r="3.4" fill="#d4d4d4"/><path d="M-3.8 1.2Q0 3.9 3.8 1.2" stroke="#dedede" stroke-width="1.15" fill="none"/><path d="M-6.9 3.4Q0 8.6 6.9 3.4" stroke="#dedede" stroke-width="1.15" fill="none"/></g>
<rect x="164.2" y="511.43" width="94.2" height="8" rx="4" fill="#38393b"/>
<rect x="166.6" y="512.98" width="31.7" height="1.5" fill="#3ccf4e"/>
<rect x="166.6" y="516.38" width="28.3" height="1.5" fill="#3ccf4e"/>
<circle cx="204.4" cy="515.43" r="6" fill="#9a9a9a" fill-opacity="0.5" stroke="#d8d8d8" stroke-opacity="0.85" stroke-width="0.9"/>
<text x="43.6" y="550.87" font-size="9" fill="#e4e4e4" textLength="51.5" lengthAdjust="spacingAndGlyphs" >Claquements</text>
<g transform="translate(42.6 562.07)"><path d="M0.5 3.8H4.3L9.7 0V12.8L4.3 9H0.5Z" fill="#c2c2c2"/><path d="M-0.3 0.3L12.4 13.2" stroke="#242628" stroke-width="2.6" fill="none"/><path d="M-0.6 0.6L12.2 13.6" stroke="#dcdcdc" stroke-width="1.1" fill="none"/></g>
<g transform="translate(71 561.77)"><path d="M0.9 11.2V7.2A6.6 6.6 0 0 1 14.1 7.2V11.2" stroke="#dedede" stroke-width="1.1" fill="none"/><rect x="2.1" y="7.7" width="2.9" height="5.8" rx="0.9" fill="#dedede"/><rect x="10" y="7.7" width="2.9" height="5.8" rx="0.9" fill="#dedede"/></g>
<circle cx="108.3" cy="568.87" r="5" fill="#bdbdbd"/>
<g transform="translate(138.7 568.52)"><circle cx="0" cy="-4" r="3.4" fill="#d4d4d4"/><path d="M-3.8 1.2Q0 3.9 3.8 1.2" stroke="#dedede" stroke-width="1.15" fill="none"/><path d="M-6.9 3.4Q0 8.6 6.9 3.4" stroke="#dedede" stroke-width="1.15" fill="none"/></g>
<rect x="164.2" y="564.92" width="94.2" height="8" rx="4" fill="#1b1d1e"/>
<rect x="166.6" y="566.47" width="28.4" height="1.5" fill="#3ccf4e"/>
<rect x="166.6" y="569.87" width="28.4" height="1.5" fill="#3ccf4e"/>
<circle cx="209.5" cy="568.92" r="6" fill="#9a9a9a" fill-opacity="0.5" stroke="#d8d8d8" stroke-opacity="0.85" stroke-width="0.9"/>
<text x="43.6" y="604.36" font-size="9" fill="#e4e4e4" textLength="63.5" lengthAdjust="spacingAndGlyphs" >Background Vox</text>
<g transform="translate(42.6 615.56)"><path d="M0.5 3.8H4.3L9.7 0V12.8L4.3 9H0.5Z" fill="#c2c2c2"/><path d="M-0.3 0.3L12.4 13.2" stroke="#242628" stroke-width="2.6" fill="none"/><path d="M-0.6 0.6L12.2 13.6" stroke="#dcdcdc" stroke-width="1.1" fill="none"/></g>
<g transform="translate(71 615.26)"><path d="M0.9 11.2V7.2A6.6 6.6 0 0 1 14.1 7.2V11.2" stroke="#dedede" stroke-width="1.1" fill="none"/><rect x="2.1" y="7.7" width="2.9" height="5.8" rx="0.9" fill="#dedede"/><rect x="10" y="7.7" width="2.9" height="5.8" rx="0.9" fill="#dedede"/></g>
<circle cx="108.3" cy="622.36" r="5" fill="#bdbdbd"/>
<g transform="translate(138.7 622.01)"><circle cx="0" cy="-4" r="3.4" fill="#d4d4d4"/><path d="M-3.8 1.2Q0 3.9 3.8 1.2" stroke="#dedede" stroke-width="1.15" fill="none"/><path d="M-6.9 3.4Q0 8.6 6.9 3.4" stroke="#dedede" stroke-width="1.15" fill="none"/></g>
<rect x="164.2" y="618.41" width="94.2" height="8" rx="4" fill="#1b1d1e"/>
<rect x="166.6" y="619.96" width="40" height="1.5" fill="#3ccf4e"/>
<rect x="166.6" y="623.36" width="44" height="1.5" fill="#3ccf4e"/>
<circle cx="214.8" cy="622.41" r="6" fill="#9a9a9a" fill-opacity="0.5" stroke="#d8d8d8" stroke-opacity="0.85" stroke-width="0.9"/>
<path d="M171.8 673H185.2M178.5 666.3V679.7" stroke="#dcdcdc" stroke-width="1.1" fill="none"/>
<rect x="271.2" y="492.98" width="39.4" height="29" rx="2.2" fill="url(#wavebox)"/>
<path d="M275 507.18L277.5 507.18L280.2 512.18L283.6 502.58L286.6 516.18L290.3 497.88L294 517.18L297.6 501.58L300.8 512.78L303.6 506.18L306.6 506.18" stroke="#41a8f7" stroke-width="1.3" fill="none" stroke-linejoin="miter"/>
<rect x="271.2" y="546.47" width="39.4" height="29" rx="2.2" fill="url(#wavebox)"/>
<path d="M275 560.67L277.5 560.67L280.2 565.67L283.6 556.07L286.6 569.67L290.3 551.37L294 570.67L297.6 555.07L300.8 566.27L303.6 559.67L306.6 559.67" stroke="#41a8f7" stroke-width="1.3" fill="none" stroke-linejoin="miter"/>
<rect x="271.2" y="599.96" width="39.4" height="29" rx="2.2" fill="url(#wavebox)"/>
<path d="M275 614.16L277.5 614.16L280.2 619.16L283.6 609.56L286.6 623.16L290.3 604.86L294 624.16L297.6 608.56L300.8 619.76L303.6 613.16L306.6 613.16" stroke="#41a8f7" stroke-width="1.3" fill="none" stroke-linejoin="miter"/>
<g transform="translate(266 112)">
<ellipse cx="26" cy="32.2" rx="19" ry="1.6" fill="#000" opacity="0.35"/>
<path d="M9.8 14.6V26M9.8 22L5 28.6M9.8 22L13 29.2M15.5 11.5V27M15.5 24L9.6 30.6M15.5 24L18.6 32M15.5 11.5L19 8.6M39 11.4V26M39 24L32.6 31.6M39 24L43.4 33M35 8L39 11.4M32.6 26V32.2M7.4 16H9.8" stroke="#8c8c8c" stroke-width="0.75" fill="none"/>
<ellipse cx="19" cy="8.4" rx="4.9" ry="0.75" fill="#8d6c28" transform="rotate(9 19 8.4)"/>
<ellipse cx="35" cy="7.9" rx="5.4" ry="0.75" fill="#8d6c28" transform="rotate(-14 35 7.9)"/>
<ellipse cx="11.7" cy="12.5" rx="4.6" ry="0.65" fill="#c4a248"/>
<ellipse cx="39.6" cy="12.6" rx="3.5" ry="0.6" fill="#c4a248"/>
<rect x="12.8" y="14" width="8.1" height="7.3" rx="0.8" fill="#d8a660"/>
<rect x="14.4" y="14" width="1.2" height="7.3" fill="#e8c083"/><rect x="17.6" y="14" width="1.2" height="7.3" fill="#e8c083"/>
<ellipse cx="16.85" cy="14.1" rx="4.05" ry="0.95" fill="#e9e6de"/>
<rect x="26.9" y="12.7" width="6.8" height="4.2" rx="0.8" fill="#dcae6c"/><ellipse cx="30.3" cy="12.8" rx="3.4" ry="0.7" fill="#ece8de"/>
<rect x="32.7" y="15" width="4.5" height="3.7" rx="0.7" fill="#d2a05c"/><ellipse cx="34.95" cy="15.1" rx="2.25" ry="0.5" fill="#e6e2d8"/>
<circle cx="25.8" cy="24.7" r="6.3" fill="#b08a52"/><circle cx="25.6" cy="24.9" r="5.6" fill="#dadada"/>
<rect x="21.8" y="21.9" width="7" height="1" rx="0.3" fill="#2e2e2e"/>
</g>
<defs><radialGradient id="sunb" cx="0.5" cy="0.5" r="0.5"><stop offset="0" stop-color="#f9c648"/><stop offset="0.55" stop-color="#ea861c"/><stop offset="0.85" stop-color="#8a3208"/><stop offset="1" stop-color="#2e1204"/></radialGradient>
<radialGradient id="wood" cx="0.45" cy="0.5" r="0.55"><stop offset="0" stop-color="#dc621a"/><stop offset="0.6" stop-color="#ac420e"/><stop offset="1" stop-color="#4a1604"/></radialGradient></defs>
<g transform="translate(280.95 194.55) rotate(44)">
<rect x="-0.85" y="-32.5" width="1.7" height="36" fill="#6b3d2a"/>
<path d="M-1.5 -32.3H1.5L2.3 -39.4H-2.3Z" fill="#2d3942"/>
<path d="M-3 -34H3M-3 -37.4H3" stroke="#8e989e" stroke-width="0.55"/>
<path d="M0 -9.6C-3.4 -9.6 -4.9 -6.8 -4.3 -4.2C-3.9 -2.4 -3 -2 -3.4 -0.4C-3.8 1 -6.3 1.8 -6.3 5.6C-6.3 9.4 -3.4 11.6 0 11.6C3.4 11.6 6.3 9.4 6.3 5.6C6.3 1.8 3.8 1 3.4 -0.4C3 -2 3.9 -2.4 4.3 -4.2C4.9 -6.8 3.4 -9.6 0 -9.6Z" fill="url(#sunb)"/>
<path d="M1 -8.8C3.4 -8.6 4.4 -6.4 3.8 -4.2C3.4 -2.6 2.6 -2 2.9 -0.4C3.1 0.6 4.2 1.4 4.6 2.6L1.8 2.2L1 -2Z" fill="#ebe6d6"/>
<rect x="-0.85" y="-10" width="1.7" height="9" fill="#6b3d2a"/>
<rect x="-1.6" y="-4.6" width="3.2" height="1.5" fill="#9aa4ac"/><rect x="-1.6" y="1.6" width="3.2" height="1.5" fill="#9aa4ac"/>
<rect x="-1.4" y="5.4" width="2.8" height="1" fill="#8a949c"/>
<rect x="-1.8" y="8.4" width="3.6" height="1.3" fill="#efe6c8"/>
</g>
<g transform="translate(269 216.6) scale(1.08 1.06)">
<path d="M8 14.5L24.5 2.5L27.8 3.2L31 8L30.5 14L13 17Z" fill="#0c0c0c"/>
<path d="M9 14L24.3 2.9" stroke="#c59a3a" stroke-width="1" fill="none"/>
<path d="M20 15L33 12.6L32.6 16.6L20 18.6Z" fill="#7a3a18"/>
<path d="M4 20L10 15L20 14.2L33.5 13.8V22.4L25 26.6L4 23.4Z" fill="#121212"/>
<path d="M4 20L24.6 23L25 26.6L4 23.4Z" fill="#1e1e1e"/>
<path d="M4.6 20.6L24.4 23.5" stroke="#e8e8e8" stroke-width="1" fill="none"/>
<path d="M11 15.8L17.6 14.6L18.6 19.6L11.6 19.4Z" fill="#3a3a3c"/>
<path d="M8.6 24V32M17.2 25.6V33.4M25.2 26.6V37.4M31.6 22.6V31" stroke="#161616" stroke-width="1.6" fill="none"/>
<path d="M8.6 32.4V33.4M25.2 37.6V38.6M31.6 31.2V32.2M17.2 33.6V34.4" stroke="#c59a3a" stroke-width="1.6" fill="none"/>
</g>
<g transform="translate(270 272)">
<path d="M14 18L23 37.5M23.6 17L8.4 36" stroke="#0e0e0e" stroke-width="1.2" fill="none"/>
<path d="M5 35.6L12 33.4M19 39L27 35.6" stroke="#111" stroke-width="1" fill="none"/>
<g transform="translate(0 -4.6)">
<path d="M12.4 5.4L34.6 8.4L34 17.4L11.8 13.2Z" fill="#b5561c"/>
<path d="M13 6.6L33.8 9.4L33.4 16L12.6 12.4Z" fill="#3c4046"/>
<path d="M14 8L33 10.6M13.8 10.4L33 13.2" stroke="#9aa0a8" stroke-width="1.1" stroke-dasharray="1.2 1.1" fill="none"/>
<path d="M4 14.6L11.8 13.2L36.8 17L37.4 20.4L29 23.8L4.4 18Z" fill="#8e4418"/>
<path d="M4.4 18L29 23.8L37.4 20.4L37.2 22L29 25.6L4.4 19.8Z" fill="#5a260c"/>
<path d="M6.6 15.6L29 20.4" stroke="#d2d2d2" stroke-width="2" fill="none"/>
<path d="M6.4 16.8L28.8 21.7" stroke="#222" stroke-width="0.5" fill="none"/>
</g></g>
<g transform="translate(274.7 358.6) rotate(9) scale(6.3)"><path d="M-0.04 -0.9L-0.045 -2.12H0.045L0.04 -0.9Z" fill="#2a1408"/><circle cx="0.03" cy="-2.12" r="0.065" fill="#a8481a"/><path d="M0 -1C-0.42 -1 -0.5 -0.6 -0.45 -0.38C-0.4 -0.2 -0.28 -0.16 -0.3 0C-0.32 0.12 -0.56 0.2 -0.56 0.56C-0.56 0.88 -0.3 1 0 1C0.3 1 0.56 0.88 0.56 0.56C0.56 0.2 0.32 0.12 0.3 0C0.28 -0.16 0.4 -0.2 0.45 -0.38C0.5 -0.6 0.42 -1 0 -1Z" fill="url(#wood)"/><path d="M-0.045 -1V0.25H0.045V-1Z" fill="#24120a"/><path d="M-0.05 0.3H0.05V0.85H-0.05Z" fill="#1c0e06"/><path d="M-0.16 0.22H0.16" stroke="#d8b070" stroke-width="0.05"/><path d="M0 1V1.12" stroke="#9a9a9a" stroke-width="0.05"/></g>
<g transform="translate(281.7 358.0) rotate(9) scale(6.6)"><path d="M-0.04 -0.9L-0.045 -2.1799999999999997H0.045L0.04 -0.9Z" fill="#2a1408"/><circle cx="0.03" cy="-2.1799999999999997" r="0.065" fill="#a8481a"/><path d="M0 -1C-0.42 -1 -0.5 -0.6 -0.45 -0.38C-0.4 -0.2 -0.28 -0.16 -0.3 0C-0.32 0.12 -0.56 0.2 -0.56 0.56C-0.56 0.88 -0.3 1 0 1C0.3 1 0.56 0.88 0.56 0.56C0.56 0.2 0.32 0.12 0.3 0C0.28 -0.16 0.4 -0.2 0.45 -0.38C0.5 -0.6 0.42 -1 0 -1Z" fill="url(#wood)"/><path d="M-0.045 -1V0.25H0.045V-1Z" fill="#24120a"/><path d="M-0.05 0.3H0.05V0.85H-0.05Z" fill="#1c0e06"/><path d="M-0.16 0.22H0.16" stroke="#d8b070" stroke-width="0.05"/><path d="M0 1V1.12" stroke="#9a9a9a" stroke-width="0.05"/></g>
<g transform="translate(290.4 351.9) rotate(9) scale(10.1)"><path d="M-0.04 -0.9L-0.045 -2.06H0.045L0.04 -0.9Z" fill="#2a1408"/><circle cx="0.03" cy="-2.06" r="0.065" fill="#a8481a"/><path d="M0 -1C-0.42 -1 -0.5 -0.6 -0.45 -0.38C-0.4 -0.2 -0.28 -0.16 -0.3 0C-0.32 0.12 -0.56 0.2 -0.56 0.56C-0.56 0.88 -0.3 1 0 1C0.3 1 0.56 0.88 0.56 0.56C0.56 0.2 0.32 0.12 0.3 0C0.28 -0.16 0.4 -0.2 0.45 -0.38C0.5 -0.6 0.42 -1 0 -1Z" fill="url(#wood)"/><path d="M-0.045 -1V0.25H0.045V-1Z" fill="#24120a"/><path d="M-0.05 0.3H0.05V0.85H-0.05Z" fill="#1c0e06"/><path d="M-0.16 0.22H0.16" stroke="#d8b070" stroke-width="0.05"/><path d="M0 1V1.12" stroke="#9a9a9a" stroke-width="0.05"/></g>
<g transform="translate(303.0 350.0) rotate(8) scale(13.7)"><path d="M-0.04 -0.9L-0.045 -1.8199999999999998H0.045L0.04 -0.9Z" fill="#2a1408"/><circle cx="0.03" cy="-1.8199999999999998" r="0.065" fill="#a8481a"/><path d="M0 -1C-0.42 -1 -0.5 -0.6 -0.45 -0.38C-0.4 -0.2 -0.28 -0.16 -0.3 0C-0.32 0.12 -0.56 0.2 -0.56 0.56C-0.56 0.88 -0.3 1 0 1C0.3 1 0.56 0.88 0.56 0.56C0.56 0.2 0.32 0.12 0.3 0C0.28 -0.16 0.4 -0.2 0.45 -0.38C0.5 -0.6 0.42 -1 0 -1Z" fill="url(#wood)"/><path d="M-0.045 -1V0.25H0.045V-1Z" fill="#24120a"/><path d="M-0.05 0.3H0.05V0.85H-0.05Z" fill="#1c0e06"/><path d="M-0.16 0.22H0.16" stroke="#d8b070" stroke-width="0.05"/><path d="M0 1V1.12" stroke="#9a9a9a" stroke-width="0.05"/></g>
<g transform="translate(270 378.6) scale(1.03 0.99)">
<path d="M4 4.6L5.4 3.2H8.6L9.6 4.2M17 5L18 4H22.6L23.6 5.2M33.4 6L34.2 5H37.4L38.2 6.4" stroke="#0c0c0c" stroke-width="0.9" fill="none"/>
<path d="M0.6 4.6L37 6.2L40.8 7.6L40.4 35.6L37 38.6L1 34.4Z" fill="#161616"/>
<path d="M37 6.2L40.8 7.6L40.4 35.6L37 38.6Z" fill="#2c2c2c"/>
<path d="M1.2 6L36.6 7.6L36.6 15.6L1.2 13.4Z" fill="#101010"/>
<path d="M1.2 13.6L36.6 15.8" stroke="#b89a4a" stroke-width="0.6"/>
<path d="M1.6 14.4L36.4 16.6L36.4 35.8L1.6 32.4Z" fill="#5a3c37"/>
<path d="M1.6 14.4L36.4 16.6L36.4 35.8L1.6 32.4Z" fill="none" stroke="#7a5a52" stroke-width="0.5" stroke-dasharray="0.9 0.9"/>
<path d="M1.6 18L36.4 20.4M1.6 22L36.4 24.6M1.6 26L36.4 28.8M1.6 30L36.4 33" stroke="#7c5a52" stroke-width="1.4" stroke-dasharray="0.9 0.9" stroke-opacity="0.7" fill="none"/>
<path d="M1.2 32.6L36.8 36.2L36.8 38.2L1.2 34.4Z" fill="#222"/>
<ellipse cx="5.4" cy="9.6" rx="1.7" ry="1.3" fill="#d8b84a"/><ellipse cx="8.6" cy="9.8" rx="1.7" ry="1.3" fill="#d8b84a"/>
</g>
<g transform="translate(270 430)">
<path d="M14.2 22.2L12.6 40.6L16.4 38M27 22.2L28.6 40.6L24.8 38M12.6 40.6L18 32M28.6 40.6L23 32M14.2 22.2L17.4 27.4M27 22.2L23.6 27.4" stroke="#b9bcb4" stroke-width="0.7" fill="none"/>
<path d="M12 31.2H29.4" stroke="#c8cac4" stroke-width="0.6"/>
<rect x="16.4" y="3" width="8.8" height="11" rx="1.4" fill="#7c7c7c"/>
<rect x="17.2" y="3.8" width="7.2" height="9.6" rx="1" fill="#6a6a6a"/>
<rect x="16.6" y="13.6" width="8.4" height="25" rx="1.6" fill="#c9ccc6"/>
<rect x="18.6" y="13.6" width="2" height="25" fill="#eef0ea"/>
<rect x="23.2" y="13.6" width="1.8" height="25" fill="#8e918a"/>
<rect x="16.6" y="15.6" width="8.4" height="1.2" fill="#8a8c86"/>
<rect x="17" y="38" width="7.6" height="1.8" rx="0.8" fill="#9a9c96"/>
<path d="M18 26L23.6 32M23.6 26L18 32" stroke="#9a9c96" stroke-width="0.6"/>
</g>
<text x="44.2" y="45.7" font-size="8.6" fill="#f0f0f0" textLength="21.6" lengthAdjust="spacingAndGlyphs" stroke="#f0f0f0" stroke-width="0.28">09:41</text>
<text x="72.3" y="45.7" font-size="8.6" fill="#f0f0f0" textLength="37.5" lengthAdjust="spacingAndGlyphs" stroke="#f0f0f0" stroke-width="0.28">Mar. 1 avr.</text>
<circle cx="855" cy="42.75" r="2.5" fill="#ff9500"/>
<g transform="translate(866.4 46)" fill="none" stroke="#f2f2f2"><path d="M-4.3 -4.1A6.1 6.1 0 0 1 4.3 -4.1" stroke-width="1.5"/><path d="M-2.7 -2.3A3.8 3.8 0 0 1 2.7 -2.3" stroke-width="1.4"/><path d="M-1.2 -0.7L0 0.5L1.2 -0.7A1.7 1.7 0 0 0 -1.2 -0.7Z" fill="#f2f2f2" stroke="none"/></g>
<text x="873.7" y="45.7" font-size="8.6" fill="#f0f0f0" textLength="22.5" lengthAdjust="spacingAndGlyphs" stroke="#f0f0f0" stroke-width="0.2">100 %</text>
<rect x="897.6" y="39.5" width="15.2" height="6.8" rx="2" fill="none" stroke="#8e8e90" stroke-width="0.7"/>
<rect x="898.7" y="40.6" width="13" height="4.6" rx="1.1" fill="#ffffff"/>
<path d="M913.9 41.7V44.1" stroke="#8e8e90" stroke-width="1" stroke-linecap="round"/>
<path d="M51.2 59.2H57.2L61.7 63.7V72.4Q61.7 73.8 60.3 73.8H51.2Q49.8 73.8 49.8 72.4V60.6Q49.8 59.2 51.2 59.2Z" fill="#dadada"/>
<path d="M57 59.2V62.4Q57 63.9 58.5 63.9H61.7" fill="none" stroke="#232527" stroke-width="0.9"/>
<rect x="81" y="55" width="56" height="22" rx="3.5" fill="#1a1c1d"/>
<rect x="150.8" y="55" width="56.2" height="22" rx="3.5" fill="#1a1c1d"/>
<path d="M108.6 55V77M178.6 55V77" stroke="#232527" stroke-width="1"/>
<g fill="none" stroke="#e0e0e0" stroke-width="1"><rect x="83.5" y="63.8" width="4.4" height="5" rx="1.1"/><rect x="90" y="61.4" width="9.8" height="9.8" rx="1.6" stroke-width="1.2"/><rect x="101.8" y="63.8" width="4.4" height="5" rx="1.1"/></g>
<g fill="none" stroke="#e0e0e0" stroke-width="1.1"><rect x="121.2" y="59.6" width="4.4" height="9" rx="2.2" fill="#e0e0e0" stroke="none"/><path d="M118.6 66.2A4.8 4.8 0 0 0 128.2 66.2M123.4 71V73.6M120.4 73.7H126.4"/></g>
<g fill="none" stroke="#e0e0e0" stroke-width="1"><path d="M159.4 60V73.2M164.4 60V73.2M169.6 60V73.2"/><circle cx="159.4" cy="68.6" r="1.25" fill="#1a1c1d"/><circle cx="164.4" cy="63.6" r="1.25" fill="#1a1c1d"/><circle cx="169.6" cy="67.4" r="1.25" fill="#1a1c1d"/></g>
<text x="184.4" y="71.1" font-size="13.6" fill="#e4e4e4" textLength="16.8" lengthAdjust="spacingAndGlyphs" >FX</text>
<rect x="422" y="55.1" width="114" height="22" rx="3.5" fill="#1a1c1d"/>
<rect x="456.7" y="55.1" width="45.3" height="22" fill="#153d1c"/>
<rect x="432" y="59.9" width="13.1" height="12.2" rx="1.3" fill="#c9c9c9"/>
<path d="M474.4 59.9Q474.4 59.2 475 59.6L485.3 65.8Q485.9 66.2 485.3 66.6L475 72.7Q474.4 73.1 474.4 72.4Z" fill="#3fd158"/>
<circle cx="519.5" cy="66.4" r="7.6" fill="#ff3b30"/>
<rect x="554.6" y="62.1" width="93.8" height="8" rx="4" fill="#1b1d1e"/>
<rect x="556.8" y="63.65" width="81.6" height="1.5" fill="url(#mvol)"/>
<rect x="556.8" y="67.05" width="81.6" height="1.5" fill="url(#mvol)"/>
<circle cx="585.3" cy="66.1" r="6" fill="#ffffff" fill-opacity="0.05" stroke="#ffffff" stroke-opacity="0.12" stroke-width="0.8"/>
<g fill="none" stroke="#0b74e4" stroke-linejoin="round" stroke-linecap="round"><path d="M671.6 60.4Q672.5 59 673.4 60.4L679.5 70.8Q680.3 72.6 678.4 72.6H666.6Q664.7 72.6 665.5 70.8Z" stroke-width="1.25"/><path d="M667.2 68.6H677.8L679.2 71.8H665.8Z" fill="#0b74e4" stroke-width="0.8"/><path d="M672.7 61.6V68.4" stroke-width="0.9"/><path d="M674.6 63.6L676.8 68" stroke-width="1.6" stroke-opacity="0.55"/><path d="M666.1 62.3L672.2 68.3" stroke="#232628" stroke-width="2.8"/><path d="M666.1 62.3L672.2 68.3" stroke-width="1.25"/></g>
<g fill="none" stroke="#e0e0e0" stroke-width="1.05"><circle cx="834.3" cy="65.75" r="6.3"/><path d="M826.2 72.4H842.3"/></g>
<g transform="translate(868 66)" fill="none" stroke="#e0e0e0"><circle r="5.5" stroke-width="1"/><path d="M5.6 0L7 0M5.17 2.14L6.47 2.68M3.96 3.96L4.95 4.95M2.14 5.17L2.68 6.47M0 5.6L0 7M-2.14 5.17L-2.68 6.47M-3.96 3.96L-4.95 4.95M-5.17 2.14L-6.47 2.68M-5.6 0L-7 0M-5.17 -2.14L-6.47 -2.68M-3.96 -3.96L-4.95 -4.95M-2.14 -5.17L-2.68 -6.47M-0 -5.6L-0 -7M2.14 -5.17L2.68 -6.47M3.96 -3.96L4.95 -4.95M5.17 -2.14L6.47 -2.68" stroke-width="1.2"/><circle cx="0.2" cy="0" r="1.1" stroke-width="0.8"/><path d="M1.2 0H5.4M-0.4 -1L-3 -4.6M-0.4 1L-3 4.6" stroke-width="0.9"/></g>
<circle cx="902.3" cy="66" r="7.1" fill="#c9c9c9"/>
<text x="902.3" y="69.6" font-size="10.4" fill="#2a2c2e" font-weight="bold" text-anchor="middle" >?</text>
<path d="M628.4 106V640.6" stroke="#000" stroke-opacity="0.35" stroke-width="2.4" fill="none"/>
<path d="M628.4 106V640.6" stroke="#d4d4d4" stroke-width="1.3" fill="none"/>
<path d="M620.9 88.5H636.9Q637.4 88.5 637.4 89V97.5L628.5 105.4L620.4 97.5V89Q620.4 88.5 620.9 88.5Z" fill="#5e6061" fill-opacity="0.55" stroke="#cccccc" stroke-width="0.85"/>
<rect x="366" y="693.6" width="225.6" height="4" rx="2" fill="#4e5051"/>
</g>
</svg>
</body></html>
